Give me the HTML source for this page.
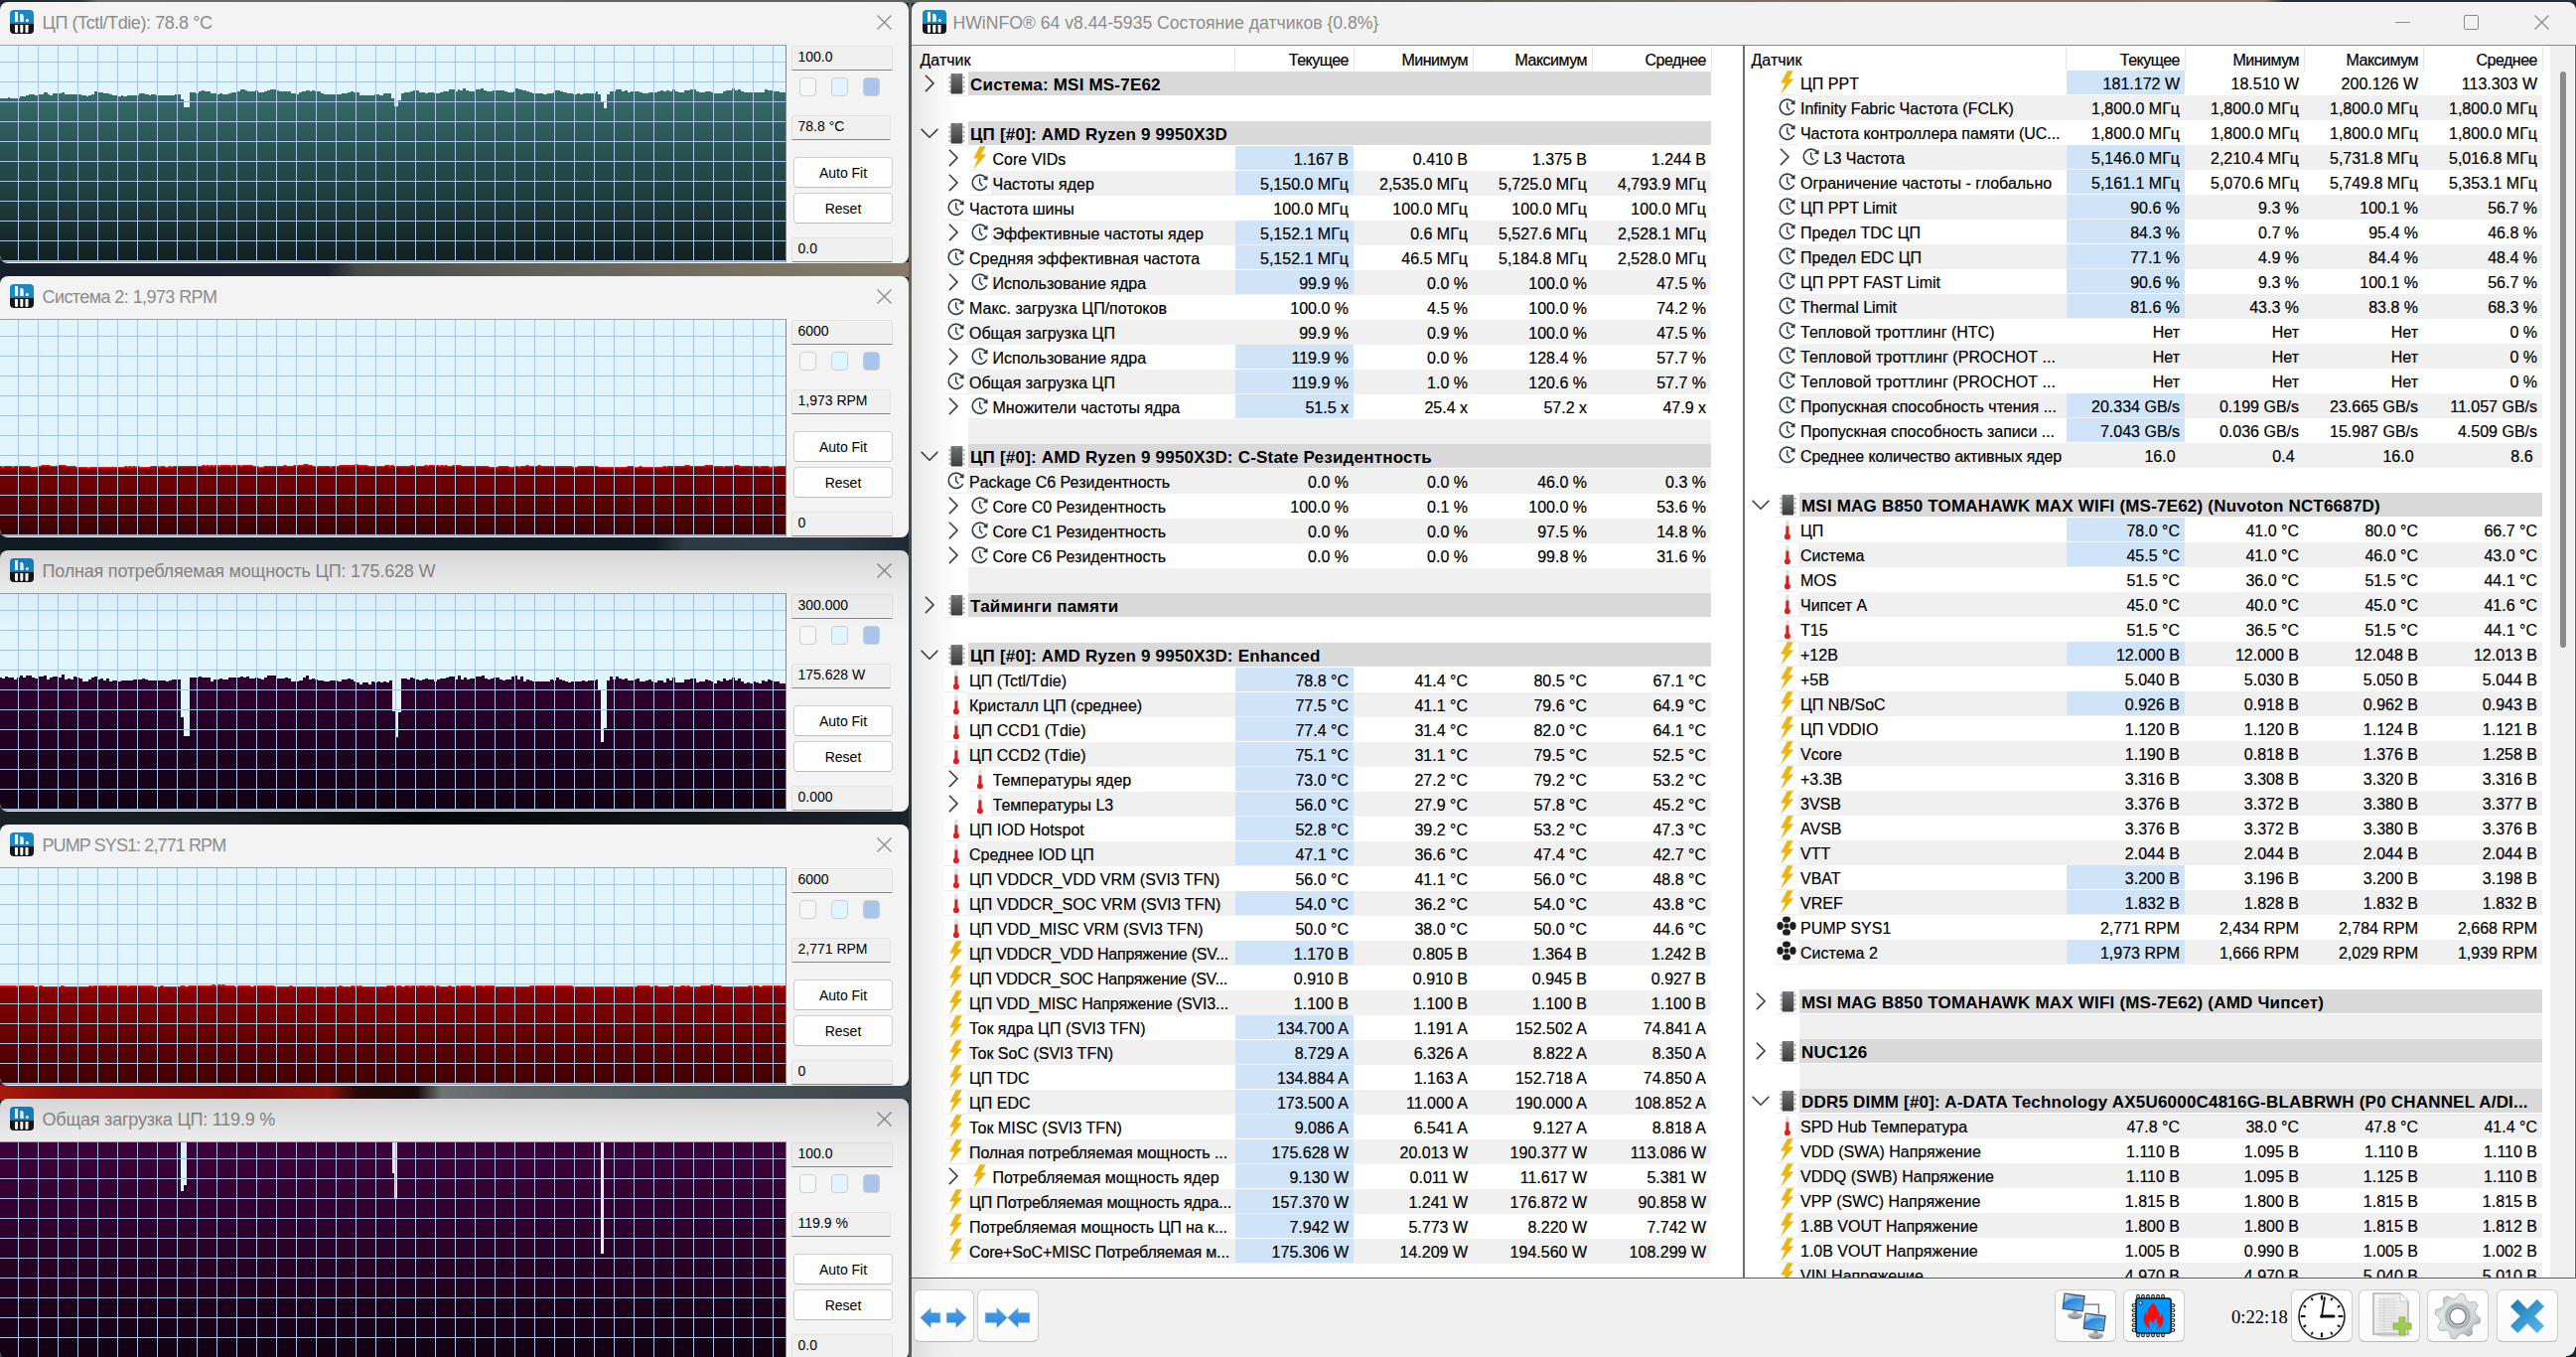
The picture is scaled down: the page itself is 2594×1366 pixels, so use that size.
<!DOCTYPE html><html><head><meta charset="utf-8"><style>
html,body{margin:0;padding:0;width:2594px;height:1366px;overflow:hidden;background:#1b242b;font-family:"Liberation Sans",sans-serif;color:#000}
.a{position:absolute}
.t{white-space:pre;font-size:16px;-webkit-text-stroke:0.2px #000}
</style></head><body>
<div class="a" style="left:0px;top:0px;width:2594px;height:3px;background:linear-gradient(90deg,#1c262d 0,#2a3338 80px,#6a6e6a 100px,#5d625f 900px,#4f5552 1300px,#7a7262 1800px,#8b7e69 2280px,#25303a 2300px,#25303a 2594px)"></div><div class="a" style="left:0px;top:264px;width:915px;height:15px;background:linear-gradient(90deg,#17202a 0,#1a2430 330px,#454a48 360px,#5c5e58 520px,#7d7564 800px,#857b68 915px)"></div><div class="a" style="left:0px;top:540px;width:915px;height:15px;background:linear-gradient(90deg,#121a22 0,#131b22 660px,#2d3b44 690px,#283844 850px,#1e2a32 915px)"></div><div class="a" style="left:0px;top:816px;width:915px;height:15px;background:linear-gradient(90deg,#1a2228 0,#141a20 250px,#050608 420px,#0a0c10 560px,#1c242a 915px)"></div><div class="a" style="left:0px;top:1092px;width:915px;height:15px;background:linear-gradient(90deg,#a81a0a 0,#8a0c08 60px,#6e0808 250px,#8a1008 330px,#2a0808 360px,#1a0a0a 420px,#707476 445px,#5e6264 520px,#4a5256 700px,#3c464c 915px)"></div><div class="a" style="left:915px;top:0px;width:3px;height:1366px;background:linear-gradient(180deg,#555a5c,#6a645a 300px,#3a444a 600px,#2a3036 900px,#5a5e60 1366px)"></div><div class="a" style="left:0;top:2px;width:915px;height:263px;background:#f3f3f3;border-radius:8px;overflow:hidden"><svg style="position:absolute;left:10px;top:8px" width="24" height="24" viewBox="0 0 24 24" ><defs><clipPath id="hwc"><rect x="0" y="0" width="24" height="24" rx="4"/></clipPath></defs><g clip-path="url(#hwc)"><rect width="24" height="13.5" fill="#1a87c6"/><rect y="13.5" width="24" height="10.5" fill="#161616"/></g><rect x="5" y="2" width="3" height="10" fill="#fff"/><path d="M10.3 4 L12.3 4 Q13.7 4.5 13.7 6.5 L13.7 12 L10.3 12 Z" fill="#fff"/><circle cx="17.3" cy="10.5" r="1.5" fill="#fff"/><path d="M5 15 h3 v6.5 a1.5 1.5 0 0 1 -3 0 Z M10.3 15 h3 v6.5 a1.5 1.5 0 0 1 -3 0 Z M15.5 15 h3 v6.5 a1.5 1.5 0 0 1 -3 0 Z" fill="#fff"/></svg><div class="a" style="left:42.5px;top:8.5px;height:25px;line-height:25px;font-size:18px;letter-spacing:-0.41px;color:#8c8c8c;white-space:pre">ЦП (Tctl/Tdie): 78.8 °C</div><svg style="position:absolute;left:883px;top:13px" width="15" height="15" viewBox="0 0 15 15" ><path d="M0.5 0.5 L14.5 14.5 M14.5 0.5 L0.5 14.5" stroke="#8a8a8a" stroke-width="1.3" fill="none"/></svg><div class="a" style="left:0;top:43px;width:792px;height:1px;background:#9e9e9e"></div><div class="a" style="left:0;top:261px;width:792px;height:1px;background:#a0a0a0"></div><div class="a" style="left:791px;top:43px;width:1px;height:219px;background:#8a8a8a"></div><svg style="position:absolute;left:0px;top:44px" width="791" height="217" viewBox="0 0 791 217" ><defs><linearGradient id="gf0" x1="0" y1="0" x2="0" y2="1"><stop offset="0" stop-color="#386f6d"/><stop offset="1" stop-color="#112020"/></linearGradient></defs><rect width="791" height="217" fill="#e0f6fc"/><polygon points="0,217 0,53 8,53 8,52 10,52 10,53 18,53 18,53 20,53 20,51 26,51 26,50 29,50 29,49 35,49 35,50 38,50 38,49 44,49 44,47 48,47 48,49 50,49 50,50 53,50 53,48 62,48 62,47 65,47 65,49 82,49 82,50 87,50 87,51 89,51 89,50 92,50 92,49 95,49 95,46 98,46 98,47 104,47 104,48 110,48 110,49 113,49 113,50 119,50 119,51 122,51 122,50 124,50 124,51 128,51 128,50 140,50 140,48 146,48 146,49 150,49 150,50 152,50 152,49 157,49 157,50 176,50 176,49 182,49 182,54 185,54 185,62 191,62 191,47 197,47 197,48 200,48 200,46 203,46 203,45 206,45 206,46 212,46 212,48 218,48 218,49 221,49 221,48 224,48 224,49 230,49 230,48 233,48 233,47 239,47 239,46 242,46 242,44 247,44 247,45 249,45 249,46 257,46 257,45 260,45 260,47 266,47 266,46 269,46 269,45 272,45 272,44 278,44 278,45 281,45 281,46 293,46 293,48 298,48 298,49 301,49 301,47 304,47 304,46 308,46 308,45 312,45 312,46 314,46 314,45 317,45 317,46 323,46 323,48 326,48 326,49 344,49 344,48 350,48 350,47 353,47 353,46 356,46 356,47 362,47 362,50 377,50 377,49 382,49 382,50 386,50 386,48 394,48 394,53 397,53 397,61 400,61 400,61 401,61 401,55 404,55 404,48 407,48 407,47 413,47 413,46 416,46 416,45 422,45 422,47 428,47 428,48 431,48 431,47 437,47 437,48 443,48 443,47 446,47 446,46 452,46 452,44 458,44 458,46 461,46 461,44 463,44 463,45 466,45 466,43 469,43 469,45 472,45 472,46 478,46 478,44 484,44 484,43 487,43 487,45 490,45 490,46 496,46 496,45 508,45 508,46 511,46 511,47 517,47 517,46 519,46 519,43 522,43 522,44 526,44 526,45 530,45 530,46 533,46 533,47 536,47 536,48 547,48 547,49 551,49 551,48 557,48 557,47 559,47 559,45 564,45 564,46 567,46 567,47 571,47 571,48 577,48 577,49 581,49 581,48 584,48 584,49 587,49 587,48 600,48 600,46 602,46 602,49 605,49 605,56 608,56 608,63 611,63 611,49 614,49 614,46 620,46 620,44 626,44 626,46 629,46 629,45 632,45 632,47 635,47 635,46 644,46 644,47 647,47 647,48 653,48 653,47 662,47 662,46 665,46 665,45 668,45 668,46 671,46 671,45 674,45 674,46 677,46 677,44 680,44 680,46 683,46 683,47 689,47 689,45 695,45 695,44 701,44 701,46 704,46 704,47 710,47 710,46 716,46 716,47 719,47 719,48 728,48 728,46 731,46 731,45 737,45 737,43 740,43 740,45 743,45 743,44 746,44 746,46 749,46 749,47 770,47 770,44 773,44 773,45 779,45 779,46 785,46 785,47 791,47 791,217" fill="url(#gf0)" shape-rendering="crispEdges"/><path d="M0 16.5H791M0 36.5H791M0 56.5H791M0 76.5H791M0 96.5H791M0 116.5H791M0 136.5H791M0 156.5H791M0 176.5H791M0 196.5H791M0 216.5H791M18.5 0V217M38.5 0V217M58.5 0V217M78.5 0V217M98.5 0V217M118.5 0V217M138.5 0V217M158.5 0V217M178.5 0V217M198.5 0V217M218.5 0V217M238.5 0V217M258.5 0V217M278.5 0V217M298.5 0V217M318.5 0V217M338.5 0V217M358.5 0V217M378.5 0V217M398.5 0V217M418.5 0V217M438.5 0V217M458.5 0V217M478.5 0V217M498.5 0V217M518.5 0V217M538.5 0V217M558.5 0V217M578.5 0V217M598.5 0V217M618.5 0V217M638.5 0V217M658.5 0V217M678.5 0V217M698.5 0V217M718.5 0V217M738.5 0V217M758.5 0V217M778.5 0V217" stroke="#a8c4ea" stroke-width="1" fill="none"/></svg><div class="a" style="left:797px;top:44px;width:100px;height:23px;background:#f0f0f0;border:1px solid #e2e2e2;border-bottom:1px solid #868686;border-radius:3px 3px 0 0"></div><div class="a" style="left:803.5px;top:43px;height:25px;line-height:25px;font-size:14px;white-space:pre">100.0</div><div class="a" style="left:805px;top:76px;width:15px;height:17px;background:#f5f6f6;border:1px solid #cfcfcf;border-radius:4px"></div><div class="a" style="left:837px;top:76px;width:15px;height:17px;background:#e0f6fc;border:1px solid #cfcfcf;border-radius:4px"></div><div class="a" style="left:869px;top:76px;width:15px;height:17px;background:#a8c4ea;border:1px solid #cfcfcf;border-radius:4px"></div><div class="a" style="left:797px;top:114px;width:98px;height:23px;background:#f0f0f0;border:1px solid #e2e2e2;border-bottom:1px solid #868686;border-radius:3px 3px 0 0"></div><div class="a" style="left:803.5px;top:113px;height:25px;line-height:25px;font-size:14px;white-space:pre">78.8 °C</div><div class="a" style="left:799px;top:156px;width:98px;height:29px;background:#fdfdfd;border:1px solid #d0d0d0;border-bottom-color:#bdbdbd;border-radius:4px;text-align:center;line-height:31px;font-size:14px">Auto Fit</div><div class="a" style="left:799px;top:192px;width:98px;height:29px;background:#fdfdfd;border:1px solid #d0d0d0;border-bottom-color:#bdbdbd;border-radius:4px;text-align:center;line-height:31px;font-size:14px">Reset</div><div class="a" style="left:797px;top:237px;width:100px;height:23px;background:#f0f0f0;border:1px solid #e2e2e2;border-bottom:1px solid #868686;border-radius:3px 3px 0 0"></div><div class="a" style="left:803.5px;top:236px;height:25px;line-height:25px;font-size:14px;white-space:pre">0.0</div></div><div class="a" style="left:0;top:278px;width:915px;height:263px;background:#f3f3f3;border-radius:8px;overflow:hidden"><svg style="position:absolute;left:10px;top:8px" width="24" height="24" viewBox="0 0 24 24" ><defs><clipPath id="hwc"><rect x="0" y="0" width="24" height="24" rx="4"/></clipPath></defs><g clip-path="url(#hwc)"><rect width="24" height="13.5" fill="#1a87c6"/><rect y="13.5" width="24" height="10.5" fill="#161616"/></g><rect x="5" y="2" width="3" height="10" fill="#fff"/><path d="M10.3 4 L12.3 4 Q13.7 4.5 13.7 6.5 L13.7 12 L10.3 12 Z" fill="#fff"/><circle cx="17.3" cy="10.5" r="1.5" fill="#fff"/><path d="M5 15 h3 v6.5 a1.5 1.5 0 0 1 -3 0 Z M10.3 15 h3 v6.5 a1.5 1.5 0 0 1 -3 0 Z M15.5 15 h3 v6.5 a1.5 1.5 0 0 1 -3 0 Z" fill="#fff"/></svg><div class="a" style="left:42.5px;top:8.5px;height:25px;line-height:25px;font-size:18px;letter-spacing:-0.58px;color:#8c8c8c;white-space:pre">Система 2: 1,973 RPM</div><svg style="position:absolute;left:883px;top:13px" width="15" height="15" viewBox="0 0 15 15" ><path d="M0.5 0.5 L14.5 14.5 M14.5 0.5 L0.5 14.5" stroke="#8a8a8a" stroke-width="1.3" fill="none"/></svg><div class="a" style="left:0;top:43px;width:792px;height:1px;background:#9e9e9e"></div><div class="a" style="left:0;top:261px;width:792px;height:1px;background:#a0a0a0"></div><div class="a" style="left:791px;top:43px;width:1px;height:219px;background:#8a8a8a"></div><svg style="position:absolute;left:0px;top:44px" width="791" height="217" viewBox="0 0 791 217" ><defs><linearGradient id="gf1" x1="0" y1="0" x2="0" y2="1"><stop offset="0" stop-color="#7e0000"/><stop offset="1" stop-color="#3a0000"/></linearGradient></defs><rect width="791" height="217" fill="#e0f6fc"/><polygon points="0,217 0,147 2,147 2,148 4,148 4,147 6,147 6,147 8,147 8,147 10,147 10,147 12,147 12,148 14,148 14,147 16,147 16,147 18,147 18,147 20,147 20,147 22,147 22,147 24,147 24,147 26,147 26,147 28,147 28,147 30,147 30,148 32,148 32,148 34,148 34,148 36,148 36,148 38,148 38,147 40,147 40,147 42,147 42,146 44,146 44,146 46,146 46,146 48,146 48,146 50,146 50,147 52,147 52,147 54,147 54,147 56,147 56,147 58,147 58,146 60,146 60,146 62,146 62,146 64,146 64,146 66,146 66,147 68,147 68,147 70,147 70,147 72,147 72,147 74,147 74,147 76,147 76,148 78,148 78,148 80,148 80,148 82,148 82,148 84,148 84,148 86,148 86,148 88,148 88,149 90,149 90,148 92,148 92,148 94,148 94,148 96,148 96,148 98,148 98,148 100,148 100,148 102,148 102,148 104,148 104,148 106,148 106,148 108,148 108,148 110,148 110,148 112,148 112,148 114,148 114,148 116,148 116,148 118,148 118,148 120,148 120,148 122,148 122,148 124,148 124,148 126,148 126,147 128,147 128,148 130,148 130,147 132,147 132,148 134,148 134,147 136,147 136,148 138,148 138,147 140,147 140,148 142,148 142,148 144,148 144,148 146,148 146,148 148,148 148,148 150,148 150,148 152,148 152,147 154,147 154,147 156,147 156,147 158,147 158,147 160,147 160,148 162,148 162,147 164,147 164,147 166,147 166,148 168,148 168,148 170,148 170,147 172,147 172,148 174,148 174,147 176,147 176,147 178,147 178,147 180,147 180,147 182,147 182,147 184,147 184,147 186,147 186,147 188,147 188,147 190,147 190,147 192,147 192,147 194,147 194,147 196,147 196,147 198,147 198,147 200,147 200,147 202,147 202,147 204,147 204,146 206,146 206,147 208,147 208,146 210,146 210,147 212,147 212,146 214,146 214,147 216,147 216,146 218,146 218,146 220,146 220,147 222,147 222,146 224,146 224,146 226,146 226,146 228,146 228,146 230,146 230,146 232,146 232,147 234,147 234,146 236,146 236,146 238,146 238,146 240,146 240,146 242,146 242,147 244,147 244,146 246,146 246,146 248,146 248,146 250,146 250,146 252,146 252,146 254,146 254,147 256,147 256,147 258,147 258,147 260,147 260,148 262,148 262,148 264,148 264,148 266,148 266,147 268,147 268,147 270,147 270,147 272,147 272,147 274,147 274,147 276,147 276,147 278,147 278,147 280,147 280,147 282,147 282,147 284,147 284,147 286,147 286,146 288,146 288,147 290,147 290,147 292,147 292,147 294,147 294,147 296,147 296,146 298,146 298,147 300,147 300,146 302,146 302,146 304,146 304,146 306,146 306,145 308,145 308,145 310,145 310,146 312,146 312,146 314,146 314,147 316,147 316,147 318,147 318,148 320,148 320,147 322,147 322,147 324,147 324,147 326,147 326,147 328,147 328,147 330,147 330,147 332,147 332,148 334,148 334,147 336,147 336,147 338,147 338,147 340,147 340,147 342,147 342,146 344,146 344,146 346,146 346,146 348,146 348,146 350,146 350,146 352,146 352,146 354,146 354,146 356,146 356,146 358,146 358,145 360,145 360,146 362,146 362,146 364,146 364,146 366,146 366,146 368,146 368,146 370,146 370,147 372,147 372,147 374,147 374,147 376,147 376,147 378,147 378,147 380,147 380,147 382,147 382,147 384,147 384,147 386,147 386,147 388,147 388,146 390,146 390,146 392,146 392,147 394,147 394,146 396,146 396,147 398,147 398,147 400,147 400,147 402,147 402,147 404,147 404,147 406,147 406,147 408,147 408,147 410,147 410,147 412,147 412,147 414,147 414,146 416,146 416,147 418,147 418,147 420,147 420,147 422,147 422,147 424,147 424,147 426,147 426,147 428,147 428,146 430,146 430,147 432,147 432,146 434,146 434,146 436,146 436,146 438,146 438,147 440,147 440,146 442,146 442,147 444,147 444,146 446,146 446,147 448,147 448,146 450,146 450,147 452,147 452,147 454,147 454,147 456,147 456,146 458,146 458,146 460,146 460,146 462,146 462,146 464,146 464,147 466,147 466,147 468,147 468,147 470,147 470,147 472,147 472,147 474,147 474,147 476,147 476,147 478,147 478,147 480,147 480,147 482,147 482,147 484,147 484,147 486,147 486,147 488,147 488,147 490,147 490,147 492,147 492,148 494,148 494,148 496,148 496,148 498,148 498,148 500,148 500,148 502,148 502,147 504,147 504,147 506,147 506,147 508,147 508,147 510,147 510,147 512,147 512,148 514,148 514,148 516,148 516,148 518,148 518,147 520,147 520,147 522,147 522,148 524,148 524,147 526,147 526,147 528,147 528,147 530,147 530,146 532,146 532,147 534,147 534,147 536,147 536,147 538,147 538,147 540,147 540,147 542,147 542,146 544,146 544,147 546,147 546,147 548,147 548,147 550,147 550,147 552,147 552,147 554,147 554,147 556,147 556,147 558,147 558,147 560,147 560,147 562,147 562,147 564,147 564,147 566,147 566,147 568,147 568,147 570,147 570,147 572,147 572,147 574,147 574,147 576,147 576,148 578,148 578,148 580,148 580,148 582,148 582,147 584,147 584,147 586,147 586,147 588,147 588,147 590,147 590,147 592,147 592,147 594,147 594,147 596,147 596,147 598,147 598,147 600,147 600,147 602,147 602,148 604,148 604,148 606,148 606,148 608,148 608,148 610,148 610,148 612,148 612,148 614,148 614,148 616,148 616,148 618,148 618,148 620,148 620,148 622,148 622,148 624,148 624,148 626,148 626,148 628,148 628,148 630,148 630,148 632,148 632,147 634,147 634,147 636,147 636,147 638,147 638,148 640,148 640,148 642,148 642,148 644,148 644,147 646,147 646,148 648,148 648,148 650,148 650,148 652,148 652,148 654,148 654,148 656,148 656,148 658,148 658,148 660,148 660,148 662,148 662,148 664,148 664,148 666,148 666,148 668,148 668,147 670,147 670,148 672,148 672,147 674,147 674,147 676,147 676,147 678,147 678,147 680,147 680,147 682,147 682,147 684,147 684,147 686,147 686,147 688,147 688,147 690,147 690,146 692,146 692,146 694,146 694,147 696,147 696,147 698,147 698,147 700,147 700,147 702,147 702,147 704,147 704,147 706,147 706,147 708,147 708,147 710,147 710,146 712,146 712,146 714,146 714,146 716,146 716,146 718,146 718,147 720,147 720,147 722,147 722,147 724,147 724,147 726,147 726,147 728,147 728,148 730,148 730,147 732,147 732,147 734,147 734,147 736,147 736,147 738,147 738,147 740,147 740,146 742,146 742,146 744,146 744,147 746,147 746,147 748,147 748,147 750,147 750,147 752,147 752,147 754,147 754,147 756,147 756,147 758,147 758,147 760,147 760,147 762,147 762,147 764,147 764,148 766,148 766,147 768,147 768,147 770,147 770,147 772,147 772,147 774,147 774,148 776,148 776,148 778,148 778,147 780,147 780,148 782,148 782,147 784,147 784,147 786,147 786,147 788,147 788,147 790,147 790,147 792,147 791,217" fill="url(#gf1)" shape-rendering="crispEdges"/><polyline points="0,147.5 2,147.5 2,148.5 4,148.5 4,147.5 6,147.5 6,147.5 8,147.5 8,147.5 10,147.5 10,147.5 12,147.5 12,148.5 14,148.5 14,147.5 16,147.5 16,147.5 18,147.5 18,147.5 20,147.5 20,147.5 22,147.5 22,147.5 24,147.5 24,147.5 26,147.5 26,147.5 28,147.5 28,147.5 30,147.5 30,148.5 32,148.5 32,148.5 34,148.5 34,148.5 36,148.5 36,148.5 38,148.5 38,147.5 40,147.5 40,147.5 42,147.5 42,146.5 44,146.5 44,146.5 46,146.5 46,146.5 48,146.5 48,146.5 50,146.5 50,147.5 52,147.5 52,147.5 54,147.5 54,147.5 56,147.5 56,147.5 58,147.5 58,146.5 60,146.5 60,146.5 62,146.5 62,146.5 64,146.5 64,146.5 66,146.5 66,147.5 68,147.5 68,147.5 70,147.5 70,147.5 72,147.5 72,147.5 74,147.5 74,147.5 76,147.5 76,148.5 78,148.5 78,148.5 80,148.5 80,148.5 82,148.5 82,148.5 84,148.5 84,148.5 86,148.5 86,148.5 88,148.5 88,149.5 90,149.5 90,148.5 92,148.5 92,148.5 94,148.5 94,148.5 96,148.5 96,148.5 98,148.5 98,148.5 100,148.5 100,148.5 102,148.5 102,148.5 104,148.5 104,148.5 106,148.5 106,148.5 108,148.5 108,148.5 110,148.5 110,148.5 112,148.5 112,148.5 114,148.5 114,148.5 116,148.5 116,148.5 118,148.5 118,148.5 120,148.5 120,148.5 122,148.5 122,148.5 124,148.5 124,148.5 126,148.5 126,147.5 128,147.5 128,148.5 130,148.5 130,147.5 132,147.5 132,148.5 134,148.5 134,147.5 136,147.5 136,148.5 138,148.5 138,147.5 140,147.5 140,148.5 142,148.5 142,148.5 144,148.5 144,148.5 146,148.5 146,148.5 148,148.5 148,148.5 150,148.5 150,148.5 152,148.5 152,147.5 154,147.5 154,147.5 156,147.5 156,147.5 158,147.5 158,147.5 160,147.5 160,148.5 162,148.5 162,147.5 164,147.5 164,147.5 166,147.5 166,148.5 168,148.5 168,148.5 170,148.5 170,147.5 172,147.5 172,148.5 174,148.5 174,147.5 176,147.5 176,147.5 178,147.5 178,147.5 180,147.5 180,147.5 182,147.5 182,147.5 184,147.5 184,147.5 186,147.5 186,147.5 188,147.5 188,147.5 190,147.5 190,147.5 192,147.5 192,147.5 194,147.5 194,147.5 196,147.5 196,147.5 198,147.5 198,147.5 200,147.5 200,147.5 202,147.5 202,147.5 204,147.5 204,146.5 206,146.5 206,147.5 208,147.5 208,146.5 210,146.5 210,147.5 212,147.5 212,146.5 214,146.5 214,147.5 216,147.5 216,146.5 218,146.5 218,146.5 220,146.5 220,147.5 222,147.5 222,146.5 224,146.5 224,146.5 226,146.5 226,146.5 228,146.5 228,146.5 230,146.5 230,146.5 232,146.5 232,147.5 234,147.5 234,146.5 236,146.5 236,146.5 238,146.5 238,146.5 240,146.5 240,146.5 242,146.5 242,147.5 244,147.5 244,146.5 246,146.5 246,146.5 248,146.5 248,146.5 250,146.5 250,146.5 252,146.5 252,146.5 254,146.5 254,147.5 256,147.5 256,147.5 258,147.5 258,147.5 260,147.5 260,148.5 262,148.5 262,148.5 264,148.5 264,148.5 266,148.5 266,147.5 268,147.5 268,147.5 270,147.5 270,147.5 272,147.5 272,147.5 274,147.5 274,147.5 276,147.5 276,147.5 278,147.5 278,147.5 280,147.5 280,147.5 282,147.5 282,147.5 284,147.5 284,147.5 286,147.5 286,146.5 288,146.5 288,147.5 290,147.5 290,147.5 292,147.5 292,147.5 294,147.5 294,147.5 296,147.5 296,146.5 298,146.5 298,147.5 300,147.5 300,146.5 302,146.5 302,146.5 304,146.5 304,146.5 306,146.5 306,145.5 308,145.5 308,145.5 310,145.5 310,146.5 312,146.5 312,146.5 314,146.5 314,147.5 316,147.5 316,147.5 318,147.5 318,148.5 320,148.5 320,147.5 322,147.5 322,147.5 324,147.5 324,147.5 326,147.5 326,147.5 328,147.5 328,147.5 330,147.5 330,147.5 332,147.5 332,148.5 334,148.5 334,147.5 336,147.5 336,147.5 338,147.5 338,147.5 340,147.5 340,147.5 342,147.5 342,146.5 344,146.5 344,146.5 346,146.5 346,146.5 348,146.5 348,146.5 350,146.5 350,146.5 352,146.5 352,146.5 354,146.5 354,146.5 356,146.5 356,146.5 358,146.5 358,145.5 360,145.5 360,146.5 362,146.5 362,146.5 364,146.5 364,146.5 366,146.5 366,146.5 368,146.5 368,146.5 370,146.5 370,147.5 372,147.5 372,147.5 374,147.5 374,147.5 376,147.5 376,147.5 378,147.5 378,147.5 380,147.5 380,147.5 382,147.5 382,147.5 384,147.5 384,147.5 386,147.5 386,147.5 388,147.5 388,146.5 390,146.5 390,146.5 392,146.5 392,147.5 394,147.5 394,146.5 396,146.5 396,147.5 398,147.5 398,147.5 400,147.5 400,147.5 402,147.5 402,147.5 404,147.5 404,147.5 406,147.5 406,147.5 408,147.5 408,147.5 410,147.5 410,147.5 412,147.5 412,147.5 414,147.5 414,146.5 416,146.5 416,147.5 418,147.5 418,147.5 420,147.5 420,147.5 422,147.5 422,147.5 424,147.5 424,147.5 426,147.5 426,147.5 428,147.5 428,146.5 430,146.5 430,147.5 432,147.5 432,146.5 434,146.5 434,146.5 436,146.5 436,146.5 438,146.5 438,147.5 440,147.5 440,146.5 442,146.5 442,147.5 444,147.5 444,146.5 446,146.5 446,147.5 448,147.5 448,146.5 450,146.5 450,147.5 452,147.5 452,147.5 454,147.5 454,147.5 456,147.5 456,146.5 458,146.5 458,146.5 460,146.5 460,146.5 462,146.5 462,146.5 464,146.5 464,147.5 466,147.5 466,147.5 468,147.5 468,147.5 470,147.5 470,147.5 472,147.5 472,147.5 474,147.5 474,147.5 476,147.5 476,147.5 478,147.5 478,147.5 480,147.5 480,147.5 482,147.5 482,147.5 484,147.5 484,147.5 486,147.5 486,147.5 488,147.5 488,147.5 490,147.5 490,147.5 492,147.5 492,148.5 494,148.5 494,148.5 496,148.5 496,148.5 498,148.5 498,148.5 500,148.5 500,148.5 502,148.5 502,147.5 504,147.5 504,147.5 506,147.5 506,147.5 508,147.5 508,147.5 510,147.5 510,147.5 512,147.5 512,148.5 514,148.5 514,148.5 516,148.5 516,148.5 518,148.5 518,147.5 520,147.5 520,147.5 522,147.5 522,148.5 524,148.5 524,147.5 526,147.5 526,147.5 528,147.5 528,147.5 530,147.5 530,146.5 532,146.5 532,147.5 534,147.5 534,147.5 536,147.5 536,147.5 538,147.5 538,147.5 540,147.5 540,147.5 542,147.5 542,146.5 544,146.5 544,147.5 546,147.5 546,147.5 548,147.5 548,147.5 550,147.5 550,147.5 552,147.5 552,147.5 554,147.5 554,147.5 556,147.5 556,147.5 558,147.5 558,147.5 560,147.5 560,147.5 562,147.5 562,147.5 564,147.5 564,147.5 566,147.5 566,147.5 568,147.5 568,147.5 570,147.5 570,147.5 572,147.5 572,147.5 574,147.5 574,147.5 576,147.5 576,148.5 578,148.5 578,148.5 580,148.5 580,148.5 582,148.5 582,147.5 584,147.5 584,147.5 586,147.5 586,147.5 588,147.5 588,147.5 590,147.5 590,147.5 592,147.5 592,147.5 594,147.5 594,147.5 596,147.5 596,147.5 598,147.5 598,147.5 600,147.5 600,147.5 602,147.5 602,148.5 604,148.5 604,148.5 606,148.5 606,148.5 608,148.5 608,148.5 610,148.5 610,148.5 612,148.5 612,148.5 614,148.5 614,148.5 616,148.5 616,148.5 618,148.5 618,148.5 620,148.5 620,148.5 622,148.5 622,148.5 624,148.5 624,148.5 626,148.5 626,148.5 628,148.5 628,148.5 630,148.5 630,148.5 632,148.5 632,147.5 634,147.5 634,147.5 636,147.5 636,147.5 638,147.5 638,148.5 640,148.5 640,148.5 642,148.5 642,148.5 644,148.5 644,147.5 646,147.5 646,148.5 648,148.5 648,148.5 650,148.5 650,148.5 652,148.5 652,148.5 654,148.5 654,148.5 656,148.5 656,148.5 658,148.5 658,148.5 660,148.5 660,148.5 662,148.5 662,148.5 664,148.5 664,148.5 666,148.5 666,148.5 668,148.5 668,147.5 670,147.5 670,148.5 672,148.5 672,147.5 674,147.5 674,147.5 676,147.5 676,147.5 678,147.5 678,147.5 680,147.5 680,147.5 682,147.5 682,147.5 684,147.5 684,147.5 686,147.5 686,147.5 688,147.5 688,147.5 690,147.5 690,146.5 692,146.5 692,146.5 694,146.5 694,147.5 696,147.5 696,147.5 698,147.5 698,147.5 700,147.5 700,147.5 702,147.5 702,147.5 704,147.5 704,147.5 706,147.5 706,147.5 708,147.5 708,147.5 710,147.5 710,146.5 712,146.5 712,146.5 714,146.5 714,146.5 716,146.5 716,146.5 718,146.5 718,147.5 720,147.5 720,147.5 722,147.5 722,147.5 724,147.5 724,147.5 726,147.5 726,147.5 728,147.5 728,148.5 730,148.5 730,147.5 732,147.5 732,147.5 734,147.5 734,147.5 736,147.5 736,147.5 738,147.5 738,147.5 740,147.5 740,146.5 742,146.5 742,146.5 744,146.5 744,147.5 746,147.5 746,147.5 748,147.5 748,147.5 750,147.5 750,147.5 752,147.5 752,147.5 754,147.5 754,147.5 756,147.5 756,147.5 758,147.5 758,147.5 760,147.5 760,147.5 762,147.5 762,147.5 764,147.5 764,148.5 766,148.5 766,147.5 768,147.5 768,147.5 770,147.5 770,147.5 772,147.5 772,147.5 774,147.5 774,148.5 776,148.5 776,148.5 778,148.5 778,147.5 780,147.5 780,148.5 782,148.5 782,147.5 784,147.5 784,147.5 786,147.5 786,147.5 788,147.5 788,147.5 790,147.5 790,147.5 792,147.5" fill="none" stroke="#ff0a0a" stroke-width="1.2"/><polyline points="0,147.5 2,147.5 2,148.5 4,148.5 4,147.5 6,147.5 6,147.5 8,147.5 8,147.5 10,147.5 10,147.5 12,147.5 12,148.5 14,148.5 14,147.5 16,147.5 16,147.5 18,147.5 18,147.5 20,147.5 20,147.5 22,147.5 22,147.5 24,147.5 24,147.5 26,147.5 26,147.5 28,147.5 28,147.5 30,147.5 30,148.5 32,148.5 32,148.5 34,148.5 34,148.5 36,148.5 36,148.5 38,148.5 38,147.5 40,147.5 40,147.5 42,147.5 42,146.5 44,146.5 44,146.5 46,146.5 46,146.5 48,146.5 48,146.5 50,146.5 50,147.5 52,147.5 52,147.5 54,147.5 54,147.5 56,147.5 56,147.5 58,147.5 58,146.5 60,146.5 60,146.5 62,146.5 62,146.5 64,146.5 64,146.5 66,146.5 66,147.5 68,147.5 68,147.5 70,147.5 70,147.5 72,147.5 72,147.5 74,147.5 74,147.5 76,147.5 76,148.5 78,148.5 78,148.5 80,148.5 80,148.5 82,148.5 82,148.5 84,148.5 84,148.5 86,148.5 86,148.5 88,148.5 88,149.5 90,149.5 90,148.5 92,148.5 92,148.5 94,148.5 94,148.5 96,148.5 96,148.5 98,148.5 98,148.5 100,148.5 100,148.5 102,148.5 102,148.5 104,148.5 104,148.5 106,148.5 106,148.5 108,148.5 108,148.5 110,148.5 110,148.5 112,148.5 112,148.5 114,148.5 114,148.5 116,148.5 116,148.5 118,148.5 118,148.5 120,148.5 120,148.5 122,148.5 122,148.5 124,148.5 124,148.5 126,148.5 126,147.5 128,147.5 128,148.5 130,148.5 130,147.5 132,147.5 132,148.5 134,148.5 134,147.5 136,147.5 136,148.5 138,148.5 138,147.5 140,147.5 140,148.5 142,148.5 142,148.5 144,148.5 144,148.5 146,148.5 146,148.5 148,148.5 148,148.5 150,148.5 150,148.5 152,148.5 152,147.5 154,147.5 154,147.5 156,147.5 156,147.5 158,147.5 158,147.5 160,147.5 160,148.5 162,148.5 162,147.5 164,147.5 164,147.5 166,147.5 166,148.5 168,148.5 168,148.5 170,148.5 170,147.5 172,147.5 172,148.5 174,148.5 174,147.5 176,147.5 176,147.5 178,147.5 178,147.5 180,147.5 180,147.5 182,147.5 182,147.5 184,147.5 184,147.5 186,147.5 186,147.5 188,147.5 188,147.5 190,147.5 190,147.5 192,147.5 192,147.5 194,147.5 194,147.5 196,147.5 196,147.5 198,147.5 198,147.5 200,147.5 200,147.5 202,147.5 202,147.5 204,147.5 204,146.5 206,146.5 206,147.5 208,147.5 208,146.5 210,146.5 210,147.5 212,147.5 212,146.5 214,146.5 214,147.5 216,147.5 216,146.5 218,146.5 218,146.5 220,146.5 220,147.5 222,147.5 222,146.5 224,146.5 224,146.5 226,146.5 226,146.5 228,146.5 228,146.5 230,146.5 230,146.5 232,146.5 232,147.5 234,147.5 234,146.5 236,146.5 236,146.5 238,146.5 238,146.5 240,146.5 240,146.5 242,146.5 242,147.5 244,147.5 244,146.5 246,146.5 246,146.5 248,146.5 248,146.5 250,146.5 250,146.5 252,146.5 252,146.5 254,146.5 254,147.5 256,147.5 256,147.5 258,147.5 258,147.5 260,147.5 260,148.5 262,148.5 262,148.5 264,148.5 264,148.5 266,148.5 266,147.5 268,147.5 268,147.5 270,147.5 270,147.5 272,147.5 272,147.5 274,147.5 274,147.5 276,147.5 276,147.5 278,147.5 278,147.5 280,147.5 280,147.5 282,147.5 282,147.5 284,147.5 284,147.5 286,147.5 286,146.5 288,146.5 288,147.5 290,147.5 290,147.5 292,147.5 292,147.5 294,147.5 294,147.5 296,147.5 296,146.5 298,146.5 298,147.5 300,147.5 300,146.5 302,146.5 302,146.5 304,146.5 304,146.5 306,146.5 306,145.5 308,145.5 308,145.5 310,145.5 310,146.5 312,146.5 312,146.5 314,146.5 314,147.5 316,147.5 316,147.5 318,147.5 318,148.5 320,148.5 320,147.5 322,147.5 322,147.5 324,147.5 324,147.5 326,147.5 326,147.5 328,147.5 328,147.5 330,147.5 330,147.5 332,147.5 332,148.5 334,148.5 334,147.5 336,147.5 336,147.5 338,147.5 338,147.5 340,147.5 340,147.5 342,147.5 342,146.5 344,146.5 344,146.5 346,146.5 346,146.5 348,146.5 348,146.5 350,146.5 350,146.5 352,146.5 352,146.5 354,146.5 354,146.5 356,146.5 356,146.5 358,146.5 358,145.5 360,145.5 360,146.5 362,146.5 362,146.5 364,146.5 364,146.5 366,146.5 366,146.5 368,146.5 368,146.5 370,146.5 370,147.5 372,147.5 372,147.5 374,147.5 374,147.5 376,147.5 376,147.5 378,147.5 378,147.5 380,147.5 380,147.5 382,147.5 382,147.5 384,147.5 384,147.5 386,147.5 386,147.5 388,147.5 388,146.5 390,146.5 390,146.5 392,146.5 392,147.5 394,147.5 394,146.5 396,146.5 396,147.5 398,147.5 398,147.5 400,147.5 400,147.5 402,147.5 402,147.5 404,147.5 404,147.5 406,147.5 406,147.5 408,147.5 408,147.5 410,147.5 410,147.5 412,147.5 412,147.5 414,147.5 414,146.5 416,146.5 416,147.5 418,147.5 418,147.5 420,147.5 420,147.5 422,147.5 422,147.5 424,147.5 424,147.5 426,147.5 426,147.5 428,147.5 428,146.5 430,146.5 430,147.5 432,147.5 432,146.5 434,146.5 434,146.5 436,146.5 436,146.5 438,146.5 438,147.5 440,147.5 440,146.5 442,146.5 442,147.5 444,147.5 444,146.5 446,146.5 446,147.5 448,147.5 448,146.5 450,146.5 450,147.5 452,147.5 452,147.5 454,147.5 454,147.5 456,147.5 456,146.5 458,146.5 458,146.5 460,146.5 460,146.5 462,146.5 462,146.5 464,146.5 464,147.5 466,147.5 466,147.5 468,147.5 468,147.5 470,147.5 470,147.5 472,147.5 472,147.5 474,147.5 474,147.5 476,147.5 476,147.5 478,147.5 478,147.5 480,147.5 480,147.5 482,147.5 482,147.5 484,147.5 484,147.5 486,147.5 486,147.5 488,147.5 488,147.5 490,147.5 490,147.5 492,147.5 492,148.5 494,148.5 494,148.5 496,148.5 496,148.5 498,148.5 498,148.5 500,148.5 500,148.5 502,148.5 502,147.5 504,147.5 504,147.5 506,147.5 506,147.5 508,147.5 508,147.5 510,147.5 510,147.5 512,147.5 512,148.5 514,148.5 514,148.5 516,148.5 516,148.5 518,148.5 518,147.5 520,147.5 520,147.5 522,147.5 522,148.5 524,148.5 524,147.5 526,147.5 526,147.5 528,147.5 528,147.5 530,147.5 530,146.5 532,146.5 532,147.5 534,147.5 534,147.5 536,147.5 536,147.5 538,147.5 538,147.5 540,147.5 540,147.5 542,147.5 542,146.5 544,146.5 544,147.5 546,147.5 546,147.5 548,147.5 548,147.5 550,147.5 550,147.5 552,147.5 552,147.5 554,147.5 554,147.5 556,147.5 556,147.5 558,147.5 558,147.5 560,147.5 560,147.5 562,147.5 562,147.5 564,147.5 564,147.5 566,147.5 566,147.5 568,147.5 568,147.5 570,147.5 570,147.5 572,147.5 572,147.5 574,147.5 574,147.5 576,147.5 576,148.5 578,148.5 578,148.5 580,148.5 580,148.5 582,148.5 582,147.5 584,147.5 584,147.5 586,147.5 586,147.5 588,147.5 588,147.5 590,147.5 590,147.5 592,147.5 592,147.5 594,147.5 594,147.5 596,147.5 596,147.5 598,147.5 598,147.5 600,147.5 600,147.5 602,147.5 602,148.5 604,148.5 604,148.5 606,148.5 606,148.5 608,148.5 608,148.5 610,148.5 610,148.5 612,148.5 612,148.5 614,148.5 614,148.5 616,148.5 616,148.5 618,148.5 618,148.5 620,148.5 620,148.5 622,148.5 622,148.5 624,148.5 624,148.5 626,148.5 626,148.5 628,148.5 628,148.5 630,148.5 630,148.5 632,148.5 632,147.5 634,147.5 634,147.5 636,147.5 636,147.5 638,147.5 638,148.5 640,148.5 640,148.5 642,148.5 642,148.5 644,148.5 644,147.5 646,147.5 646,148.5 648,148.5 648,148.5 650,148.5 650,148.5 652,148.5 652,148.5 654,148.5 654,148.5 656,148.5 656,148.5 658,148.5 658,148.5 660,148.5 660,148.5 662,148.5 662,148.5 664,148.5 664,148.5 666,148.5 666,148.5 668,148.5 668,147.5 670,147.5 670,148.5 672,148.5 672,147.5 674,147.5 674,147.5 676,147.5 676,147.5 678,147.5 678,147.5 680,147.5 680,147.5 682,147.5 682,147.5 684,147.5 684,147.5 686,147.5 686,147.5 688,147.5 688,147.5 690,147.5 690,146.5 692,146.5 692,146.5 694,146.5 694,147.5 696,147.5 696,147.5 698,147.5 698,147.5 700,147.5 700,147.5 702,147.5 702,147.5 704,147.5 704,147.5 706,147.5 706,147.5 708,147.5 708,147.5 710,147.5 710,146.5 712,146.5 712,146.5 714,146.5 714,146.5 716,146.5 716,146.5 718,146.5 718,147.5 720,147.5 720,147.5 722,147.5 722,147.5 724,147.5 724,147.5 726,147.5 726,147.5 728,147.5 728,148.5 730,148.5 730,147.5 732,147.5 732,147.5 734,147.5 734,147.5 736,147.5 736,147.5 738,147.5 738,147.5 740,147.5 740,146.5 742,146.5 742,146.5 744,146.5 744,147.5 746,147.5 746,147.5 748,147.5 748,147.5 750,147.5 750,147.5 752,147.5 752,147.5 754,147.5 754,147.5 756,147.5 756,147.5 758,147.5 758,147.5 760,147.5 760,147.5 762,147.5 762,147.5 764,147.5 764,148.5 766,148.5 766,147.5 768,147.5 768,147.5 770,147.5 770,147.5 772,147.5 772,147.5 774,147.5 774,148.5 776,148.5 776,148.5 778,148.5 778,147.5 780,147.5 780,148.5 782,148.5 782,147.5 784,147.5 784,147.5 786,147.5 786,147.5 788,147.5 788,147.5 790,147.5 790,147.5 792,147.5" fill="none" stroke="#d00000" stroke-width="1" transform="translate(0,1)" opacity="0.6"/><path d="M0 16.5H791M0 36.5H791M0 56.5H791M0 76.5H791M0 96.5H791M0 116.5H791M0 136.5H791M0 156.5H791M0 176.5H791M0 196.5H791M0 216.5H791M18.5 0V217M38.5 0V217M58.5 0V217M78.5 0V217M98.5 0V217M118.5 0V217M138.5 0V217M158.5 0V217M178.5 0V217M198.5 0V217M218.5 0V217M238.5 0V217M258.5 0V217M278.5 0V217M298.5 0V217M318.5 0V217M338.5 0V217M358.5 0V217M378.5 0V217M398.5 0V217M418.5 0V217M438.5 0V217M458.5 0V217M478.5 0V217M498.5 0V217M518.5 0V217M538.5 0V217M558.5 0V217M578.5 0V217M598.5 0V217M618.5 0V217M638.5 0V217M658.5 0V217M678.5 0V217M698.5 0V217M718.5 0V217M738.5 0V217M758.5 0V217M778.5 0V217" stroke="#a8c4ea" stroke-width="1" fill="none"/></svg><div class="a" style="left:797px;top:44px;width:100px;height:23px;background:#f0f0f0;border:1px solid #e2e2e2;border-bottom:1px solid #868686;border-radius:3px 3px 0 0"></div><div class="a" style="left:803.5px;top:43px;height:25px;line-height:25px;font-size:14px;white-space:pre">6000</div><div class="a" style="left:805px;top:76px;width:15px;height:17px;background:#f5f6f6;border:1px solid #cfcfcf;border-radius:4px"></div><div class="a" style="left:837px;top:76px;width:15px;height:17px;background:#e0f6fc;border:1px solid #cfcfcf;border-radius:4px"></div><div class="a" style="left:869px;top:76px;width:15px;height:17px;background:#a8c4ea;border:1px solid #cfcfcf;border-radius:4px"></div><div class="a" style="left:797px;top:114px;width:98px;height:23px;background:#f0f0f0;border:1px solid #e2e2e2;border-bottom:1px solid #868686;border-radius:3px 3px 0 0"></div><div class="a" style="left:803.5px;top:113px;height:25px;line-height:25px;font-size:14px;white-space:pre">1,973 RPM</div><div class="a" style="left:799px;top:156px;width:98px;height:29px;background:#fdfdfd;border:1px solid #d0d0d0;border-bottom-color:#bdbdbd;border-radius:4px;text-align:center;line-height:31px;font-size:14px">Auto Fit</div><div class="a" style="left:799px;top:192px;width:98px;height:29px;background:#fdfdfd;border:1px solid #d0d0d0;border-bottom-color:#bdbdbd;border-radius:4px;text-align:center;line-height:31px;font-size:14px">Reset</div><div class="a" style="left:797px;top:237px;width:100px;height:23px;background:#f0f0f0;border:1px solid #e2e2e2;border-bottom:1px solid #868686;border-radius:3px 3px 0 0"></div><div class="a" style="left:803.5px;top:236px;height:25px;line-height:25px;font-size:14px;white-space:pre">0</div></div><div class="a" style="left:0;top:554px;width:915px;height:263px;background:#f3f3f3;border-radius:8px;overflow:hidden"><svg style="position:absolute;left:10px;top:8px" width="24" height="24" viewBox="0 0 24 24" ><defs><clipPath id="hwc"><rect x="0" y="0" width="24" height="24" rx="4"/></clipPath></defs><g clip-path="url(#hwc)"><rect width="24" height="13.5" fill="#1a87c6"/><rect y="13.5" width="24" height="10.5" fill="#161616"/></g><rect x="5" y="2" width="3" height="10" fill="#fff"/><path d="M10.3 4 L12.3 4 Q13.7 4.5 13.7 6.5 L13.7 12 L10.3 12 Z" fill="#fff"/><circle cx="17.3" cy="10.5" r="1.5" fill="#fff"/><path d="M5 15 h3 v6.5 a1.5 1.5 0 0 1 -3 0 Z M10.3 15 h3 v6.5 a1.5 1.5 0 0 1 -3 0 Z M15.5 15 h3 v6.5 a1.5 1.5 0 0 1 -3 0 Z" fill="#fff"/></svg><div class="a" style="left:42.5px;top:8.5px;height:25px;line-height:25px;font-size:18px;letter-spacing:-0.2px;color:#8c8c8c;white-space:pre">Полная потребляемая мощность ЦП: 175.628 W</div><svg style="position:absolute;left:883px;top:13px" width="15" height="15" viewBox="0 0 15 15" ><path d="M0.5 0.5 L14.5 14.5 M14.5 0.5 L0.5 14.5" stroke="#8a8a8a" stroke-width="1.3" fill="none"/></svg><div class="a" style="left:0;top:43px;width:792px;height:1px;background:#9e9e9e"></div><div class="a" style="left:0;top:261px;width:792px;height:1px;background:#a0a0a0"></div><div class="a" style="left:791px;top:43px;width:1px;height:219px;background:#8a8a8a"></div><svg style="position:absolute;left:0px;top:44px" width="791" height="217" viewBox="0 0 791 217" ><defs><linearGradient id="gf2" x1="0" y1="0" x2="0" y2="1"><stop offset="0" stop-color="#320030"/><stop offset="1" stop-color="#120010"/></linearGradient></defs><rect width="791" height="217" fill="#e0f6fc"/><polygon points="0,217 0,84 2,84 2,85 5,85 5,83 8,83 8,84 14,84 14,86 17,86 17,84 20,84 20,82 23,82 23,84 26,84 26,82 32,82 32,84 35,84 35,85 38,85 38,83 44,83 44,82 47,82 47,86 50,86 50,84 53,84 53,83 59,83 59,84 62,84 62,81 65,81 65,86 68,86 68,85 71,85 71,86 74,86 74,83 77,83 77,84 80,84 80,85 83,85 83,88 89,88 89,86 92,86 92,84 95,84 95,83 98,83 98,86 101,86 101,85 104,85 104,87 107,87 107,85 110,85 110,88 113,88 113,87 119,87 119,88 122,88 122,87 134,87 134,86 143,86 143,85 146,85 146,86 149,86 149,87 167,87 167,88 170,88 170,87 173,87 173,86 182,86 182,124 185,124 185,143 191,143 191,84 200,84 200,83 203,83 203,84 212,84 212,88 215,88 215,86 221,86 221,85 224,85 224,86 230,86 230,84 242,84 242,83 245,83 245,84 248,84 248,83 251,83 251,85 257,85 257,84 260,84 260,85 263,85 263,86 266,86 266,84 269,84 269,82 278,82 278,85 287,85 287,84 290,84 290,85 293,85 293,88 301,88 301,87 305,87 305,84 308,84 308,82 311,82 311,86 314,86 314,85 317,85 317,86 320,86 320,87 326,87 326,88 332,88 332,87 340,87 340,88 344,88 344,86 350,86 350,85 353,85 353,86 356,86 356,88 359,88 359,89 362,89 362,91 365,91 365,89 371,89 371,91 374,91 374,88 377,88 377,89 380,89 380,88 383,88 383,89 386,89 386,88 389,88 389,89 392,89 392,87 395,87 395,118 398,118 398,144 400,144 400,144 401,144 401,119 404,119 404,85 410,85 410,86 413,86 413,84 416,84 416,85 419,85 419,86 422,86 422,87 425,87 425,86 428,86 428,85 431,85 431,86 437,86 437,88 440,88 440,86 443,86 443,85 449,85 449,84 452,84 452,83 458,83 458,86 461,86 461,82 464,82 464,86 467,86 467,84 470,84 470,86 473,86 473,85 479,85 479,83 485,83 485,82 488,82 488,85 491,85 491,86 494,86 494,85 497,85 497,84 503,84 503,86 506,86 506,87 509,87 509,86 515,86 515,83 518,83 518,82 521,82 521,86 524,86 524,83 527,83 527,88 530,88 530,86 533,86 533,87 536,87 536,88 554,88 554,86 557,86 557,87 560,87 560,84 563,84 563,86 566,86 566,87 569,87 569,88 572,88 572,89 575,89 575,88 586,88 586,87 589,87 589,88 592,88 592,87 600,87 600,86 602,86 602,96 605,96 605,149 608,149 608,135 611,135 611,87 614,87 614,83 617,83 617,86 620,86 620,83 623,83 623,85 626,85 626,86 629,86 629,85 632,85 632,87 638,87 638,86 641,86 641,85 644,85 644,88 650,88 650,87 653,87 653,86 656,86 656,88 659,88 659,89 662,89 662,87 668,87 668,89 671,89 671,85 674,85 674,87 677,87 677,84 680,84 680,89 689,89 689,86 695,86 695,85 701,85 701,89 704,89 704,88 710,88 710,86 713,86 713,87 716,87 716,88 719,88 719,90 722,90 722,87 725,87 725,88 728,88 728,85 731,85 731,87 734,87 734,86 737,86 737,84 740,84 740,87 743,87 743,85 746,85 746,88 749,88 749,90 752,90 752,89 755,89 755,90 758,90 758,88 761,88 761,89 764,89 764,90 767,90 767,87 770,87 770,88 773,88 773,86 776,86 776,87 779,87 779,88 785,88 785,90 791,90 791,217" fill="url(#gf2)" shape-rendering="crispEdges"/><path d="M0 16.5H791M0 36.5H791M0 56.5H791M0 76.5H791M0 96.5H791M0 116.5H791M0 136.5H791M0 156.5H791M0 176.5H791M0 196.5H791M0 216.5H791M18.5 0V217M38.5 0V217M58.5 0V217M78.5 0V217M98.5 0V217M118.5 0V217M138.5 0V217M158.5 0V217M178.5 0V217M198.5 0V217M218.5 0V217M238.5 0V217M258.5 0V217M278.5 0V217M298.5 0V217M318.5 0V217M338.5 0V217M358.5 0V217M378.5 0V217M398.5 0V217M418.5 0V217M438.5 0V217M458.5 0V217M478.5 0V217M498.5 0V217M518.5 0V217M538.5 0V217M558.5 0V217M578.5 0V217M598.5 0V217M618.5 0V217M638.5 0V217M658.5 0V217M678.5 0V217M698.5 0V217M718.5 0V217M738.5 0V217M758.5 0V217M778.5 0V217" stroke="#a8c4ea" stroke-width="1" fill="none"/></svg><div class="a" style="left:797px;top:44px;width:100px;height:23px;background:#f0f0f0;border:1px solid #e2e2e2;border-bottom:1px solid #868686;border-radius:3px 3px 0 0"></div><div class="a" style="left:803.5px;top:43px;height:25px;line-height:25px;font-size:14px;white-space:pre">300.000</div><div class="a" style="left:805px;top:76px;width:15px;height:17px;background:#f5f6f6;border:1px solid #cfcfcf;border-radius:4px"></div><div class="a" style="left:837px;top:76px;width:15px;height:17px;background:#e0f6fc;border:1px solid #cfcfcf;border-radius:4px"></div><div class="a" style="left:869px;top:76px;width:15px;height:17px;background:#a8c4ea;border:1px solid #cfcfcf;border-radius:4px"></div><div class="a" style="left:797px;top:114px;width:98px;height:23px;background:#f0f0f0;border:1px solid #e2e2e2;border-bottom:1px solid #868686;border-radius:3px 3px 0 0"></div><div class="a" style="left:803.5px;top:113px;height:25px;line-height:25px;font-size:14px;white-space:pre">175.628 W</div><div class="a" style="left:799px;top:156px;width:98px;height:29px;background:#fdfdfd;border:1px solid #d0d0d0;border-bottom-color:#bdbdbd;border-radius:4px;text-align:center;line-height:31px;font-size:14px">Auto Fit</div><div class="a" style="left:799px;top:192px;width:98px;height:29px;background:#fdfdfd;border:1px solid #d0d0d0;border-bottom-color:#bdbdbd;border-radius:4px;text-align:center;line-height:31px;font-size:14px">Reset</div><div class="a" style="left:797px;top:237px;width:100px;height:23px;background:#f0f0f0;border:1px solid #e2e2e2;border-bottom:1px solid #868686;border-radius:3px 3px 0 0"></div><div class="a" style="left:803.5px;top:236px;height:25px;line-height:25px;font-size:14px;white-space:pre">0.000</div><div class="a" style="left:0;top:0;width:915px;height:80px;background:linear-gradient(180deg,rgba(0,0,0,0.12),rgba(0,0,0,0.04) 45%,rgba(0,0,0,0))"></div></div><div class="a" style="left:0;top:830px;width:915px;height:263px;background:#f3f3f3;border-radius:8px;overflow:hidden"><svg style="position:absolute;left:10px;top:8px" width="24" height="24" viewBox="0 0 24 24" ><defs><clipPath id="hwc"><rect x="0" y="0" width="24" height="24" rx="4"/></clipPath></defs><g clip-path="url(#hwc)"><rect width="24" height="13.5" fill="#1a87c6"/><rect y="13.5" width="24" height="10.5" fill="#161616"/></g><rect x="5" y="2" width="3" height="10" fill="#fff"/><path d="M10.3 4 L12.3 4 Q13.7 4.5 13.7 6.5 L13.7 12 L10.3 12 Z" fill="#fff"/><circle cx="17.3" cy="10.5" r="1.5" fill="#fff"/><path d="M5 15 h3 v6.5 a1.5 1.5 0 0 1 -3 0 Z M10.3 15 h3 v6.5 a1.5 1.5 0 0 1 -3 0 Z M15.5 15 h3 v6.5 a1.5 1.5 0 0 1 -3 0 Z" fill="#fff"/></svg><div class="a" style="left:42.5px;top:8.5px;height:25px;line-height:25px;font-size:18px;letter-spacing:-0.9px;color:#8c8c8c;white-space:pre">PUMP SYS1: 2,771 RPM</div><svg style="position:absolute;left:883px;top:13px" width="15" height="15" viewBox="0 0 15 15" ><path d="M0.5 0.5 L14.5 14.5 M14.5 0.5 L0.5 14.5" stroke="#8a8a8a" stroke-width="1.3" fill="none"/></svg><div class="a" style="left:0;top:43px;width:792px;height:1px;background:#9e9e9e"></div><div class="a" style="left:0;top:261px;width:792px;height:1px;background:#a0a0a0"></div><div class="a" style="left:791px;top:43px;width:1px;height:219px;background:#8a8a8a"></div><svg style="position:absolute;left:0px;top:44px" width="791" height="217" viewBox="0 0 791 217" ><defs><linearGradient id="gf3" x1="0" y1="0" x2="0" y2="1"><stop offset="0" stop-color="#8c0000"/><stop offset="1" stop-color="#400000"/></linearGradient></defs><rect width="791" height="217" fill="#e0f6fc"/><polygon points="0,217 0,118 2,118 2,118 4,118 4,118 6,118 6,118 8,118 8,118 10,118 10,118 12,118 12,118 14,118 14,118 16,118 16,119 18,119 18,118 20,118 20,118 22,118 22,118 24,118 24,118 26,118 26,118 28,118 28,118 30,118 30,118 32,118 32,118 34,118 34,119 36,119 36,119 38,119 38,119 40,119 40,118 42,118 42,119 44,119 44,119 46,119 46,119 48,119 48,119 50,119 50,119 52,119 52,119 54,119 54,119 56,119 56,119 58,119 58,119 60,119 60,119 62,119 62,118 64,118 64,119 66,119 66,119 68,119 68,119 70,119 70,119 72,119 72,119 74,119 74,119 76,119 76,119 78,119 78,119 80,119 80,119 82,119 82,119 84,119 84,119 86,119 86,119 88,119 88,119 90,119 90,118 92,118 92,119 94,119 94,118 96,118 96,118 98,118 98,118 100,118 100,118 102,118 102,118 104,118 104,118 106,118 106,118 108,118 108,119 110,119 110,118 112,118 112,118 114,118 114,118 116,118 116,118 118,118 118,118 120,118 120,118 122,118 122,118 124,118 124,118 126,118 126,118 128,118 128,119 130,119 130,118 132,118 132,118 134,118 134,118 136,118 136,118 138,118 138,118 140,118 140,118 142,118 142,118 144,118 144,118 146,118 146,118 148,118 148,118 150,118 150,118 152,118 152,118 154,118 154,119 156,119 156,119 158,119 158,119 160,119 160,119 162,119 162,118 164,118 164,119 166,119 166,119 168,119 168,119 170,119 170,119 172,119 172,119 174,119 174,119 176,119 176,119 178,119 178,119 180,119 180,119 182,119 182,118 184,118 184,118 186,118 186,119 188,119 188,119 190,119 190,118 192,118 192,118 194,118 194,118 196,118 196,118 198,118 198,118 200,118 200,118 202,118 202,118 204,118 204,118 206,118 206,118 208,118 208,118 210,118 210,118 212,118 212,118 214,118 214,117 216,117 216,118 218,118 218,118 220,118 220,117 222,117 222,118 224,118 224,117 226,117 226,118 228,118 228,118 230,118 230,118 232,118 232,118 234,118 234,118 236,118 236,119 238,119 238,119 240,119 240,118 242,118 242,118 244,118 244,118 246,118 246,118 248,118 248,118 250,118 250,118 252,118 252,119 254,119 254,119 256,119 256,118 258,118 258,118 260,118 260,118 262,118 262,118 264,118 264,118 266,118 266,118 268,118 268,118 270,118 270,118 272,118 272,118 274,118 274,118 276,118 276,119 278,119 278,119 280,119 280,119 282,119 282,119 284,119 284,119 286,119 286,119 288,119 288,119 290,119 290,119 292,119 292,118 294,118 294,119 296,119 296,119 298,119 298,119 300,119 300,119 302,119 302,119 304,119 304,119 306,119 306,119 308,119 308,119 310,119 310,119 312,119 312,119 314,119 314,119 316,119 316,119 318,119 318,119 320,119 320,119 322,119 322,119 324,119 324,119 326,119 326,120 328,120 328,119 330,119 330,119 332,119 332,119 334,119 334,119 336,119 336,119 338,119 338,119 340,119 340,119 342,119 342,118 344,118 344,119 346,119 346,119 348,119 348,119 350,119 350,119 352,119 352,119 354,119 354,118 356,118 356,119 358,119 358,118 360,118 360,119 362,119 362,118 364,118 364,119 366,119 366,119 368,119 368,119 370,119 370,119 372,119 372,119 374,119 374,119 376,119 376,119 378,119 378,119 380,119 380,119 382,119 382,119 384,119 384,119 386,119 386,119 388,119 388,119 390,119 390,118 392,118 392,118 394,118 394,118 396,118 396,119 398,119 398,119 400,119 400,118 402,118 402,118 404,118 404,119 406,119 406,119 408,119 408,118 410,118 410,118 412,118 412,119 414,119 414,118 416,118 416,118 418,118 418,118 420,118 420,119 422,119 422,118 424,118 424,118 426,118 426,118 428,118 428,119 430,119 430,118 432,118 432,118 434,118 434,118 436,118 436,119 438,119 438,119 440,119 440,118 442,118 442,119 444,119 444,119 446,119 446,119 448,119 448,119 450,119 450,119 452,119 452,118 454,118 454,119 456,119 456,119 458,119 458,119 460,119 460,118 462,118 462,119 464,119 464,118 466,118 466,118 468,118 468,118 470,118 470,118 472,118 472,118 474,118 474,119 476,119 476,119 478,119 478,118 480,118 480,118 482,118 482,118 484,118 484,118 486,118 486,119 488,119 488,118 490,118 490,118 492,118 492,118 494,118 494,118 496,118 496,118 498,118 498,119 500,119 500,119 502,119 502,119 504,119 504,119 506,119 506,119 508,119 508,119 510,119 510,119 512,119 512,119 514,119 514,119 516,119 516,119 518,119 518,119 520,119 520,119 522,119 522,119 524,119 524,119 526,119 526,119 528,119 528,119 530,119 530,119 532,119 532,119 534,119 534,118 536,118 536,118 538,118 538,118 540,118 540,118 542,118 542,118 544,118 544,118 546,118 546,118 548,118 548,118 550,118 550,118 552,118 552,118 554,118 554,118 556,118 556,118 558,118 558,119 560,119 560,118 562,118 562,118 564,118 564,118 566,118 566,118 568,118 568,118 570,118 570,118 572,118 572,118 574,118 574,118 576,118 576,119 578,119 578,119 580,119 580,119 582,119 582,119 584,119 584,119 586,119 586,119 588,119 588,119 590,119 590,119 592,119 592,119 594,119 594,119 596,119 596,119 598,119 598,119 600,119 600,119 602,119 602,119 604,119 604,119 606,119 606,119 608,119 608,119 610,119 610,119 612,119 612,119 614,119 614,119 616,119 616,119 618,119 618,119 620,119 620,119 622,119 622,119 624,119 624,119 626,119 626,119 628,119 628,119 630,119 630,119 632,119 632,119 634,119 634,119 636,119 636,119 638,119 638,119 640,119 640,119 642,119 642,118 644,118 644,118 646,118 646,118 648,118 648,118 650,118 650,118 652,118 652,118 654,118 654,119 656,119 656,119 658,119 658,118 660,118 660,118 662,118 662,119 664,119 664,119 666,119 666,119 668,119 668,119 670,119 670,119 672,119 672,119 674,119 674,118 676,118 676,118 678,118 678,119 680,119 680,119 682,119 682,119 684,119 684,119 686,119 686,118 688,118 688,118 690,118 690,119 692,119 692,118 694,118 694,119 696,119 696,119 698,119 698,119 700,119 700,119 702,119 702,119 704,119 704,119 706,119 706,118 708,118 708,118 710,118 710,118 712,118 712,118 714,118 714,118 716,118 716,117 718,117 718,118 720,118 720,118 722,118 722,118 724,118 724,118 726,118 726,119 728,119 728,119 730,119 730,119 732,119 732,119 734,119 734,119 736,119 736,119 738,119 738,119 740,119 740,119 742,119 742,119 744,119 744,119 746,119 746,119 748,119 748,119 750,119 750,119 752,119 752,119 754,119 754,118 756,118 756,119 758,119 758,118 760,118 760,118 762,118 762,118 764,118 764,119 766,119 766,119 768,119 768,118 770,118 770,118 772,118 772,118 774,118 774,118 776,118 776,118 778,118 778,118 780,118 780,118 782,118 782,118 784,118 784,118 786,118 786,119 788,119 788,118 790,118 790,118 792,118 791,217" fill="url(#gf3)" shape-rendering="crispEdges"/><polyline points="0,118.5 2,118.5 2,118.5 4,118.5 4,118.5 6,118.5 6,118.5 8,118.5 8,118.5 10,118.5 10,118.5 12,118.5 12,118.5 14,118.5 14,118.5 16,118.5 16,119.5 18,119.5 18,118.5 20,118.5 20,118.5 22,118.5 22,118.5 24,118.5 24,118.5 26,118.5 26,118.5 28,118.5 28,118.5 30,118.5 30,118.5 32,118.5 32,118.5 34,118.5 34,119.5 36,119.5 36,119.5 38,119.5 38,119.5 40,119.5 40,118.5 42,118.5 42,119.5 44,119.5 44,119.5 46,119.5 46,119.5 48,119.5 48,119.5 50,119.5 50,119.5 52,119.5 52,119.5 54,119.5 54,119.5 56,119.5 56,119.5 58,119.5 58,119.5 60,119.5 60,119.5 62,119.5 62,118.5 64,118.5 64,119.5 66,119.5 66,119.5 68,119.5 68,119.5 70,119.5 70,119.5 72,119.5 72,119.5 74,119.5 74,119.5 76,119.5 76,119.5 78,119.5 78,119.5 80,119.5 80,119.5 82,119.5 82,119.5 84,119.5 84,119.5 86,119.5 86,119.5 88,119.5 88,119.5 90,119.5 90,118.5 92,118.5 92,119.5 94,119.5 94,118.5 96,118.5 96,118.5 98,118.5 98,118.5 100,118.5 100,118.5 102,118.5 102,118.5 104,118.5 104,118.5 106,118.5 106,118.5 108,118.5 108,119.5 110,119.5 110,118.5 112,118.5 112,118.5 114,118.5 114,118.5 116,118.5 116,118.5 118,118.5 118,118.5 120,118.5 120,118.5 122,118.5 122,118.5 124,118.5 124,118.5 126,118.5 126,118.5 128,118.5 128,119.5 130,119.5 130,118.5 132,118.5 132,118.5 134,118.5 134,118.5 136,118.5 136,118.5 138,118.5 138,118.5 140,118.5 140,118.5 142,118.5 142,118.5 144,118.5 144,118.5 146,118.5 146,118.5 148,118.5 148,118.5 150,118.5 150,118.5 152,118.5 152,118.5 154,118.5 154,119.5 156,119.5 156,119.5 158,119.5 158,119.5 160,119.5 160,119.5 162,119.5 162,118.5 164,118.5 164,119.5 166,119.5 166,119.5 168,119.5 168,119.5 170,119.5 170,119.5 172,119.5 172,119.5 174,119.5 174,119.5 176,119.5 176,119.5 178,119.5 178,119.5 180,119.5 180,119.5 182,119.5 182,118.5 184,118.5 184,118.5 186,118.5 186,119.5 188,119.5 188,119.5 190,119.5 190,118.5 192,118.5 192,118.5 194,118.5 194,118.5 196,118.5 196,118.5 198,118.5 198,118.5 200,118.5 200,118.5 202,118.5 202,118.5 204,118.5 204,118.5 206,118.5 206,118.5 208,118.5 208,118.5 210,118.5 210,118.5 212,118.5 212,118.5 214,118.5 214,117.5 216,117.5 216,118.5 218,118.5 218,118.5 220,118.5 220,117.5 222,117.5 222,118.5 224,118.5 224,117.5 226,117.5 226,118.5 228,118.5 228,118.5 230,118.5 230,118.5 232,118.5 232,118.5 234,118.5 234,118.5 236,118.5 236,119.5 238,119.5 238,119.5 240,119.5 240,118.5 242,118.5 242,118.5 244,118.5 244,118.5 246,118.5 246,118.5 248,118.5 248,118.5 250,118.5 250,118.5 252,118.5 252,119.5 254,119.5 254,119.5 256,119.5 256,118.5 258,118.5 258,118.5 260,118.5 260,118.5 262,118.5 262,118.5 264,118.5 264,118.5 266,118.5 266,118.5 268,118.5 268,118.5 270,118.5 270,118.5 272,118.5 272,118.5 274,118.5 274,118.5 276,118.5 276,119.5 278,119.5 278,119.5 280,119.5 280,119.5 282,119.5 282,119.5 284,119.5 284,119.5 286,119.5 286,119.5 288,119.5 288,119.5 290,119.5 290,119.5 292,119.5 292,118.5 294,118.5 294,119.5 296,119.5 296,119.5 298,119.5 298,119.5 300,119.5 300,119.5 302,119.5 302,119.5 304,119.5 304,119.5 306,119.5 306,119.5 308,119.5 308,119.5 310,119.5 310,119.5 312,119.5 312,119.5 314,119.5 314,119.5 316,119.5 316,119.5 318,119.5 318,119.5 320,119.5 320,119.5 322,119.5 322,119.5 324,119.5 324,119.5 326,119.5 326,120.5 328,120.5 328,119.5 330,119.5 330,119.5 332,119.5 332,119.5 334,119.5 334,119.5 336,119.5 336,119.5 338,119.5 338,119.5 340,119.5 340,119.5 342,119.5 342,118.5 344,118.5 344,119.5 346,119.5 346,119.5 348,119.5 348,119.5 350,119.5 350,119.5 352,119.5 352,119.5 354,119.5 354,118.5 356,118.5 356,119.5 358,119.5 358,118.5 360,118.5 360,119.5 362,119.5 362,118.5 364,118.5 364,119.5 366,119.5 366,119.5 368,119.5 368,119.5 370,119.5 370,119.5 372,119.5 372,119.5 374,119.5 374,119.5 376,119.5 376,119.5 378,119.5 378,119.5 380,119.5 380,119.5 382,119.5 382,119.5 384,119.5 384,119.5 386,119.5 386,119.5 388,119.5 388,119.5 390,119.5 390,118.5 392,118.5 392,118.5 394,118.5 394,118.5 396,118.5 396,119.5 398,119.5 398,119.5 400,119.5 400,118.5 402,118.5 402,118.5 404,118.5 404,119.5 406,119.5 406,119.5 408,119.5 408,118.5 410,118.5 410,118.5 412,118.5 412,119.5 414,119.5 414,118.5 416,118.5 416,118.5 418,118.5 418,118.5 420,118.5 420,119.5 422,119.5 422,118.5 424,118.5 424,118.5 426,118.5 426,118.5 428,118.5 428,119.5 430,119.5 430,118.5 432,118.5 432,118.5 434,118.5 434,118.5 436,118.5 436,119.5 438,119.5 438,119.5 440,119.5 440,118.5 442,118.5 442,119.5 444,119.5 444,119.5 446,119.5 446,119.5 448,119.5 448,119.5 450,119.5 450,119.5 452,119.5 452,118.5 454,118.5 454,119.5 456,119.5 456,119.5 458,119.5 458,119.5 460,119.5 460,118.5 462,118.5 462,119.5 464,119.5 464,118.5 466,118.5 466,118.5 468,118.5 468,118.5 470,118.5 470,118.5 472,118.5 472,118.5 474,118.5 474,119.5 476,119.5 476,119.5 478,119.5 478,118.5 480,118.5 480,118.5 482,118.5 482,118.5 484,118.5 484,118.5 486,118.5 486,119.5 488,119.5 488,118.5 490,118.5 490,118.5 492,118.5 492,118.5 494,118.5 494,118.5 496,118.5 496,118.5 498,118.5 498,119.5 500,119.5 500,119.5 502,119.5 502,119.5 504,119.5 504,119.5 506,119.5 506,119.5 508,119.5 508,119.5 510,119.5 510,119.5 512,119.5 512,119.5 514,119.5 514,119.5 516,119.5 516,119.5 518,119.5 518,119.5 520,119.5 520,119.5 522,119.5 522,119.5 524,119.5 524,119.5 526,119.5 526,119.5 528,119.5 528,119.5 530,119.5 530,119.5 532,119.5 532,119.5 534,119.5 534,118.5 536,118.5 536,118.5 538,118.5 538,118.5 540,118.5 540,118.5 542,118.5 542,118.5 544,118.5 544,118.5 546,118.5 546,118.5 548,118.5 548,118.5 550,118.5 550,118.5 552,118.5 552,118.5 554,118.5 554,118.5 556,118.5 556,118.5 558,118.5 558,119.5 560,119.5 560,118.5 562,118.5 562,118.5 564,118.5 564,118.5 566,118.5 566,118.5 568,118.5 568,118.5 570,118.5 570,118.5 572,118.5 572,118.5 574,118.5 574,118.5 576,118.5 576,119.5 578,119.5 578,119.5 580,119.5 580,119.5 582,119.5 582,119.5 584,119.5 584,119.5 586,119.5 586,119.5 588,119.5 588,119.5 590,119.5 590,119.5 592,119.5 592,119.5 594,119.5 594,119.5 596,119.5 596,119.5 598,119.5 598,119.5 600,119.5 600,119.5 602,119.5 602,119.5 604,119.5 604,119.5 606,119.5 606,119.5 608,119.5 608,119.5 610,119.5 610,119.5 612,119.5 612,119.5 614,119.5 614,119.5 616,119.5 616,119.5 618,119.5 618,119.5 620,119.5 620,119.5 622,119.5 622,119.5 624,119.5 624,119.5 626,119.5 626,119.5 628,119.5 628,119.5 630,119.5 630,119.5 632,119.5 632,119.5 634,119.5 634,119.5 636,119.5 636,119.5 638,119.5 638,119.5 640,119.5 640,119.5 642,119.5 642,118.5 644,118.5 644,118.5 646,118.5 646,118.5 648,118.5 648,118.5 650,118.5 650,118.5 652,118.5 652,118.5 654,118.5 654,119.5 656,119.5 656,119.5 658,119.5 658,118.5 660,118.5 660,118.5 662,118.5 662,119.5 664,119.5 664,119.5 666,119.5 666,119.5 668,119.5 668,119.5 670,119.5 670,119.5 672,119.5 672,119.5 674,119.5 674,118.5 676,118.5 676,118.5 678,118.5 678,119.5 680,119.5 680,119.5 682,119.5 682,119.5 684,119.5 684,119.5 686,119.5 686,118.5 688,118.5 688,118.5 690,118.5 690,119.5 692,119.5 692,118.5 694,118.5 694,119.5 696,119.5 696,119.5 698,119.5 698,119.5 700,119.5 700,119.5 702,119.5 702,119.5 704,119.5 704,119.5 706,119.5 706,118.5 708,118.5 708,118.5 710,118.5 710,118.5 712,118.5 712,118.5 714,118.5 714,118.5 716,118.5 716,117.5 718,117.5 718,118.5 720,118.5 720,118.5 722,118.5 722,118.5 724,118.5 724,118.5 726,118.5 726,119.5 728,119.5 728,119.5 730,119.5 730,119.5 732,119.5 732,119.5 734,119.5 734,119.5 736,119.5 736,119.5 738,119.5 738,119.5 740,119.5 740,119.5 742,119.5 742,119.5 744,119.5 744,119.5 746,119.5 746,119.5 748,119.5 748,119.5 750,119.5 750,119.5 752,119.5 752,119.5 754,119.5 754,118.5 756,118.5 756,119.5 758,119.5 758,118.5 760,118.5 760,118.5 762,118.5 762,118.5 764,118.5 764,119.5 766,119.5 766,119.5 768,119.5 768,118.5 770,118.5 770,118.5 772,118.5 772,118.5 774,118.5 774,118.5 776,118.5 776,118.5 778,118.5 778,118.5 780,118.5 780,118.5 782,118.5 782,118.5 784,118.5 784,118.5 786,118.5 786,119.5 788,119.5 788,118.5 790,118.5 790,118.5 792,118.5" fill="none" stroke="#ff0a0a" stroke-width="1.2"/><polyline points="0,118.5 2,118.5 2,118.5 4,118.5 4,118.5 6,118.5 6,118.5 8,118.5 8,118.5 10,118.5 10,118.5 12,118.5 12,118.5 14,118.5 14,118.5 16,118.5 16,119.5 18,119.5 18,118.5 20,118.5 20,118.5 22,118.5 22,118.5 24,118.5 24,118.5 26,118.5 26,118.5 28,118.5 28,118.5 30,118.5 30,118.5 32,118.5 32,118.5 34,118.5 34,119.5 36,119.5 36,119.5 38,119.5 38,119.5 40,119.5 40,118.5 42,118.5 42,119.5 44,119.5 44,119.5 46,119.5 46,119.5 48,119.5 48,119.5 50,119.5 50,119.5 52,119.5 52,119.5 54,119.5 54,119.5 56,119.5 56,119.5 58,119.5 58,119.5 60,119.5 60,119.5 62,119.5 62,118.5 64,118.5 64,119.5 66,119.5 66,119.5 68,119.5 68,119.5 70,119.5 70,119.5 72,119.5 72,119.5 74,119.5 74,119.5 76,119.5 76,119.5 78,119.5 78,119.5 80,119.5 80,119.5 82,119.5 82,119.5 84,119.5 84,119.5 86,119.5 86,119.5 88,119.5 88,119.5 90,119.5 90,118.5 92,118.5 92,119.5 94,119.5 94,118.5 96,118.5 96,118.5 98,118.5 98,118.5 100,118.5 100,118.5 102,118.5 102,118.5 104,118.5 104,118.5 106,118.5 106,118.5 108,118.5 108,119.5 110,119.5 110,118.5 112,118.5 112,118.5 114,118.5 114,118.5 116,118.5 116,118.5 118,118.5 118,118.5 120,118.5 120,118.5 122,118.5 122,118.5 124,118.5 124,118.5 126,118.5 126,118.5 128,118.5 128,119.5 130,119.5 130,118.5 132,118.5 132,118.5 134,118.5 134,118.5 136,118.5 136,118.5 138,118.5 138,118.5 140,118.5 140,118.5 142,118.5 142,118.5 144,118.5 144,118.5 146,118.5 146,118.5 148,118.5 148,118.5 150,118.5 150,118.5 152,118.5 152,118.5 154,118.5 154,119.5 156,119.5 156,119.5 158,119.5 158,119.5 160,119.5 160,119.5 162,119.5 162,118.5 164,118.5 164,119.5 166,119.5 166,119.5 168,119.5 168,119.5 170,119.5 170,119.5 172,119.5 172,119.5 174,119.5 174,119.5 176,119.5 176,119.5 178,119.5 178,119.5 180,119.5 180,119.5 182,119.5 182,118.5 184,118.5 184,118.5 186,118.5 186,119.5 188,119.5 188,119.5 190,119.5 190,118.5 192,118.5 192,118.5 194,118.5 194,118.5 196,118.5 196,118.5 198,118.5 198,118.5 200,118.5 200,118.5 202,118.5 202,118.5 204,118.5 204,118.5 206,118.5 206,118.5 208,118.5 208,118.5 210,118.5 210,118.5 212,118.5 212,118.5 214,118.5 214,117.5 216,117.5 216,118.5 218,118.5 218,118.5 220,118.5 220,117.5 222,117.5 222,118.5 224,118.5 224,117.5 226,117.5 226,118.5 228,118.5 228,118.5 230,118.5 230,118.5 232,118.5 232,118.5 234,118.5 234,118.5 236,118.5 236,119.5 238,119.5 238,119.5 240,119.5 240,118.5 242,118.5 242,118.5 244,118.5 244,118.5 246,118.5 246,118.5 248,118.5 248,118.5 250,118.5 250,118.5 252,118.5 252,119.5 254,119.5 254,119.5 256,119.5 256,118.5 258,118.5 258,118.5 260,118.5 260,118.5 262,118.5 262,118.5 264,118.5 264,118.5 266,118.5 266,118.5 268,118.5 268,118.5 270,118.5 270,118.5 272,118.5 272,118.5 274,118.5 274,118.5 276,118.5 276,119.5 278,119.5 278,119.5 280,119.5 280,119.5 282,119.5 282,119.5 284,119.5 284,119.5 286,119.5 286,119.5 288,119.5 288,119.5 290,119.5 290,119.5 292,119.5 292,118.5 294,118.5 294,119.5 296,119.5 296,119.5 298,119.5 298,119.5 300,119.5 300,119.5 302,119.5 302,119.5 304,119.5 304,119.5 306,119.5 306,119.5 308,119.5 308,119.5 310,119.5 310,119.5 312,119.5 312,119.5 314,119.5 314,119.5 316,119.5 316,119.5 318,119.5 318,119.5 320,119.5 320,119.5 322,119.5 322,119.5 324,119.5 324,119.5 326,119.5 326,120.5 328,120.5 328,119.5 330,119.5 330,119.5 332,119.5 332,119.5 334,119.5 334,119.5 336,119.5 336,119.5 338,119.5 338,119.5 340,119.5 340,119.5 342,119.5 342,118.5 344,118.5 344,119.5 346,119.5 346,119.5 348,119.5 348,119.5 350,119.5 350,119.5 352,119.5 352,119.5 354,119.5 354,118.5 356,118.5 356,119.5 358,119.5 358,118.5 360,118.5 360,119.5 362,119.5 362,118.5 364,118.5 364,119.5 366,119.5 366,119.5 368,119.5 368,119.5 370,119.5 370,119.5 372,119.5 372,119.5 374,119.5 374,119.5 376,119.5 376,119.5 378,119.5 378,119.5 380,119.5 380,119.5 382,119.5 382,119.5 384,119.5 384,119.5 386,119.5 386,119.5 388,119.5 388,119.5 390,119.5 390,118.5 392,118.5 392,118.5 394,118.5 394,118.5 396,118.5 396,119.5 398,119.5 398,119.5 400,119.5 400,118.5 402,118.5 402,118.5 404,118.5 404,119.5 406,119.5 406,119.5 408,119.5 408,118.5 410,118.5 410,118.5 412,118.5 412,119.5 414,119.5 414,118.5 416,118.5 416,118.5 418,118.5 418,118.5 420,118.5 420,119.5 422,119.5 422,118.5 424,118.5 424,118.5 426,118.5 426,118.5 428,118.5 428,119.5 430,119.5 430,118.5 432,118.5 432,118.5 434,118.5 434,118.5 436,118.5 436,119.5 438,119.5 438,119.5 440,119.5 440,118.5 442,118.5 442,119.5 444,119.5 444,119.5 446,119.5 446,119.5 448,119.5 448,119.5 450,119.5 450,119.5 452,119.5 452,118.5 454,118.5 454,119.5 456,119.5 456,119.5 458,119.5 458,119.5 460,119.5 460,118.5 462,118.5 462,119.5 464,119.5 464,118.5 466,118.5 466,118.5 468,118.5 468,118.5 470,118.5 470,118.5 472,118.5 472,118.5 474,118.5 474,119.5 476,119.5 476,119.5 478,119.5 478,118.5 480,118.5 480,118.5 482,118.5 482,118.5 484,118.5 484,118.5 486,118.5 486,119.5 488,119.5 488,118.5 490,118.5 490,118.5 492,118.5 492,118.5 494,118.5 494,118.5 496,118.5 496,118.5 498,118.5 498,119.5 500,119.5 500,119.5 502,119.5 502,119.5 504,119.5 504,119.5 506,119.5 506,119.5 508,119.5 508,119.5 510,119.5 510,119.5 512,119.5 512,119.5 514,119.5 514,119.5 516,119.5 516,119.5 518,119.5 518,119.5 520,119.5 520,119.5 522,119.5 522,119.5 524,119.5 524,119.5 526,119.5 526,119.5 528,119.5 528,119.5 530,119.5 530,119.5 532,119.5 532,119.5 534,119.5 534,118.5 536,118.5 536,118.5 538,118.5 538,118.5 540,118.5 540,118.5 542,118.5 542,118.5 544,118.5 544,118.5 546,118.5 546,118.5 548,118.5 548,118.5 550,118.5 550,118.5 552,118.5 552,118.5 554,118.5 554,118.5 556,118.5 556,118.5 558,118.5 558,119.5 560,119.5 560,118.5 562,118.5 562,118.5 564,118.5 564,118.5 566,118.5 566,118.5 568,118.5 568,118.5 570,118.5 570,118.5 572,118.5 572,118.5 574,118.5 574,118.5 576,118.5 576,119.5 578,119.5 578,119.5 580,119.5 580,119.5 582,119.5 582,119.5 584,119.5 584,119.5 586,119.5 586,119.5 588,119.5 588,119.5 590,119.5 590,119.5 592,119.5 592,119.5 594,119.5 594,119.5 596,119.5 596,119.5 598,119.5 598,119.5 600,119.5 600,119.5 602,119.5 602,119.5 604,119.5 604,119.5 606,119.5 606,119.5 608,119.5 608,119.5 610,119.5 610,119.5 612,119.5 612,119.5 614,119.5 614,119.5 616,119.5 616,119.5 618,119.5 618,119.5 620,119.5 620,119.5 622,119.5 622,119.5 624,119.5 624,119.5 626,119.5 626,119.5 628,119.5 628,119.5 630,119.5 630,119.5 632,119.5 632,119.5 634,119.5 634,119.5 636,119.5 636,119.5 638,119.5 638,119.5 640,119.5 640,119.5 642,119.5 642,118.5 644,118.5 644,118.5 646,118.5 646,118.5 648,118.5 648,118.5 650,118.5 650,118.5 652,118.5 652,118.5 654,118.5 654,119.5 656,119.5 656,119.5 658,119.5 658,118.5 660,118.5 660,118.5 662,118.5 662,119.5 664,119.5 664,119.5 666,119.5 666,119.5 668,119.5 668,119.5 670,119.5 670,119.5 672,119.5 672,119.5 674,119.5 674,118.5 676,118.5 676,118.5 678,118.5 678,119.5 680,119.5 680,119.5 682,119.5 682,119.5 684,119.5 684,119.5 686,119.5 686,118.5 688,118.5 688,118.5 690,118.5 690,119.5 692,119.5 692,118.5 694,118.5 694,119.5 696,119.5 696,119.5 698,119.5 698,119.5 700,119.5 700,119.5 702,119.5 702,119.5 704,119.5 704,119.5 706,119.5 706,118.5 708,118.5 708,118.5 710,118.5 710,118.5 712,118.5 712,118.5 714,118.5 714,118.5 716,118.5 716,117.5 718,117.5 718,118.5 720,118.5 720,118.5 722,118.5 722,118.5 724,118.5 724,118.5 726,118.5 726,119.5 728,119.5 728,119.5 730,119.5 730,119.5 732,119.5 732,119.5 734,119.5 734,119.5 736,119.5 736,119.5 738,119.5 738,119.5 740,119.5 740,119.5 742,119.5 742,119.5 744,119.5 744,119.5 746,119.5 746,119.5 748,119.5 748,119.5 750,119.5 750,119.5 752,119.5 752,119.5 754,119.5 754,118.5 756,118.5 756,119.5 758,119.5 758,118.5 760,118.5 760,118.5 762,118.5 762,118.5 764,118.5 764,119.5 766,119.5 766,119.5 768,119.5 768,118.5 770,118.5 770,118.5 772,118.5 772,118.5 774,118.5 774,118.5 776,118.5 776,118.5 778,118.5 778,118.5 780,118.5 780,118.5 782,118.5 782,118.5 784,118.5 784,118.5 786,118.5 786,119.5 788,119.5 788,118.5 790,118.5 790,118.5 792,118.5" fill="none" stroke="#d00000" stroke-width="1" transform="translate(0,1)" opacity="0.6"/><path d="M0 16.5H791M0 36.5H791M0 56.5H791M0 76.5H791M0 96.5H791M0 116.5H791M0 136.5H791M0 156.5H791M0 176.5H791M0 196.5H791M0 216.5H791M18.5 0V217M38.5 0V217M58.5 0V217M78.5 0V217M98.5 0V217M118.5 0V217M138.5 0V217M158.5 0V217M178.5 0V217M198.5 0V217M218.5 0V217M238.5 0V217M258.5 0V217M278.5 0V217M298.5 0V217M318.5 0V217M338.5 0V217M358.5 0V217M378.5 0V217M398.5 0V217M418.5 0V217M438.5 0V217M458.5 0V217M478.5 0V217M498.5 0V217M518.5 0V217M538.5 0V217M558.5 0V217M578.5 0V217M598.5 0V217M618.5 0V217M638.5 0V217M658.5 0V217M678.5 0V217M698.5 0V217M718.5 0V217M738.5 0V217M758.5 0V217M778.5 0V217" stroke="#a8c4ea" stroke-width="1" fill="none"/></svg><div class="a" style="left:797px;top:44px;width:100px;height:23px;background:#f0f0f0;border:1px solid #e2e2e2;border-bottom:1px solid #868686;border-radius:3px 3px 0 0"></div><div class="a" style="left:803.5px;top:43px;height:25px;line-height:25px;font-size:14px;white-space:pre">6000</div><div class="a" style="left:805px;top:76px;width:15px;height:17px;background:#f5f6f6;border:1px solid #cfcfcf;border-radius:4px"></div><div class="a" style="left:837px;top:76px;width:15px;height:17px;background:#e0f6fc;border:1px solid #cfcfcf;border-radius:4px"></div><div class="a" style="left:869px;top:76px;width:15px;height:17px;background:#a8c4ea;border:1px solid #cfcfcf;border-radius:4px"></div><div class="a" style="left:797px;top:114px;width:98px;height:23px;background:#f0f0f0;border:1px solid #e2e2e2;border-bottom:1px solid #868686;border-radius:3px 3px 0 0"></div><div class="a" style="left:803.5px;top:113px;height:25px;line-height:25px;font-size:14px;white-space:pre">2,771 RPM</div><div class="a" style="left:799px;top:156px;width:98px;height:29px;background:#fdfdfd;border:1px solid #d0d0d0;border-bottom-color:#bdbdbd;border-radius:4px;text-align:center;line-height:31px;font-size:14px">Auto Fit</div><div class="a" style="left:799px;top:192px;width:98px;height:29px;background:#fdfdfd;border:1px solid #d0d0d0;border-bottom-color:#bdbdbd;border-radius:4px;text-align:center;line-height:31px;font-size:14px">Reset</div><div class="a" style="left:797px;top:237px;width:100px;height:23px;background:#f0f0f0;border:1px solid #e2e2e2;border-bottom:1px solid #868686;border-radius:3px 3px 0 0"></div><div class="a" style="left:803.5px;top:236px;height:25px;line-height:25px;font-size:14px;white-space:pre">0</div></div><div class="a" style="left:0;top:1106px;width:915px;height:263px;background:#f3f3f3;border-radius:8px;overflow:hidden"><svg style="position:absolute;left:10px;top:8px" width="24" height="24" viewBox="0 0 24 24" ><defs><clipPath id="hwc"><rect x="0" y="0" width="24" height="24" rx="4"/></clipPath></defs><g clip-path="url(#hwc)"><rect width="24" height="13.5" fill="#1a87c6"/><rect y="13.5" width="24" height="10.5" fill="#161616"/></g><rect x="5" y="2" width="3" height="10" fill="#fff"/><path d="M10.3 4 L12.3 4 Q13.7 4.5 13.7 6.5 L13.7 12 L10.3 12 Z" fill="#fff"/><circle cx="17.3" cy="10.5" r="1.5" fill="#fff"/><path d="M5 15 h3 v6.5 a1.5 1.5 0 0 1 -3 0 Z M10.3 15 h3 v6.5 a1.5 1.5 0 0 1 -3 0 Z M15.5 15 h3 v6.5 a1.5 1.5 0 0 1 -3 0 Z" fill="#fff"/></svg><div class="a" style="left:42.5px;top:8.5px;height:25px;line-height:25px;font-size:18px;letter-spacing:-0.21px;color:#8c8c8c;white-space:pre">Общая загрузка ЦП: 119.9 %</div><svg style="position:absolute;left:883px;top:13px" width="15" height="15" viewBox="0 0 15 15" ><path d="M0.5 0.5 L14.5 14.5 M14.5 0.5 L0.5 14.5" stroke="#8a8a8a" stroke-width="1.3" fill="none"/></svg><div class="a" style="left:0;top:43px;width:792px;height:1px;background:#9e9e9e"></div><div class="a" style="left:0;top:261px;width:792px;height:1px;background:#a0a0a0"></div><div class="a" style="left:791px;top:43px;width:1px;height:219px;background:#8a8a8a"></div><svg style="position:absolute;left:0px;top:44px" width="791" height="217" viewBox="0 0 791 217" ><defs><linearGradient id="gf4" x1="0" y1="0" x2="0" y2="1"><stop offset="0" stop-color="#3f003c"/><stop offset="1" stop-color="#140010"/></linearGradient></defs><rect width="791" height="217" fill="#e0f6fc"/><polygon points="0,217 0,0 791,0 791,217" fill="url(#gf4)" shape-rendering="crispEdges"/><rect x="182" y="0" width="6" height="43" fill="#e0f6fc"/><rect x="182" y="0" width="3" height="49" fill="#e0f6fc"/><rect x="395" y="0" width="2" height="31" fill="#e0f6fc"/><rect x="397" y="0" width="3" height="57" fill="#e0f6fc"/><rect x="605" y="0" width="3" height="112" fill="#e0f6fc"/><path d="M0 16.5H791M0 36.5H791M0 56.5H791M0 76.5H791M0 96.5H791M0 116.5H791M0 136.5H791M0 156.5H791M0 176.5H791M0 196.5H791M0 216.5H791M18.5 0V217M38.5 0V217M58.5 0V217M78.5 0V217M98.5 0V217M118.5 0V217M138.5 0V217M158.5 0V217M178.5 0V217M198.5 0V217M218.5 0V217M238.5 0V217M258.5 0V217M278.5 0V217M298.5 0V217M318.5 0V217M338.5 0V217M358.5 0V217M378.5 0V217M398.5 0V217M418.5 0V217M438.5 0V217M458.5 0V217M478.5 0V217M498.5 0V217M518.5 0V217M538.5 0V217M558.5 0V217M578.5 0V217M598.5 0V217M618.5 0V217M638.5 0V217M658.5 0V217M678.5 0V217M698.5 0V217M718.5 0V217M738.5 0V217M758.5 0V217M778.5 0V217" stroke="#a8c4ea" stroke-width="1" fill="none"/></svg><div class="a" style="left:797px;top:44px;width:100px;height:23px;background:#f0f0f0;border:1px solid #e2e2e2;border-bottom:1px solid #868686;border-radius:3px 3px 0 0"></div><div class="a" style="left:803.5px;top:43px;height:25px;line-height:25px;font-size:14px;white-space:pre">100.0</div><div class="a" style="left:805px;top:76px;width:15px;height:17px;background:#f5f6f6;border:1px solid #cfcfcf;border-radius:4px"></div><div class="a" style="left:837px;top:76px;width:15px;height:17px;background:#e0f6fc;border:1px solid #cfcfcf;border-radius:4px"></div><div class="a" style="left:869px;top:76px;width:15px;height:17px;background:#a8c4ea;border:1px solid #cfcfcf;border-radius:4px"></div><div class="a" style="left:797px;top:114px;width:98px;height:23px;background:#f0f0f0;border:1px solid #e2e2e2;border-bottom:1px solid #868686;border-radius:3px 3px 0 0"></div><div class="a" style="left:803.5px;top:113px;height:25px;line-height:25px;font-size:14px;white-space:pre">119.9 %</div><div class="a" style="left:799px;top:156px;width:98px;height:29px;background:#fdfdfd;border:1px solid #d0d0d0;border-bottom-color:#bdbdbd;border-radius:4px;text-align:center;line-height:31px;font-size:14px">Auto Fit</div><div class="a" style="left:799px;top:192px;width:98px;height:29px;background:#fdfdfd;border:1px solid #d0d0d0;border-bottom-color:#bdbdbd;border-radius:4px;text-align:center;line-height:31px;font-size:14px">Reset</div><div class="a" style="left:797px;top:237px;width:100px;height:23px;background:#f0f0f0;border:1px solid #e2e2e2;border-bottom:1px solid #868686;border-radius:3px 3px 0 0"></div><div class="a" style="left:803.5px;top:236px;height:25px;line-height:25px;font-size:14px;white-space:pre">0.0</div><div class="a" style="left:0;top:0;width:915px;height:80px;background:linear-gradient(180deg,rgba(0,0,0,0.12),rgba(0,0,0,0.04) 45%,rgba(0,0,0,0))"></div></div><div class="a" style="left:918px;top:2px;width:1676px;height:43px;background:#f2f2f2;border-radius:8px 8px 0 0"></div><div class="a" style="left:918px;top:45px;width:1676px;height:1px;background:#858a93"></div><svg style="position:absolute;left:929px;top:10px" width="24" height="24" viewBox="0 0 24 24" ><defs><clipPath id="hwc"><rect x="0" y="0" width="24" height="24" rx="4"/></clipPath></defs><g clip-path="url(#hwc)"><rect width="24" height="13.5" fill="#1a87c6"/><rect y="13.5" width="24" height="10.5" fill="#161616"/></g><rect x="5" y="2" width="3" height="10" fill="#fff"/><path d="M10.3 4 L12.3 4 Q13.7 4.5 13.7 6.5 L13.7 12 L10.3 12 Z" fill="#fff"/><circle cx="17.3" cy="10.5" r="1.5" fill="#fff"/><path d="M5 15 h3 v6.5 a1.5 1.5 0 0 1 -3 0 Z M10.3 15 h3 v6.5 a1.5 1.5 0 0 1 -3 0 Z M15.5 15 h3 v6.5 a1.5 1.5 0 0 1 -3 0 Z" fill="#fff"/></svg><div class="a" style="left:959.5px;top:11px;height:25px;line-height:25px;font-size:17.6px;color:#8c8c8c;white-space:pre">HWiNFO® 64 v8.44-5935 Состояние датчиков {0.8%}</div><div class="a" style="left:2412px;top:22px;width:15px;height:1px;background:#8c8c8c"></div><div class="a" style="left:2481px;top:15px;width:13px;height:13px;border:1.3px solid #8c8c8c;border-radius:2px"></div><svg style="position:absolute;left:2552px;top:15px" width="15" height="15" viewBox="0 0 15 15" ><path d="M0.5 0.5 L14.5 14.5 M14.5 0.5 L0.5 14.5" stroke="#8c8c8c" stroke-width="1.3" fill="none"/></svg><div class="a" style="left:918px;top:46px;width:1676px;height:1240px;background:#ffffff"></div><div class="a" style="left:918px;top:46px;width:50px;height:1240px;background:linear-gradient(90deg,#e6e6e6,#f6f6f6 50%,#ffffff)"></div><div class="a" style="left:1755px;top:46px;width:2px;height:1240px;background:#6a6e72"></div><div class="a" style="left:2568px;top:46px;width:24px;height:1240px;background:#efefef"></div><div class="a" style="left:2593px;top:46px;width:1px;height:1241px;background:#606060"></div><div class="a" style="left:2578px;top:72px;width:6px;height:580px;background:#8a8a8a;border-radius:3px"></div><div class="a t" style="left:926.5px;top:46px;height:25px;line-height:25px;padding-top:2px;">Датчик</div><div class="a" style="left:1243px;top:47px;width:1px;height:24px;background:#e5e5e5"></div><div class="a" style="left:1363px;top:47px;width:1px;height:24px;background:#e5e5e5"></div><div class="a" style="left:1483px;top:47px;width:1px;height:24px;background:#e5e5e5"></div><div class="a" style="left:1603px;top:47px;width:1px;height:24px;background:#e5e5e5"></div><div class="a" style="left:1723px;top:47px;width:1px;height:24px;background:#e5e5e5"></div><div class="a t" style="right:1236px;top:46px;height:25px;line-height:25px;text-align:right;padding-top:2px;letter-spacing:-0.5px;">Текущее</div><div class="a t" style="right:1116px;top:46px;height:25px;line-height:25px;text-align:right;padding-top:2px;letter-spacing:-0.5px;">Минимум</div><div class="a t" style="right:996px;top:46px;height:25px;line-height:25px;text-align:right;padding-top:2px;letter-spacing:-0.5px;">Максимум</div><div class="a t" style="right:876px;top:46px;height:25px;line-height:25px;text-align:right;padding-top:2px;letter-spacing:-0.5px;">Среднее</div><div class="a" style="left:951px;top:72px;width:24px;height:25px;background:#fdfdfd;border-bottom:1px solid #ececec;box-sizing:border-box"></div><div class="a" style="left:975px;top:72px;width:748px;height:24px;background:#d9d9d9"></div><svg style="position:absolute;left:931px;top:75px" width="10" height="18" viewBox="0 0 10 18" ><path d="M0.9 0.7 L9.1 8.9 L0.9 17.1" stroke="#3a3a3a" stroke-width="1.5" fill="none"/></svg><svg style="position:absolute;left:954.5px;top:74px" width="17" height="21" viewBox="0 0 17 21" ><defs><linearGradient id="chg" x1="0" y1="0" x2="0" y2="1"><stop offset="0" stop-color="#727477"/><stop offset="1" stop-color="#3c3c3c"/></linearGradient></defs><ellipse cx="1.3" cy="4.1000000000000005" rx="0.9" ry="1.0" fill="#9a9a9a"/><ellipse cx="15.7" cy="4.1000000000000005" rx="0.9" ry="1.0" fill="#9a9a9a"/><ellipse cx="1.3" cy="8.7" rx="0.9" ry="1.0" fill="#9a9a9a"/><ellipse cx="15.7" cy="8.7" rx="0.9" ry="1.0" fill="#9a9a9a"/><ellipse cx="1.3" cy="13.200000000000001" rx="0.9" ry="1.0" fill="#9a9a9a"/><ellipse cx="15.7" cy="13.200000000000001" rx="0.9" ry="1.0" fill="#9a9a9a"/><ellipse cx="1.3" cy="17.7" rx="0.9" ry="1.0" fill="#9a9a9a"/><ellipse cx="15.7" cy="17.7" rx="0.9" ry="1.0" fill="#9a9a9a"/><rect x="2.5" y="0" width="11.8" height="20.5" rx="1" fill="url(#chg)"/><path d="M6 0 L8.4 2.2 L10.8 0" fill="none" stroke="#9a9c9f" stroke-width="0.9"/></svg><div class="a t" style="left:977px;top:71px;height:25px;line-height:25px;font-weight:bold;font-size:17px;padding-top:2px;letter-spacing:0.2px;-webkit-text-stroke:0;">Система: MSI MS-7E62</div><div class="a" style="left:951px;top:122px;width:24px;height:25px;background:#fdfdfd;border-bottom:1px solid #ececec;box-sizing:border-box"></div><div class="a" style="left:975px;top:122px;width:748px;height:24px;background:#d9d9d9"></div><svg style="position:absolute;left:927px;top:129px" width="18" height="10" viewBox="0 0 18 10" ><path d="M0.7 0.9 L9 9.2 L17.3 0.9" stroke="#3a3a3a" stroke-width="1.5" fill="none"/></svg><svg style="position:absolute;left:954.5px;top:124px" width="17" height="21" viewBox="0 0 17 21" ><defs><linearGradient id="chg" x1="0" y1="0" x2="0" y2="1"><stop offset="0" stop-color="#727477"/><stop offset="1" stop-color="#3c3c3c"/></linearGradient></defs><ellipse cx="1.3" cy="4.1000000000000005" rx="0.9" ry="1.0" fill="#9a9a9a"/><ellipse cx="15.7" cy="4.1000000000000005" rx="0.9" ry="1.0" fill="#9a9a9a"/><ellipse cx="1.3" cy="8.7" rx="0.9" ry="1.0" fill="#9a9a9a"/><ellipse cx="15.7" cy="8.7" rx="0.9" ry="1.0" fill="#9a9a9a"/><ellipse cx="1.3" cy="13.200000000000001" rx="0.9" ry="1.0" fill="#9a9a9a"/><ellipse cx="15.7" cy="13.200000000000001" rx="0.9" ry="1.0" fill="#9a9a9a"/><ellipse cx="1.3" cy="17.7" rx="0.9" ry="1.0" fill="#9a9a9a"/><ellipse cx="15.7" cy="17.7" rx="0.9" ry="1.0" fill="#9a9a9a"/><rect x="2.5" y="0" width="11.8" height="20.5" rx="1" fill="url(#chg)"/><path d="M6 0 L8.4 2.2 L10.8 0" fill="none" stroke="#9a9c9f" stroke-width="0.9"/></svg><div class="a t" style="left:977px;top:121px;height:25px;line-height:25px;font-weight:bold;font-size:17px;padding-top:2px;letter-spacing:0.2px;-webkit-text-stroke:0;">ЦП [#0]: AMD Ryzen 9 9950X3D</div><div class="a" style="left:975px;top:147px;width:22.5px;height:25px;background:#fdfdfd;border-bottom:1px solid #ececec;box-sizing:border-box"></div><div class="a" style="left:1244px;top:147px;width:119px;height:24px;background:#cfe4f9"></div><svg style="position:absolute;left:955px;top:150px" width="10" height="18" viewBox="0 0 10 18" ><path d="M0.9 0.7 L9.1 8.9 L0.9 17.1" stroke="#3a3a3a" stroke-width="1.5" fill="none"/></svg><svg style="position:absolute;left:980px;top:147px" width="14" height="24" viewBox="0 0 14 24" ><path d="M6.7 0.2 L12.8 0.2 L8.1 8.3 L13.2 8.5 L0.2 23.7 L4.7 12.4 L0.2 12.4 Z" fill="#ebb513"/></svg><div class="a t" style="left:999.5px;top:146px;height:25px;line-height:25px;padding-top:2px;letter-spacing:0.000px;width:242.5px;overflow:hidden;">Core VIDs</div><div class="a t" style="right:1236px;top:146px;height:25px;line-height:25px;text-align:right;padding-top:2px;">1.167 В</div><div class="a t" style="right:1116px;top:146px;height:25px;line-height:25px;text-align:right;padding-top:2px;">0.410 В</div><div class="a t" style="right:996px;top:146px;height:25px;line-height:25px;text-align:right;padding-top:2px;">1.375 В</div><div class="a t" style="right:876px;top:146px;height:25px;line-height:25px;text-align:right;padding-top:2px;">1.244 В</div><div class="a" style="left:975px;top:172px;width:22.5px;height:25px;background:#fdfdfd;border-bottom:1px solid #ececec;box-sizing:border-box"></div><div class="a" style="left:997.5px;top:172px;width:725.5px;height:25px;background:#f0f0f0"></div><div class="a" style="left:1244px;top:172px;width:119px;height:24px;background:#cfe4f9"></div><svg style="position:absolute;left:955px;top:175px" width="10" height="18" viewBox="0 0 10 18" ><path d="M0.9 0.7 L9.1 8.9 L0.9 17.1" stroke="#3a3a3a" stroke-width="1.5" fill="none"/></svg><svg style="position:absolute;left:978px;top:175px" width="18" height="18" viewBox="0 0 18 18" ><path d="M15.4 12.6 A7.6 7.6 0 1 1 14.4 3.6" stroke="#2c3b48" stroke-width="1.6" fill="none" stroke-linecap="round"/><path d="M16.5 1.5 L16.6 6.5 L11.8 5.8 Z" fill="#2c3b48"/><path d="M8.7 4.2 L8.7 9.2 L11.2 12" stroke="#2c3b48" stroke-width="1.4" fill="none"/></svg><div class="a t" style="left:999.5px;top:171px;height:25px;line-height:25px;padding-top:2px;letter-spacing:0.000px;width:242.5px;overflow:hidden;">Частоты ядер</div><div class="a t" style="right:1236px;top:171px;height:25px;line-height:25px;text-align:right;padding-top:2px;">5,150.0 МГц</div><div class="a t" style="right:1116px;top:171px;height:25px;line-height:25px;text-align:right;padding-top:2px;">2,535.0 МГц</div><div class="a t" style="right:996px;top:171px;height:25px;line-height:25px;text-align:right;padding-top:2px;">5,725.0 МГц</div><div class="a t" style="right:876px;top:171px;height:25px;line-height:25px;text-align:right;padding-top:2px;">4,793.9 МГц</div><div class="a" style="left:951px;top:197px;width:23px;height:25px;background:#fdfdfd;border-bottom:1px solid #ececec;box-sizing:border-box"></div><svg style="position:absolute;left:954px;top:200px" width="18" height="18" viewBox="0 0 18 18" ><path d="M15.4 12.6 A7.6 7.6 0 1 1 14.4 3.6" stroke="#2c3b48" stroke-width="1.6" fill="none" stroke-linecap="round"/><path d="M16.5 1.5 L16.6 6.5 L11.8 5.8 Z" fill="#2c3b48"/><path d="M8.7 4.2 L8.7 9.2 L11.2 12" stroke="#2c3b48" stroke-width="1.4" fill="none"/></svg><div class="a t" style="left:976px;top:196px;height:25px;line-height:25px;padding-top:2px;letter-spacing:0.000px;width:266px;overflow:hidden;">Частота шины</div><div class="a t" style="right:1236px;top:196px;height:25px;line-height:25px;text-align:right;padding-top:2px;">100.0 МГц</div><div class="a t" style="right:1116px;top:196px;height:25px;line-height:25px;text-align:right;padding-top:2px;">100.0 МГц</div><div class="a t" style="right:996px;top:196px;height:25px;line-height:25px;text-align:right;padding-top:2px;">100.0 МГц</div><div class="a t" style="right:876px;top:196px;height:25px;line-height:25px;text-align:right;padding-top:2px;">100.0 МГц</div><div class="a" style="left:975px;top:222px;width:22.5px;height:25px;background:#fdfdfd;border-bottom:1px solid #ececec;box-sizing:border-box"></div><div class="a" style="left:997.5px;top:222px;width:725.5px;height:25px;background:#f0f0f0"></div><div class="a" style="left:1244px;top:222px;width:119px;height:24px;background:#cfe4f9"></div><svg style="position:absolute;left:955px;top:225px" width="10" height="18" viewBox="0 0 10 18" ><path d="M0.9 0.7 L9.1 8.9 L0.9 17.1" stroke="#3a3a3a" stroke-width="1.5" fill="none"/></svg><svg style="position:absolute;left:978px;top:225px" width="18" height="18" viewBox="0 0 18 18" ><path d="M15.4 12.6 A7.6 7.6 0 1 1 14.4 3.6" stroke="#2c3b48" stroke-width="1.6" fill="none" stroke-linecap="round"/><path d="M16.5 1.5 L16.6 6.5 L11.8 5.8 Z" fill="#2c3b48"/><path d="M8.7 4.2 L8.7 9.2 L11.2 12" stroke="#2c3b48" stroke-width="1.4" fill="none"/></svg><div class="a t" style="left:999.5px;top:221px;height:25px;line-height:25px;padding-top:2px;letter-spacing:0.000px;width:242.5px;overflow:hidden;">Эффективные частоты ядер</div><div class="a t" style="right:1236px;top:221px;height:25px;line-height:25px;text-align:right;padding-top:2px;">5,152.1 МГц</div><div class="a t" style="right:1116px;top:221px;height:25px;line-height:25px;text-align:right;padding-top:2px;">0.6 МГц</div><div class="a t" style="right:996px;top:221px;height:25px;line-height:25px;text-align:right;padding-top:2px;">5,527.6 МГц</div><div class="a t" style="right:876px;top:221px;height:25px;line-height:25px;text-align:right;padding-top:2px;">2,528.1 МГц</div><div class="a" style="left:951px;top:247px;width:23px;height:25px;background:#fdfdfd;border-bottom:1px solid #ececec;box-sizing:border-box"></div><div class="a" style="left:1244px;top:247px;width:119px;height:24px;background:#cfe4f9"></div><svg style="position:absolute;left:954px;top:250px" width="18" height="18" viewBox="0 0 18 18" ><path d="M15.4 12.6 A7.6 7.6 0 1 1 14.4 3.6" stroke="#2c3b48" stroke-width="1.6" fill="none" stroke-linecap="round"/><path d="M16.5 1.5 L16.6 6.5 L11.8 5.8 Z" fill="#2c3b48"/><path d="M8.7 4.2 L8.7 9.2 L11.2 12" stroke="#2c3b48" stroke-width="1.4" fill="none"/></svg><div class="a t" style="left:976px;top:246px;height:25px;line-height:25px;padding-top:2px;letter-spacing:0.000px;width:266px;overflow:hidden;">Средняя эффективная частота</div><div class="a t" style="right:1236px;top:246px;height:25px;line-height:25px;text-align:right;padding-top:2px;">5,152.1 МГц</div><div class="a t" style="right:1116px;top:246px;height:25px;line-height:25px;text-align:right;padding-top:2px;">46.5 МГц</div><div class="a t" style="right:996px;top:246px;height:25px;line-height:25px;text-align:right;padding-top:2px;">5,184.8 МГц</div><div class="a t" style="right:876px;top:246px;height:25px;line-height:25px;text-align:right;padding-top:2px;">2,528.0 МГц</div><div class="a" style="left:975px;top:272px;width:22.5px;height:25px;background:#fdfdfd;border-bottom:1px solid #ececec;box-sizing:border-box"></div><div class="a" style="left:997.5px;top:272px;width:725.5px;height:25px;background:#f0f0f0"></div><div class="a" style="left:1244px;top:272px;width:119px;height:24px;background:#cfe4f9"></div><svg style="position:absolute;left:955px;top:275px" width="10" height="18" viewBox="0 0 10 18" ><path d="M0.9 0.7 L9.1 8.9 L0.9 17.1" stroke="#3a3a3a" stroke-width="1.5" fill="none"/></svg><svg style="position:absolute;left:978px;top:275px" width="18" height="18" viewBox="0 0 18 18" ><path d="M15.4 12.6 A7.6 7.6 0 1 1 14.4 3.6" stroke="#2c3b48" stroke-width="1.6" fill="none" stroke-linecap="round"/><path d="M16.5 1.5 L16.6 6.5 L11.8 5.8 Z" fill="#2c3b48"/><path d="M8.7 4.2 L8.7 9.2 L11.2 12" stroke="#2c3b48" stroke-width="1.4" fill="none"/></svg><div class="a t" style="left:999.5px;top:271px;height:25px;line-height:25px;padding-top:2px;letter-spacing:0.000px;width:242.5px;overflow:hidden;">Использование ядра</div><div class="a t" style="right:1236px;top:271px;height:25px;line-height:25px;text-align:right;padding-top:2px;">99.9 %</div><div class="a t" style="right:1116px;top:271px;height:25px;line-height:25px;text-align:right;padding-top:2px;">0.0 %</div><div class="a t" style="right:996px;top:271px;height:25px;line-height:25px;text-align:right;padding-top:2px;">100.0 %</div><div class="a t" style="right:876px;top:271px;height:25px;line-height:25px;text-align:right;padding-top:2px;">47.5 %</div><div class="a" style="left:951px;top:297px;width:23px;height:25px;background:#fdfdfd;border-bottom:1px solid #ececec;box-sizing:border-box"></div><svg style="position:absolute;left:954px;top:300px" width="18" height="18" viewBox="0 0 18 18" ><path d="M15.4 12.6 A7.6 7.6 0 1 1 14.4 3.6" stroke="#2c3b48" stroke-width="1.6" fill="none" stroke-linecap="round"/><path d="M16.5 1.5 L16.6 6.5 L11.8 5.8 Z" fill="#2c3b48"/><path d="M8.7 4.2 L8.7 9.2 L11.2 12" stroke="#2c3b48" stroke-width="1.4" fill="none"/></svg><div class="a t" style="left:976px;top:296px;height:25px;line-height:25px;padding-top:2px;letter-spacing:0.000px;width:266px;overflow:hidden;">Макс. загрузка ЦП/потоков</div><div class="a t" style="right:1236px;top:296px;height:25px;line-height:25px;text-align:right;padding-top:2px;">100.0 %</div><div class="a t" style="right:1116px;top:296px;height:25px;line-height:25px;text-align:right;padding-top:2px;">4.5 %</div><div class="a t" style="right:996px;top:296px;height:25px;line-height:25px;text-align:right;padding-top:2px;">100.0 %</div><div class="a t" style="right:876px;top:296px;height:25px;line-height:25px;text-align:right;padding-top:2px;">74.2 %</div><div class="a" style="left:951px;top:322px;width:23px;height:25px;background:#fdfdfd;border-bottom:1px solid #ececec;box-sizing:border-box"></div><div class="a" style="left:974px;top:322px;width:749px;height:25px;background:#f0f0f0"></div><svg style="position:absolute;left:954px;top:325px" width="18" height="18" viewBox="0 0 18 18" ><path d="M15.4 12.6 A7.6 7.6 0 1 1 14.4 3.6" stroke="#2c3b48" stroke-width="1.6" fill="none" stroke-linecap="round"/><path d="M16.5 1.5 L16.6 6.5 L11.8 5.8 Z" fill="#2c3b48"/><path d="M8.7 4.2 L8.7 9.2 L11.2 12" stroke="#2c3b48" stroke-width="1.4" fill="none"/></svg><div class="a t" style="left:976px;top:321px;height:25px;line-height:25px;padding-top:2px;letter-spacing:0.000px;width:266px;overflow:hidden;">Общая загрузка ЦП</div><div class="a t" style="right:1236px;top:321px;height:25px;line-height:25px;text-align:right;padding-top:2px;">99.9 %</div><div class="a t" style="right:1116px;top:321px;height:25px;line-height:25px;text-align:right;padding-top:2px;">0.9 %</div><div class="a t" style="right:996px;top:321px;height:25px;line-height:25px;text-align:right;padding-top:2px;">100.0 %</div><div class="a t" style="right:876px;top:321px;height:25px;line-height:25px;text-align:right;padding-top:2px;">47.5 %</div><div class="a" style="left:975px;top:347px;width:22.5px;height:25px;background:#fdfdfd;border-bottom:1px solid #ececec;box-sizing:border-box"></div><div class="a" style="left:1244px;top:347px;width:119px;height:24px;background:#cfe4f9"></div><svg style="position:absolute;left:955px;top:350px" width="10" height="18" viewBox="0 0 10 18" ><path d="M0.9 0.7 L9.1 8.9 L0.9 17.1" stroke="#3a3a3a" stroke-width="1.5" fill="none"/></svg><svg style="position:absolute;left:978px;top:350px" width="18" height="18" viewBox="0 0 18 18" ><path d="M15.4 12.6 A7.6 7.6 0 1 1 14.4 3.6" stroke="#2c3b48" stroke-width="1.6" fill="none" stroke-linecap="round"/><path d="M16.5 1.5 L16.6 6.5 L11.8 5.8 Z" fill="#2c3b48"/><path d="M8.7 4.2 L8.7 9.2 L11.2 12" stroke="#2c3b48" stroke-width="1.4" fill="none"/></svg><div class="a t" style="left:999.5px;top:346px;height:25px;line-height:25px;padding-top:2px;letter-spacing:0.000px;width:242.5px;overflow:hidden;">Использование ядра</div><div class="a t" style="right:1236px;top:346px;height:25px;line-height:25px;text-align:right;padding-top:2px;">119.9 %</div><div class="a t" style="right:1116px;top:346px;height:25px;line-height:25px;text-align:right;padding-top:2px;">0.0 %</div><div class="a t" style="right:996px;top:346px;height:25px;line-height:25px;text-align:right;padding-top:2px;">128.4 %</div><div class="a t" style="right:876px;top:346px;height:25px;line-height:25px;text-align:right;padding-top:2px;">57.7 %</div><div class="a" style="left:951px;top:372px;width:23px;height:25px;background:#fdfdfd;border-bottom:1px solid #ececec;box-sizing:border-box"></div><div class="a" style="left:974px;top:372px;width:749px;height:25px;background:#f0f0f0"></div><div class="a" style="left:1244px;top:372px;width:119px;height:24px;background:#cfe4f9"></div><svg style="position:absolute;left:954px;top:375px" width="18" height="18" viewBox="0 0 18 18" ><path d="M15.4 12.6 A7.6 7.6 0 1 1 14.4 3.6" stroke="#2c3b48" stroke-width="1.6" fill="none" stroke-linecap="round"/><path d="M16.5 1.5 L16.6 6.5 L11.8 5.8 Z" fill="#2c3b48"/><path d="M8.7 4.2 L8.7 9.2 L11.2 12" stroke="#2c3b48" stroke-width="1.4" fill="none"/></svg><div class="a t" style="left:976px;top:371px;height:25px;line-height:25px;padding-top:2px;letter-spacing:0.000px;width:266px;overflow:hidden;">Общая загрузка ЦП</div><div class="a t" style="right:1236px;top:371px;height:25px;line-height:25px;text-align:right;padding-top:2px;">119.9 %</div><div class="a t" style="right:1116px;top:371px;height:25px;line-height:25px;text-align:right;padding-top:2px;">1.0 %</div><div class="a t" style="right:996px;top:371px;height:25px;line-height:25px;text-align:right;padding-top:2px;">120.6 %</div><div class="a t" style="right:876px;top:371px;height:25px;line-height:25px;text-align:right;padding-top:2px;">57.7 %</div><div class="a" style="left:975px;top:397px;width:22.5px;height:25px;background:#fdfdfd;border-bottom:1px solid #ececec;box-sizing:border-box"></div><div class="a" style="left:1244px;top:397px;width:119px;height:24px;background:#cfe4f9"></div><svg style="position:absolute;left:955px;top:400px" width="10" height="18" viewBox="0 0 10 18" ><path d="M0.9 0.7 L9.1 8.9 L0.9 17.1" stroke="#3a3a3a" stroke-width="1.5" fill="none"/></svg><svg style="position:absolute;left:978px;top:400px" width="18" height="18" viewBox="0 0 18 18" ><path d="M15.4 12.6 A7.6 7.6 0 1 1 14.4 3.6" stroke="#2c3b48" stroke-width="1.6" fill="none" stroke-linecap="round"/><path d="M16.5 1.5 L16.6 6.5 L11.8 5.8 Z" fill="#2c3b48"/><path d="M8.7 4.2 L8.7 9.2 L11.2 12" stroke="#2c3b48" stroke-width="1.4" fill="none"/></svg><div class="a t" style="left:999.5px;top:396px;height:25px;line-height:25px;padding-top:2px;letter-spacing:0.000px;width:242.5px;overflow:hidden;">Множители частоты ядра</div><div class="a t" style="right:1236px;top:396px;height:25px;line-height:25px;text-align:right;padding-top:2px;">51.5 x</div><div class="a t" style="right:1116px;top:396px;height:25px;line-height:25px;text-align:right;padding-top:2px;">25.4 x</div><div class="a t" style="right:996px;top:396px;height:25px;line-height:25px;text-align:right;padding-top:2px;">57.2 x</div><div class="a t" style="right:876px;top:396px;height:25px;line-height:25px;text-align:right;padding-top:2px;">47.9 x</div><div class="a" style="left:975px;top:422px;width:748px;height:25px;background:#f0f0f0"></div><div class="a" style="left:951px;top:447px;width:24px;height:25px;background:#fdfdfd;border-bottom:1px solid #ececec;box-sizing:border-box"></div><div class="a" style="left:975px;top:447px;width:748px;height:24px;background:#d9d9d9"></div><svg style="position:absolute;left:927px;top:454px" width="18" height="10" viewBox="0 0 18 10" ><path d="M0.7 0.9 L9 9.2 L17.3 0.9" stroke="#3a3a3a" stroke-width="1.5" fill="none"/></svg><svg style="position:absolute;left:954.5px;top:449px" width="17" height="21" viewBox="0 0 17 21" ><defs><linearGradient id="chg" x1="0" y1="0" x2="0" y2="1"><stop offset="0" stop-color="#727477"/><stop offset="1" stop-color="#3c3c3c"/></linearGradient></defs><ellipse cx="1.3" cy="4.1000000000000005" rx="0.9" ry="1.0" fill="#9a9a9a"/><ellipse cx="15.7" cy="4.1000000000000005" rx="0.9" ry="1.0" fill="#9a9a9a"/><ellipse cx="1.3" cy="8.7" rx="0.9" ry="1.0" fill="#9a9a9a"/><ellipse cx="15.7" cy="8.7" rx="0.9" ry="1.0" fill="#9a9a9a"/><ellipse cx="1.3" cy="13.200000000000001" rx="0.9" ry="1.0" fill="#9a9a9a"/><ellipse cx="15.7" cy="13.200000000000001" rx="0.9" ry="1.0" fill="#9a9a9a"/><ellipse cx="1.3" cy="17.7" rx="0.9" ry="1.0" fill="#9a9a9a"/><ellipse cx="15.7" cy="17.7" rx="0.9" ry="1.0" fill="#9a9a9a"/><rect x="2.5" y="0" width="11.8" height="20.5" rx="1" fill="url(#chg)"/><path d="M6 0 L8.4 2.2 L10.8 0" fill="none" stroke="#9a9c9f" stroke-width="0.9"/></svg><div class="a t" style="left:977px;top:446px;height:25px;line-height:25px;font-weight:bold;font-size:17px;padding-top:2px;letter-spacing:0.2px;-webkit-text-stroke:0;">ЦП [#0]: AMD Ryzen 9 9950X3D: C-State Резидентность</div><div class="a" style="left:951px;top:472px;width:23px;height:25px;background:#fdfdfd;border-bottom:1px solid #ececec;box-sizing:border-box"></div><div class="a" style="left:974px;top:472px;width:749px;height:25px;background:#f0f0f0"></div><svg style="position:absolute;left:954px;top:475px" width="18" height="18" viewBox="0 0 18 18" ><path d="M15.4 12.6 A7.6 7.6 0 1 1 14.4 3.6" stroke="#2c3b48" stroke-width="1.6" fill="none" stroke-linecap="round"/><path d="M16.5 1.5 L16.6 6.5 L11.8 5.8 Z" fill="#2c3b48"/><path d="M8.7 4.2 L8.7 9.2 L11.2 12" stroke="#2c3b48" stroke-width="1.4" fill="none"/></svg><div class="a t" style="left:976px;top:471px;height:25px;line-height:25px;padding-top:2px;letter-spacing:0.000px;width:266px;overflow:hidden;">Package C6 Резидентность</div><div class="a t" style="right:1236px;top:471px;height:25px;line-height:25px;text-align:right;padding-top:2px;">0.0 %</div><div class="a t" style="right:1116px;top:471px;height:25px;line-height:25px;text-align:right;padding-top:2px;">0.0 %</div><div class="a t" style="right:996px;top:471px;height:25px;line-height:25px;text-align:right;padding-top:2px;">46.0 %</div><div class="a t" style="right:876px;top:471px;height:25px;line-height:25px;text-align:right;padding-top:2px;">0.3 %</div><div class="a" style="left:975px;top:497px;width:22.5px;height:25px;background:#fdfdfd;border-bottom:1px solid #ececec;box-sizing:border-box"></div><svg style="position:absolute;left:955px;top:500px" width="10" height="18" viewBox="0 0 10 18" ><path d="M0.9 0.7 L9.1 8.9 L0.9 17.1" stroke="#3a3a3a" stroke-width="1.5" fill="none"/></svg><svg style="position:absolute;left:978px;top:500px" width="18" height="18" viewBox="0 0 18 18" ><path d="M15.4 12.6 A7.6 7.6 0 1 1 14.4 3.6" stroke="#2c3b48" stroke-width="1.6" fill="none" stroke-linecap="round"/><path d="M16.5 1.5 L16.6 6.5 L11.8 5.8 Z" fill="#2c3b48"/><path d="M8.7 4.2 L8.7 9.2 L11.2 12" stroke="#2c3b48" stroke-width="1.4" fill="none"/></svg><div class="a t" style="left:999.5px;top:496px;height:25px;line-height:25px;padding-top:2px;letter-spacing:0.000px;width:242.5px;overflow:hidden;">Core C0 Резидентность</div><div class="a t" style="right:1236px;top:496px;height:25px;line-height:25px;text-align:right;padding-top:2px;">100.0 %</div><div class="a t" style="right:1116px;top:496px;height:25px;line-height:25px;text-align:right;padding-top:2px;">0.1 %</div><div class="a t" style="right:996px;top:496px;height:25px;line-height:25px;text-align:right;padding-top:2px;">100.0 %</div><div class="a t" style="right:876px;top:496px;height:25px;line-height:25px;text-align:right;padding-top:2px;">53.6 %</div><div class="a" style="left:975px;top:522px;width:22.5px;height:25px;background:#fdfdfd;border-bottom:1px solid #ececec;box-sizing:border-box"></div><div class="a" style="left:997.5px;top:522px;width:725.5px;height:25px;background:#f0f0f0"></div><svg style="position:absolute;left:955px;top:525px" width="10" height="18" viewBox="0 0 10 18" ><path d="M0.9 0.7 L9.1 8.9 L0.9 17.1" stroke="#3a3a3a" stroke-width="1.5" fill="none"/></svg><svg style="position:absolute;left:978px;top:525px" width="18" height="18" viewBox="0 0 18 18" ><path d="M15.4 12.6 A7.6 7.6 0 1 1 14.4 3.6" stroke="#2c3b48" stroke-width="1.6" fill="none" stroke-linecap="round"/><path d="M16.5 1.5 L16.6 6.5 L11.8 5.8 Z" fill="#2c3b48"/><path d="M8.7 4.2 L8.7 9.2 L11.2 12" stroke="#2c3b48" stroke-width="1.4" fill="none"/></svg><div class="a t" style="left:999.5px;top:521px;height:25px;line-height:25px;padding-top:2px;letter-spacing:0.000px;width:242.5px;overflow:hidden;">Core C1 Резидентность</div><div class="a t" style="right:1236px;top:521px;height:25px;line-height:25px;text-align:right;padding-top:2px;">0.0 %</div><div class="a t" style="right:1116px;top:521px;height:25px;line-height:25px;text-align:right;padding-top:2px;">0.0 %</div><div class="a t" style="right:996px;top:521px;height:25px;line-height:25px;text-align:right;padding-top:2px;">97.5 %</div><div class="a t" style="right:876px;top:521px;height:25px;line-height:25px;text-align:right;padding-top:2px;">14.8 %</div><div class="a" style="left:975px;top:547px;width:22.5px;height:25px;background:#fdfdfd;border-bottom:1px solid #ececec;box-sizing:border-box"></div><svg style="position:absolute;left:955px;top:550px" width="10" height="18" viewBox="0 0 10 18" ><path d="M0.9 0.7 L9.1 8.9 L0.9 17.1" stroke="#3a3a3a" stroke-width="1.5" fill="none"/></svg><svg style="position:absolute;left:978px;top:550px" width="18" height="18" viewBox="0 0 18 18" ><path d="M15.4 12.6 A7.6 7.6 0 1 1 14.4 3.6" stroke="#2c3b48" stroke-width="1.6" fill="none" stroke-linecap="round"/><path d="M16.5 1.5 L16.6 6.5 L11.8 5.8 Z" fill="#2c3b48"/><path d="M8.7 4.2 L8.7 9.2 L11.2 12" stroke="#2c3b48" stroke-width="1.4" fill="none"/></svg><div class="a t" style="left:999.5px;top:546px;height:25px;line-height:25px;padding-top:2px;letter-spacing:0.000px;width:242.5px;overflow:hidden;">Core C6 Резидентность</div><div class="a t" style="right:1236px;top:546px;height:25px;line-height:25px;text-align:right;padding-top:2px;">0.0 %</div><div class="a t" style="right:1116px;top:546px;height:25px;line-height:25px;text-align:right;padding-top:2px;">0.0 %</div><div class="a t" style="right:996px;top:546px;height:25px;line-height:25px;text-align:right;padding-top:2px;">99.8 %</div><div class="a t" style="right:876px;top:546px;height:25px;line-height:25px;text-align:right;padding-top:2px;">31.6 %</div><div class="a" style="left:975px;top:572px;width:748px;height:25px;background:#f0f0f0"></div><div class="a" style="left:951px;top:597px;width:24px;height:25px;background:#fdfdfd;border-bottom:1px solid #ececec;box-sizing:border-box"></div><div class="a" style="left:975px;top:597px;width:748px;height:24px;background:#d9d9d9"></div><svg style="position:absolute;left:931px;top:600px" width="10" height="18" viewBox="0 0 10 18" ><path d="M0.9 0.7 L9.1 8.9 L0.9 17.1" stroke="#3a3a3a" stroke-width="1.5" fill="none"/></svg><svg style="position:absolute;left:954.5px;top:599px" width="17" height="21" viewBox="0 0 17 21" ><defs><linearGradient id="chg" x1="0" y1="0" x2="0" y2="1"><stop offset="0" stop-color="#727477"/><stop offset="1" stop-color="#3c3c3c"/></linearGradient></defs><ellipse cx="1.3" cy="4.1000000000000005" rx="0.9" ry="1.0" fill="#9a9a9a"/><ellipse cx="15.7" cy="4.1000000000000005" rx="0.9" ry="1.0" fill="#9a9a9a"/><ellipse cx="1.3" cy="8.7" rx="0.9" ry="1.0" fill="#9a9a9a"/><ellipse cx="15.7" cy="8.7" rx="0.9" ry="1.0" fill="#9a9a9a"/><ellipse cx="1.3" cy="13.200000000000001" rx="0.9" ry="1.0" fill="#9a9a9a"/><ellipse cx="15.7" cy="13.200000000000001" rx="0.9" ry="1.0" fill="#9a9a9a"/><ellipse cx="1.3" cy="17.7" rx="0.9" ry="1.0" fill="#9a9a9a"/><ellipse cx="15.7" cy="17.7" rx="0.9" ry="1.0" fill="#9a9a9a"/><rect x="2.5" y="0" width="11.8" height="20.5" rx="1" fill="url(#chg)"/><path d="M6 0 L8.4 2.2 L10.8 0" fill="none" stroke="#9a9c9f" stroke-width="0.9"/></svg><div class="a t" style="left:977px;top:596px;height:25px;line-height:25px;font-weight:bold;font-size:17px;padding-top:2px;letter-spacing:0.2px;-webkit-text-stroke:0;">Тайминги памяти</div><div class="a" style="left:951px;top:647px;width:24px;height:25px;background:#fdfdfd;border-bottom:1px solid #ececec;box-sizing:border-box"></div><div class="a" style="left:975px;top:647px;width:748px;height:24px;background:#d9d9d9"></div><svg style="position:absolute;left:927px;top:654px" width="18" height="10" viewBox="0 0 18 10" ><path d="M0.7 0.9 L9 9.2 L17.3 0.9" stroke="#3a3a3a" stroke-width="1.5" fill="none"/></svg><svg style="position:absolute;left:954.5px;top:649px" width="17" height="21" viewBox="0 0 17 21" ><defs><linearGradient id="chg" x1="0" y1="0" x2="0" y2="1"><stop offset="0" stop-color="#727477"/><stop offset="1" stop-color="#3c3c3c"/></linearGradient></defs><ellipse cx="1.3" cy="4.1000000000000005" rx="0.9" ry="1.0" fill="#9a9a9a"/><ellipse cx="15.7" cy="4.1000000000000005" rx="0.9" ry="1.0" fill="#9a9a9a"/><ellipse cx="1.3" cy="8.7" rx="0.9" ry="1.0" fill="#9a9a9a"/><ellipse cx="15.7" cy="8.7" rx="0.9" ry="1.0" fill="#9a9a9a"/><ellipse cx="1.3" cy="13.200000000000001" rx="0.9" ry="1.0" fill="#9a9a9a"/><ellipse cx="15.7" cy="13.200000000000001" rx="0.9" ry="1.0" fill="#9a9a9a"/><ellipse cx="1.3" cy="17.7" rx="0.9" ry="1.0" fill="#9a9a9a"/><ellipse cx="15.7" cy="17.7" rx="0.9" ry="1.0" fill="#9a9a9a"/><rect x="2.5" y="0" width="11.8" height="20.5" rx="1" fill="url(#chg)"/><path d="M6 0 L8.4 2.2 L10.8 0" fill="none" stroke="#9a9c9f" stroke-width="0.9"/></svg><div class="a t" style="left:977px;top:646px;height:25px;line-height:25px;font-weight:bold;font-size:17px;padding-top:2px;letter-spacing:0.2px;-webkit-text-stroke:0;">ЦП [#0]: AMD Ryzen 9 9950X3D: Enhanced</div><div class="a" style="left:951px;top:672px;width:23px;height:25px;background:#fdfdfd;border-bottom:1px solid #ececec;box-sizing:border-box"></div><div class="a" style="left:1244px;top:672px;width:119px;height:24px;background:#cfe4f9"></div><svg style="position:absolute;left:959px;top:674px" width="8" height="21" viewBox="0 0 8 21" ><rect x="2.2" y="0.5" width="3.4" height="17" rx="1.7" fill="#e0e0e0"/><rect x="2.4" y="6.5" width="3" height="11" fill="#d42222"/><circle cx="3.9" cy="17.3" r="3.0" fill="#dd1f1f"/></svg><div class="a t" style="left:976px;top:671px;height:25px;line-height:25px;padding-top:2px;letter-spacing:0.000px;width:266px;overflow:hidden;">ЦП (Tctl/Tdie)</div><div class="a t" style="right:1236px;top:671px;height:25px;line-height:25px;text-align:right;padding-top:2px;">78.8 °C</div><div class="a t" style="right:1116px;top:671px;height:25px;line-height:25px;text-align:right;padding-top:2px;">41.4 °C</div><div class="a t" style="right:996px;top:671px;height:25px;line-height:25px;text-align:right;padding-top:2px;">80.5 °C</div><div class="a t" style="right:876px;top:671px;height:25px;line-height:25px;text-align:right;padding-top:2px;">67.1 °C</div><div class="a" style="left:951px;top:697px;width:23px;height:25px;background:#fdfdfd;border-bottom:1px solid #ececec;box-sizing:border-box"></div><div class="a" style="left:974px;top:697px;width:749px;height:25px;background:#f0f0f0"></div><div class="a" style="left:1244px;top:697px;width:119px;height:24px;background:#cfe4f9"></div><svg style="position:absolute;left:959px;top:699px" width="8" height="21" viewBox="0 0 8 21" ><rect x="2.2" y="0.5" width="3.4" height="17" rx="1.7" fill="#e0e0e0"/><rect x="2.4" y="6.5" width="3" height="11" fill="#d42222"/><circle cx="3.9" cy="17.3" r="3.0" fill="#dd1f1f"/></svg><div class="a t" style="left:976px;top:696px;height:25px;line-height:25px;padding-top:2px;letter-spacing:0.000px;width:266px;overflow:hidden;">Кристалл ЦП (среднее)</div><div class="a t" style="right:1236px;top:696px;height:25px;line-height:25px;text-align:right;padding-top:2px;">77.5 °C</div><div class="a t" style="right:1116px;top:696px;height:25px;line-height:25px;text-align:right;padding-top:2px;">41.1 °C</div><div class="a t" style="right:996px;top:696px;height:25px;line-height:25px;text-align:right;padding-top:2px;">79.6 °C</div><div class="a t" style="right:876px;top:696px;height:25px;line-height:25px;text-align:right;padding-top:2px;">64.9 °C</div><div class="a" style="left:951px;top:722px;width:23px;height:25px;background:#fdfdfd;border-bottom:1px solid #ececec;box-sizing:border-box"></div><div class="a" style="left:1244px;top:722px;width:119px;height:24px;background:#cfe4f9"></div><svg style="position:absolute;left:959px;top:724px" width="8" height="21" viewBox="0 0 8 21" ><rect x="2.2" y="0.5" width="3.4" height="17" rx="1.7" fill="#e0e0e0"/><rect x="2.4" y="6.5" width="3" height="11" fill="#d42222"/><circle cx="3.9" cy="17.3" r="3.0" fill="#dd1f1f"/></svg><div class="a t" style="left:976px;top:721px;height:25px;line-height:25px;padding-top:2px;letter-spacing:0.000px;width:266px;overflow:hidden;">ЦП CCD1 (Tdie)</div><div class="a t" style="right:1236px;top:721px;height:25px;line-height:25px;text-align:right;padding-top:2px;">77.4 °C</div><div class="a t" style="right:1116px;top:721px;height:25px;line-height:25px;text-align:right;padding-top:2px;">31.4 °C</div><div class="a t" style="right:996px;top:721px;height:25px;line-height:25px;text-align:right;padding-top:2px;">82.0 °C</div><div class="a t" style="right:876px;top:721px;height:25px;line-height:25px;text-align:right;padding-top:2px;">64.1 °C</div><div class="a" style="left:951px;top:747px;width:23px;height:25px;background:#fdfdfd;border-bottom:1px solid #ececec;box-sizing:border-box"></div><div class="a" style="left:974px;top:747px;width:749px;height:25px;background:#f0f0f0"></div><div class="a" style="left:1244px;top:747px;width:119px;height:24px;background:#cfe4f9"></div><svg style="position:absolute;left:959px;top:749px" width="8" height="21" viewBox="0 0 8 21" ><rect x="2.2" y="0.5" width="3.4" height="17" rx="1.7" fill="#e0e0e0"/><rect x="2.4" y="6.5" width="3" height="11" fill="#d42222"/><circle cx="3.9" cy="17.3" r="3.0" fill="#dd1f1f"/></svg><div class="a t" style="left:976px;top:746px;height:25px;line-height:25px;padding-top:2px;letter-spacing:0.000px;width:266px;overflow:hidden;">ЦП CCD2 (Tdie)</div><div class="a t" style="right:1236px;top:746px;height:25px;line-height:25px;text-align:right;padding-top:2px;">75.1 °C</div><div class="a t" style="right:1116px;top:746px;height:25px;line-height:25px;text-align:right;padding-top:2px;">31.1 °C</div><div class="a t" style="right:996px;top:746px;height:25px;line-height:25px;text-align:right;padding-top:2px;">79.5 °C</div><div class="a t" style="right:876px;top:746px;height:25px;line-height:25px;text-align:right;padding-top:2px;">52.5 °C</div><div class="a" style="left:975px;top:772px;width:22.5px;height:25px;background:#fdfdfd;border-bottom:1px solid #ececec;box-sizing:border-box"></div><div class="a" style="left:1244px;top:772px;width:119px;height:24px;background:#cfe4f9"></div><svg style="position:absolute;left:955px;top:775px" width="10" height="18" viewBox="0 0 10 18" ><path d="M0.9 0.7 L9.1 8.9 L0.9 17.1" stroke="#3a3a3a" stroke-width="1.5" fill="none"/></svg><svg style="position:absolute;left:983px;top:774px" width="8" height="21" viewBox="0 0 8 21" ><rect x="2.2" y="0.5" width="3.4" height="17" rx="1.7" fill="#e0e0e0"/><rect x="2.4" y="6.5" width="3" height="11" fill="#d42222"/><circle cx="3.9" cy="17.3" r="3.0" fill="#dd1f1f"/></svg><div class="a t" style="left:999.5px;top:771px;height:25px;line-height:25px;padding-top:2px;letter-spacing:0.000px;width:242.5px;overflow:hidden;">Температуры ядер</div><div class="a t" style="right:1236px;top:771px;height:25px;line-height:25px;text-align:right;padding-top:2px;">73.0 °C</div><div class="a t" style="right:1116px;top:771px;height:25px;line-height:25px;text-align:right;padding-top:2px;">27.2 °C</div><div class="a t" style="right:996px;top:771px;height:25px;line-height:25px;text-align:right;padding-top:2px;">79.2 °C</div><div class="a t" style="right:876px;top:771px;height:25px;line-height:25px;text-align:right;padding-top:2px;">53.2 °C</div><div class="a" style="left:975px;top:797px;width:22.5px;height:25px;background:#fdfdfd;border-bottom:1px solid #ececec;box-sizing:border-box"></div><div class="a" style="left:997.5px;top:797px;width:725.5px;height:25px;background:#f0f0f0"></div><div class="a" style="left:1244px;top:797px;width:119px;height:24px;background:#cfe4f9"></div><svg style="position:absolute;left:955px;top:800px" width="10" height="18" viewBox="0 0 10 18" ><path d="M0.9 0.7 L9.1 8.9 L0.9 17.1" stroke="#3a3a3a" stroke-width="1.5" fill="none"/></svg><svg style="position:absolute;left:983px;top:799px" width="8" height="21" viewBox="0 0 8 21" ><rect x="2.2" y="0.5" width="3.4" height="17" rx="1.7" fill="#e0e0e0"/><rect x="2.4" y="6.5" width="3" height="11" fill="#d42222"/><circle cx="3.9" cy="17.3" r="3.0" fill="#dd1f1f"/></svg><div class="a t" style="left:999.5px;top:796px;height:25px;line-height:25px;padding-top:2px;letter-spacing:0.000px;width:242.5px;overflow:hidden;">Температуры L3</div><div class="a t" style="right:1236px;top:796px;height:25px;line-height:25px;text-align:right;padding-top:2px;">56.0 °C</div><div class="a t" style="right:1116px;top:796px;height:25px;line-height:25px;text-align:right;padding-top:2px;">27.9 °C</div><div class="a t" style="right:996px;top:796px;height:25px;line-height:25px;text-align:right;padding-top:2px;">57.8 °C</div><div class="a t" style="right:876px;top:796px;height:25px;line-height:25px;text-align:right;padding-top:2px;">45.2 °C</div><div class="a" style="left:951px;top:822px;width:23px;height:25px;background:#fdfdfd;border-bottom:1px solid #ececec;box-sizing:border-box"></div><div class="a" style="left:1244px;top:822px;width:119px;height:24px;background:#cfe4f9"></div><svg style="position:absolute;left:959px;top:824px" width="8" height="21" viewBox="0 0 8 21" ><rect x="2.2" y="0.5" width="3.4" height="17" rx="1.7" fill="#e0e0e0"/><rect x="2.4" y="6.5" width="3" height="11" fill="#d42222"/><circle cx="3.9" cy="17.3" r="3.0" fill="#dd1f1f"/></svg><div class="a t" style="left:976px;top:821px;height:25px;line-height:25px;padding-top:2px;letter-spacing:0.000px;width:266px;overflow:hidden;">ЦП IOD Hotspot</div><div class="a t" style="right:1236px;top:821px;height:25px;line-height:25px;text-align:right;padding-top:2px;">52.8 °C</div><div class="a t" style="right:1116px;top:821px;height:25px;line-height:25px;text-align:right;padding-top:2px;">39.2 °C</div><div class="a t" style="right:996px;top:821px;height:25px;line-height:25px;text-align:right;padding-top:2px;">53.2 °C</div><div class="a t" style="right:876px;top:821px;height:25px;line-height:25px;text-align:right;padding-top:2px;">47.3 °C</div><div class="a" style="left:951px;top:847px;width:23px;height:25px;background:#fdfdfd;border-bottom:1px solid #ececec;box-sizing:border-box"></div><div class="a" style="left:974px;top:847px;width:749px;height:25px;background:#f0f0f0"></div><div class="a" style="left:1244px;top:847px;width:119px;height:24px;background:#cfe4f9"></div><svg style="position:absolute;left:959px;top:849px" width="8" height="21" viewBox="0 0 8 21" ><rect x="2.2" y="0.5" width="3.4" height="17" rx="1.7" fill="#e0e0e0"/><rect x="2.4" y="6.5" width="3" height="11" fill="#d42222"/><circle cx="3.9" cy="17.3" r="3.0" fill="#dd1f1f"/></svg><div class="a t" style="left:976px;top:846px;height:25px;line-height:25px;padding-top:2px;letter-spacing:0.000px;width:266px;overflow:hidden;">Среднее IOD ЦП</div><div class="a t" style="right:1236px;top:846px;height:25px;line-height:25px;text-align:right;padding-top:2px;">47.1 °C</div><div class="a t" style="right:1116px;top:846px;height:25px;line-height:25px;text-align:right;padding-top:2px;">36.6 °C</div><div class="a t" style="right:996px;top:846px;height:25px;line-height:25px;text-align:right;padding-top:2px;">47.4 °C</div><div class="a t" style="right:876px;top:846px;height:25px;line-height:25px;text-align:right;padding-top:2px;">42.7 °C</div><div class="a" style="left:951px;top:872px;width:23px;height:25px;background:#fdfdfd;border-bottom:1px solid #ececec;box-sizing:border-box"></div><svg style="position:absolute;left:959px;top:874px" width="8" height="21" viewBox="0 0 8 21" ><rect x="2.2" y="0.5" width="3.4" height="17" rx="1.7" fill="#e0e0e0"/><rect x="2.4" y="6.5" width="3" height="11" fill="#d42222"/><circle cx="3.9" cy="17.3" r="3.0" fill="#dd1f1f"/></svg><div class="a t" style="left:976px;top:871px;height:25px;line-height:25px;padding-top:2px;letter-spacing:0.000px;width:266px;overflow:hidden;">ЦП VDDCR_VDD VRM (SVI3 TFN)</div><div class="a t" style="right:1236px;top:871px;height:25px;line-height:25px;text-align:right;padding-top:2px;">56.0 °C</div><div class="a t" style="right:1116px;top:871px;height:25px;line-height:25px;text-align:right;padding-top:2px;">41.1 °C</div><div class="a t" style="right:996px;top:871px;height:25px;line-height:25px;text-align:right;padding-top:2px;">56.0 °C</div><div class="a t" style="right:876px;top:871px;height:25px;line-height:25px;text-align:right;padding-top:2px;">48.8 °C</div><div class="a" style="left:951px;top:897px;width:23px;height:25px;background:#fdfdfd;border-bottom:1px solid #ececec;box-sizing:border-box"></div><div class="a" style="left:974px;top:897px;width:749px;height:25px;background:#f0f0f0"></div><div class="a" style="left:1244px;top:897px;width:119px;height:24px;background:#cfe4f9"></div><svg style="position:absolute;left:959px;top:899px" width="8" height="21" viewBox="0 0 8 21" ><rect x="2.2" y="0.5" width="3.4" height="17" rx="1.7" fill="#e0e0e0"/><rect x="2.4" y="6.5" width="3" height="11" fill="#d42222"/><circle cx="3.9" cy="17.3" r="3.0" fill="#dd1f1f"/></svg><div class="a t" style="left:976px;top:896px;height:25px;line-height:25px;padding-top:2px;letter-spacing:0.000px;width:266px;overflow:hidden;">ЦП VDDCR_SOC VRM (SVI3 TFN)</div><div class="a t" style="right:1236px;top:896px;height:25px;line-height:25px;text-align:right;padding-top:2px;">54.0 °C</div><div class="a t" style="right:1116px;top:896px;height:25px;line-height:25px;text-align:right;padding-top:2px;">36.2 °C</div><div class="a t" style="right:996px;top:896px;height:25px;line-height:25px;text-align:right;padding-top:2px;">54.0 °C</div><div class="a t" style="right:876px;top:896px;height:25px;line-height:25px;text-align:right;padding-top:2px;">43.8 °C</div><div class="a" style="left:951px;top:922px;width:23px;height:25px;background:#fdfdfd;border-bottom:1px solid #ececec;box-sizing:border-box"></div><svg style="position:absolute;left:959px;top:924px" width="8" height="21" viewBox="0 0 8 21" ><rect x="2.2" y="0.5" width="3.4" height="17" rx="1.7" fill="#e0e0e0"/><rect x="2.4" y="6.5" width="3" height="11" fill="#d42222"/><circle cx="3.9" cy="17.3" r="3.0" fill="#dd1f1f"/></svg><div class="a t" style="left:976px;top:921px;height:25px;line-height:25px;padding-top:2px;letter-spacing:0.000px;width:266px;overflow:hidden;">ЦП VDD_MISC VRM (SVI3 TFN)</div><div class="a t" style="right:1236px;top:921px;height:25px;line-height:25px;text-align:right;padding-top:2px;">50.0 °C</div><div class="a t" style="right:1116px;top:921px;height:25px;line-height:25px;text-align:right;padding-top:2px;">38.0 °C</div><div class="a t" style="right:996px;top:921px;height:25px;line-height:25px;text-align:right;padding-top:2px;">50.0 °C</div><div class="a t" style="right:876px;top:921px;height:25px;line-height:25px;text-align:right;padding-top:2px;">44.6 °C</div><div class="a" style="left:951px;top:947px;width:23px;height:25px;background:#fdfdfd;border-bottom:1px solid #ececec;box-sizing:border-box"></div><div class="a" style="left:974px;top:947px;width:749px;height:25px;background:#f0f0f0"></div><div class="a" style="left:1244px;top:947px;width:119px;height:24px;background:#cfe4f9"></div><svg style="position:absolute;left:956px;top:947px" width="14" height="24" viewBox="0 0 14 24" ><path d="M6.7 0.2 L12.8 0.2 L8.1 8.3 L13.2 8.5 L0.2 23.7 L4.7 12.4 L0.2 12.4 Z" fill="#ebb513"/></svg><div class="a t" style="left:976px;top:946px;height:25px;line-height:25px;padding-top:2px;letter-spacing:-0.219px;width:266px;overflow:hidden;">ЦП VDDCR_VDD Напряжение (SV...</div><div class="a t" style="right:1236px;top:946px;height:25px;line-height:25px;text-align:right;padding-top:2px;">1.170 В</div><div class="a t" style="right:1116px;top:946px;height:25px;line-height:25px;text-align:right;padding-top:2px;">0.805 В</div><div class="a t" style="right:996px;top:946px;height:25px;line-height:25px;text-align:right;padding-top:2px;">1.364 В</div><div class="a t" style="right:876px;top:946px;height:25px;line-height:25px;text-align:right;padding-top:2px;">1.242 В</div><div class="a" style="left:951px;top:972px;width:23px;height:25px;background:#fdfdfd;border-bottom:1px solid #ececec;box-sizing:border-box"></div><svg style="position:absolute;left:956px;top:972px" width="14" height="24" viewBox="0 0 14 24" ><path d="M6.7 0.2 L12.8 0.2 L8.1 8.3 L13.2 8.5 L0.2 23.7 L4.7 12.4 L0.2 12.4 Z" fill="#ebb513"/></svg><div class="a t" style="left:976px;top:971px;height:25px;line-height:25px;padding-top:2px;letter-spacing:-0.282px;width:266px;overflow:hidden;">ЦП VDDCR_SOC Напряжение (SV...</div><div class="a t" style="right:1236px;top:971px;height:25px;line-height:25px;text-align:right;padding-top:2px;">0.910 В</div><div class="a t" style="right:1116px;top:971px;height:25px;line-height:25px;text-align:right;padding-top:2px;">0.910 В</div><div class="a t" style="right:996px;top:971px;height:25px;line-height:25px;text-align:right;padding-top:2px;">0.945 В</div><div class="a t" style="right:876px;top:971px;height:25px;line-height:25px;text-align:right;padding-top:2px;">0.927 В</div><div class="a" style="left:951px;top:997px;width:23px;height:25px;background:#fdfdfd;border-bottom:1px solid #ececec;box-sizing:border-box"></div><div class="a" style="left:974px;top:997px;width:749px;height:25px;background:#f0f0f0"></div><svg style="position:absolute;left:956px;top:997px" width="14" height="24" viewBox="0 0 14 24" ><path d="M6.7 0.2 L12.8 0.2 L8.1 8.3 L13.2 8.5 L0.2 23.7 L4.7 12.4 L0.2 12.4 Z" fill="#ebb513"/></svg><div class="a t" style="left:976px;top:996px;height:25px;line-height:25px;padding-top:2px;letter-spacing:-0.145px;width:266px;overflow:hidden;">ЦП VDD_MISC Напряжение (SVI3...</div><div class="a t" style="right:1236px;top:996px;height:25px;line-height:25px;text-align:right;padding-top:2px;">1.100 В</div><div class="a t" style="right:1116px;top:996px;height:25px;line-height:25px;text-align:right;padding-top:2px;">1.100 В</div><div class="a t" style="right:996px;top:996px;height:25px;line-height:25px;text-align:right;padding-top:2px;">1.100 В</div><div class="a t" style="right:876px;top:996px;height:25px;line-height:25px;text-align:right;padding-top:2px;">1.100 В</div><div class="a" style="left:951px;top:1022px;width:23px;height:25px;background:#fdfdfd;border-bottom:1px solid #ececec;box-sizing:border-box"></div><div class="a" style="left:1244px;top:1022px;width:119px;height:24px;background:#cfe4f9"></div><svg style="position:absolute;left:956px;top:1022px" width="14" height="24" viewBox="0 0 14 24" ><path d="M6.7 0.2 L12.8 0.2 L8.1 8.3 L13.2 8.5 L0.2 23.7 L4.7 12.4 L0.2 12.4 Z" fill="#ebb513"/></svg><div class="a t" style="left:976px;top:1021px;height:25px;line-height:25px;padding-top:2px;letter-spacing:0.000px;width:266px;overflow:hidden;">Ток ядра ЦП (SVI3 TFN)</div><div class="a t" style="right:1236px;top:1021px;height:25px;line-height:25px;text-align:right;padding-top:2px;">134.700 A</div><div class="a t" style="right:1116px;top:1021px;height:25px;line-height:25px;text-align:right;padding-top:2px;">1.191 A</div><div class="a t" style="right:996px;top:1021px;height:25px;line-height:25px;text-align:right;padding-top:2px;">152.502 A</div><div class="a t" style="right:876px;top:1021px;height:25px;line-height:25px;text-align:right;padding-top:2px;">74.841 A</div><div class="a" style="left:951px;top:1047px;width:23px;height:25px;background:#fdfdfd;border-bottom:1px solid #ececec;box-sizing:border-box"></div><div class="a" style="left:974px;top:1047px;width:749px;height:25px;background:#f0f0f0"></div><div class="a" style="left:1244px;top:1047px;width:119px;height:24px;background:#cfe4f9"></div><svg style="position:absolute;left:956px;top:1047px" width="14" height="24" viewBox="0 0 14 24" ><path d="M6.7 0.2 L12.8 0.2 L8.1 8.3 L13.2 8.5 L0.2 23.7 L4.7 12.4 L0.2 12.4 Z" fill="#ebb513"/></svg><div class="a t" style="left:976px;top:1046px;height:25px;line-height:25px;padding-top:2px;letter-spacing:0.000px;width:266px;overflow:hidden;">Ток SoC (SVI3 TFN)</div><div class="a t" style="right:1236px;top:1046px;height:25px;line-height:25px;text-align:right;padding-top:2px;">8.729 A</div><div class="a t" style="right:1116px;top:1046px;height:25px;line-height:25px;text-align:right;padding-top:2px;">6.326 A</div><div class="a t" style="right:996px;top:1046px;height:25px;line-height:25px;text-align:right;padding-top:2px;">8.822 A</div><div class="a t" style="right:876px;top:1046px;height:25px;line-height:25px;text-align:right;padding-top:2px;">8.350 A</div><div class="a" style="left:951px;top:1072px;width:23px;height:25px;background:#fdfdfd;border-bottom:1px solid #ececec;box-sizing:border-box"></div><div class="a" style="left:1244px;top:1072px;width:119px;height:24px;background:#cfe4f9"></div><svg style="position:absolute;left:956px;top:1072px" width="14" height="24" viewBox="0 0 14 24" ><path d="M6.7 0.2 L12.8 0.2 L8.1 8.3 L13.2 8.5 L0.2 23.7 L4.7 12.4 L0.2 12.4 Z" fill="#ebb513"/></svg><div class="a t" style="left:976px;top:1071px;height:25px;line-height:25px;padding-top:2px;letter-spacing:0.000px;width:266px;overflow:hidden;">ЦП TDC</div><div class="a t" style="right:1236px;top:1071px;height:25px;line-height:25px;text-align:right;padding-top:2px;">134.884 A</div><div class="a t" style="right:1116px;top:1071px;height:25px;line-height:25px;text-align:right;padding-top:2px;">1.163 A</div><div class="a t" style="right:996px;top:1071px;height:25px;line-height:25px;text-align:right;padding-top:2px;">152.718 A</div><div class="a t" style="right:876px;top:1071px;height:25px;line-height:25px;text-align:right;padding-top:2px;">74.850 A</div><div class="a" style="left:951px;top:1097px;width:23px;height:25px;background:#fdfdfd;border-bottom:1px solid #ececec;box-sizing:border-box"></div><div class="a" style="left:974px;top:1097px;width:749px;height:25px;background:#f0f0f0"></div><div class="a" style="left:1244px;top:1097px;width:119px;height:24px;background:#cfe4f9"></div><svg style="position:absolute;left:956px;top:1097px" width="14" height="24" viewBox="0 0 14 24" ><path d="M6.7 0.2 L12.8 0.2 L8.1 8.3 L13.2 8.5 L0.2 23.7 L4.7 12.4 L0.2 12.4 Z" fill="#ebb513"/></svg><div class="a t" style="left:976px;top:1096px;height:25px;line-height:25px;padding-top:2px;letter-spacing:0.000px;width:266px;overflow:hidden;">ЦП EDC</div><div class="a t" style="right:1236px;top:1096px;height:25px;line-height:25px;text-align:right;padding-top:2px;">173.500 A</div><div class="a t" style="right:1116px;top:1096px;height:25px;line-height:25px;text-align:right;padding-top:2px;">11.000 A</div><div class="a t" style="right:996px;top:1096px;height:25px;line-height:25px;text-align:right;padding-top:2px;">190.000 A</div><div class="a t" style="right:876px;top:1096px;height:25px;line-height:25px;text-align:right;padding-top:2px;">108.852 A</div><div class="a" style="left:951px;top:1122px;width:23px;height:25px;background:#fdfdfd;border-bottom:1px solid #ececec;box-sizing:border-box"></div><div class="a" style="left:1244px;top:1122px;width:119px;height:24px;background:#cfe4f9"></div><svg style="position:absolute;left:956px;top:1122px" width="14" height="24" viewBox="0 0 14 24" ><path d="M6.7 0.2 L12.8 0.2 L8.1 8.3 L13.2 8.5 L0.2 23.7 L4.7 12.4 L0.2 12.4 Z" fill="#ebb513"/></svg><div class="a t" style="left:976px;top:1121px;height:25px;line-height:25px;padding-top:2px;letter-spacing:0.000px;width:266px;overflow:hidden;">Ток MISC (SVI3 TFN)</div><div class="a t" style="right:1236px;top:1121px;height:25px;line-height:25px;text-align:right;padding-top:2px;">9.086 A</div><div class="a t" style="right:1116px;top:1121px;height:25px;line-height:25px;text-align:right;padding-top:2px;">6.541 A</div><div class="a t" style="right:996px;top:1121px;height:25px;line-height:25px;text-align:right;padding-top:2px;">9.127 A</div><div class="a t" style="right:876px;top:1121px;height:25px;line-height:25px;text-align:right;padding-top:2px;">8.818 A</div><div class="a" style="left:951px;top:1147px;width:23px;height:25px;background:#fdfdfd;border-bottom:1px solid #ececec;box-sizing:border-box"></div><div class="a" style="left:974px;top:1147px;width:749px;height:25px;background:#f0f0f0"></div><div class="a" style="left:1244px;top:1147px;width:119px;height:24px;background:#cfe4f9"></div><svg style="position:absolute;left:956px;top:1147px" width="14" height="24" viewBox="0 0 14 24" ><path d="M6.7 0.2 L12.8 0.2 L8.1 8.3 L13.2 8.5 L0.2 23.7 L4.7 12.4 L0.2 12.4 Z" fill="#ebb513"/></svg><div class="a t" style="left:976px;top:1146px;height:25px;line-height:25px;padding-top:2px;letter-spacing:-0.093px;width:266px;overflow:hidden;">Полная потребляемая мощность ...</div><div class="a t" style="right:1236px;top:1146px;height:25px;line-height:25px;text-align:right;padding-top:2px;">175.628 W</div><div class="a t" style="right:1116px;top:1146px;height:25px;line-height:25px;text-align:right;padding-top:2px;">20.013 W</div><div class="a t" style="right:996px;top:1146px;height:25px;line-height:25px;text-align:right;padding-top:2px;">190.377 W</div><div class="a t" style="right:876px;top:1146px;height:25px;line-height:25px;text-align:right;padding-top:2px;">113.086 W</div><div class="a" style="left:975px;top:1172px;width:22.5px;height:25px;background:#fdfdfd;border-bottom:1px solid #ececec;box-sizing:border-box"></div><div class="a" style="left:1244px;top:1172px;width:119px;height:24px;background:#cfe4f9"></div><svg style="position:absolute;left:955px;top:1175px" width="10" height="18" viewBox="0 0 10 18" ><path d="M0.9 0.7 L9.1 8.9 L0.9 17.1" stroke="#3a3a3a" stroke-width="1.5" fill="none"/></svg><svg style="position:absolute;left:980px;top:1172px" width="14" height="24" viewBox="0 0 14 24" ><path d="M6.7 0.2 L12.8 0.2 L8.1 8.3 L13.2 8.5 L0.2 23.7 L4.7 12.4 L0.2 12.4 Z" fill="#ebb513"/></svg><div class="a t" style="left:999.5px;top:1171px;height:25px;line-height:25px;padding-top:2px;letter-spacing:0.000px;width:242.5px;overflow:hidden;">Потребляемая мощность ядер</div><div class="a t" style="right:1236px;top:1171px;height:25px;line-height:25px;text-align:right;padding-top:2px;">9.130 W</div><div class="a t" style="right:1116px;top:1171px;height:25px;line-height:25px;text-align:right;padding-top:2px;">0.011 W</div><div class="a t" style="right:996px;top:1171px;height:25px;line-height:25px;text-align:right;padding-top:2px;">11.617 W</div><div class="a t" style="right:876px;top:1171px;height:25px;line-height:25px;text-align:right;padding-top:2px;">5.381 W</div><div class="a" style="left:951px;top:1197px;width:23px;height:25px;background:#fdfdfd;border-bottom:1px solid #ececec;box-sizing:border-box"></div><div class="a" style="left:974px;top:1197px;width:749px;height:25px;background:#f0f0f0"></div><div class="a" style="left:1244px;top:1197px;width:119px;height:24px;background:#cfe4f9"></div><svg style="position:absolute;left:956px;top:1197px" width="14" height="24" viewBox="0 0 14 24" ><path d="M6.7 0.2 L12.8 0.2 L8.1 8.3 L13.2 8.5 L0.2 23.7 L4.7 12.4 L0.2 12.4 Z" fill="#ebb513"/></svg><div class="a t" style="left:976px;top:1196px;height:25px;line-height:25px;padding-top:2px;letter-spacing:-0.162px;width:266px;overflow:hidden;">ЦП Потребляемая мощность ядра...</div><div class="a t" style="right:1236px;top:1196px;height:25px;line-height:25px;text-align:right;padding-top:2px;">157.370 W</div><div class="a t" style="right:1116px;top:1196px;height:25px;line-height:25px;text-align:right;padding-top:2px;">1.241 W</div><div class="a t" style="right:996px;top:1196px;height:25px;line-height:25px;text-align:right;padding-top:2px;">176.872 W</div><div class="a t" style="right:876px;top:1196px;height:25px;line-height:25px;text-align:right;padding-top:2px;">90.858 W</div><div class="a" style="left:951px;top:1222px;width:23px;height:25px;background:#fdfdfd;border-bottom:1px solid #ececec;box-sizing:border-box"></div><div class="a" style="left:1244px;top:1222px;width:119px;height:24px;background:#cfe4f9"></div><svg style="position:absolute;left:956px;top:1222px" width="14" height="24" viewBox="0 0 14 24" ><path d="M6.7 0.2 L12.8 0.2 L8.1 8.3 L13.2 8.5 L0.2 23.7 L4.7 12.4 L0.2 12.4 Z" fill="#ebb513"/></svg><div class="a t" style="left:976px;top:1221px;height:25px;line-height:25px;padding-top:2px;letter-spacing:-0.080px;width:266px;overflow:hidden;">Потребляемая мощность ЦП на к...</div><div class="a t" style="right:1236px;top:1221px;height:25px;line-height:25px;text-align:right;padding-top:2px;">7.942 W</div><div class="a t" style="right:1116px;top:1221px;height:25px;line-height:25px;text-align:right;padding-top:2px;">5.773 W</div><div class="a t" style="right:996px;top:1221px;height:25px;line-height:25px;text-align:right;padding-top:2px;">8.220 W</div><div class="a t" style="right:876px;top:1221px;height:25px;line-height:25px;text-align:right;padding-top:2px;">7.742 W</div><div class="a" style="left:951px;top:1247px;width:23px;height:25px;background:#fdfdfd;border-bottom:1px solid #ececec;box-sizing:border-box"></div><div class="a" style="left:974px;top:1247px;width:749px;height:25px;background:#f0f0f0"></div><div class="a" style="left:1244px;top:1247px;width:119px;height:24px;background:#cfe4f9"></div><svg style="position:absolute;left:956px;top:1247px" width="14" height="24" viewBox="0 0 14 24" ><path d="M6.7 0.2 L12.8 0.2 L8.1 8.3 L13.2 8.5 L0.2 23.7 L4.7 12.4 L0.2 12.4 Z" fill="#ebb513"/></svg><div class="a t" style="left:976px;top:1246px;height:25px;line-height:25px;padding-top:2px;letter-spacing:-0.149px;width:266px;overflow:hidden;">Core+SoC+MISC Потребляемая м...</div><div class="a t" style="right:1236px;top:1246px;height:25px;line-height:25px;text-align:right;padding-top:2px;">175.306 W</div><div class="a t" style="right:1116px;top:1246px;height:25px;line-height:25px;text-align:right;padding-top:2px;">14.209 W</div><div class="a t" style="right:996px;top:1246px;height:25px;line-height:25px;text-align:right;padding-top:2px;">194.560 W</div><div class="a t" style="right:876px;top:1246px;height:25px;line-height:25px;text-align:right;padding-top:2px;">108.299 W</div><div class="a t" style="left:1763.5px;top:46px;height:25px;line-height:25px;padding-top:2px;">Датчик</div><div class="a" style="left:2080px;top:47px;width:1px;height:24px;background:#e5e5e5"></div><div class="a" style="left:2200px;top:47px;width:1px;height:24px;background:#e5e5e5"></div><div class="a" style="left:2320px;top:47px;width:1px;height:24px;background:#e5e5e5"></div><div class="a" style="left:2440px;top:47px;width:1px;height:24px;background:#e5e5e5"></div><div class="a" style="left:2560px;top:47px;width:1px;height:24px;background:#e5e5e5"></div><div class="a t" style="right:399px;top:46px;height:25px;line-height:25px;text-align:right;padding-top:2px;letter-spacing:-0.5px;">Текущее</div><div class="a t" style="right:279px;top:46px;height:25px;line-height:25px;text-align:right;padding-top:2px;letter-spacing:-0.5px;">Минимум</div><div class="a t" style="right:159px;top:46px;height:25px;line-height:25px;text-align:right;padding-top:2px;letter-spacing:-0.5px;">Максимум</div><div class="a t" style="right:39px;top:46px;height:25px;line-height:25px;text-align:right;padding-top:2px;letter-spacing:-0.5px;">Среднее</div><div class="a" style="left:1788px;top:71px;width:23px;height:25px;background:#fdfdfd;border-bottom:1px solid #ececec;box-sizing:border-box"></div><div class="a" style="left:2081px;top:71px;width:119px;height:24px;background:#cfe4f9"></div><svg style="position:absolute;left:1793px;top:71px" width="14" height="24" viewBox="0 0 14 24" ><path d="M6.7 0.2 L12.8 0.2 L8.1 8.3 L13.2 8.5 L0.2 23.7 L4.7 12.4 L0.2 12.4 Z" fill="#ebb513"/></svg><div class="a t" style="left:1813px;top:70px;height:25px;line-height:25px;padding-top:2px;letter-spacing:0.000px;width:266px;overflow:hidden;">ЦП PPT</div><div class="a t" style="right:399px;top:70px;height:25px;line-height:25px;text-align:right;padding-top:2px;">181.172 W</div><div class="a t" style="right:279px;top:70px;height:25px;line-height:25px;text-align:right;padding-top:2px;">18.510 W</div><div class="a t" style="right:159px;top:70px;height:25px;line-height:25px;text-align:right;padding-top:2px;">200.126 W</div><div class="a t" style="right:39px;top:70px;height:25px;line-height:25px;text-align:right;padding-top:2px;">113.303 W</div><div class="a" style="left:1788px;top:96px;width:23px;height:25px;background:#fdfdfd;border-bottom:1px solid #ececec;box-sizing:border-box"></div><div class="a" style="left:1811px;top:96px;width:749px;height:25px;background:#f0f0f0"></div><svg style="position:absolute;left:1791px;top:99px" width="18" height="18" viewBox="0 0 18 18" ><path d="M15.4 12.6 A7.6 7.6 0 1 1 14.4 3.6" stroke="#2c3b48" stroke-width="1.6" fill="none" stroke-linecap="round"/><path d="M16.5 1.5 L16.6 6.5 L11.8 5.8 Z" fill="#2c3b48"/><path d="M8.7 4.2 L8.7 9.2 L11.2 12" stroke="#2c3b48" stroke-width="1.4" fill="none"/></svg><div class="a t" style="left:1813px;top:95px;height:25px;line-height:25px;padding-top:2px;letter-spacing:0.000px;width:266px;overflow:hidden;">Infinity Fabric Частота (FCLK)</div><div class="a t" style="right:399px;top:95px;height:25px;line-height:25px;text-align:right;padding-top:2px;">1,800.0 МГц</div><div class="a t" style="right:279px;top:95px;height:25px;line-height:25px;text-align:right;padding-top:2px;">1,800.0 МГц</div><div class="a t" style="right:159px;top:95px;height:25px;line-height:25px;text-align:right;padding-top:2px;">1,800.0 МГц</div><div class="a t" style="right:39px;top:95px;height:25px;line-height:25px;text-align:right;padding-top:2px;">1,800.0 МГц</div><div class="a" style="left:1788px;top:121px;width:23px;height:25px;background:#fdfdfd;border-bottom:1px solid #ececec;box-sizing:border-box"></div><svg style="position:absolute;left:1791px;top:124px" width="18" height="18" viewBox="0 0 18 18" ><path d="M15.4 12.6 A7.6 7.6 0 1 1 14.4 3.6" stroke="#2c3b48" stroke-width="1.6" fill="none" stroke-linecap="round"/><path d="M16.5 1.5 L16.6 6.5 L11.8 5.8 Z" fill="#2c3b48"/><path d="M8.7 4.2 L8.7 9.2 L11.2 12" stroke="#2c3b48" stroke-width="1.4" fill="none"/></svg><div class="a t" style="left:1813px;top:120px;height:25px;line-height:25px;padding-top:2px;letter-spacing:-0.045px;width:266px;overflow:hidden;">Частота контроллера памяти (UC...</div><div class="a t" style="right:399px;top:120px;height:25px;line-height:25px;text-align:right;padding-top:2px;">1,800.0 МГц</div><div class="a t" style="right:279px;top:120px;height:25px;line-height:25px;text-align:right;padding-top:2px;">1,800.0 МГц</div><div class="a t" style="right:159px;top:120px;height:25px;line-height:25px;text-align:right;padding-top:2px;">1,800.0 МГц</div><div class="a t" style="right:39px;top:120px;height:25px;line-height:25px;text-align:right;padding-top:2px;">1,800.0 МГц</div><div class="a" style="left:1812px;top:146px;width:22.5px;height:25px;background:#fdfdfd;border-bottom:1px solid #ececec;box-sizing:border-box"></div><div class="a" style="left:1834.5px;top:146px;width:725.5px;height:25px;background:#f0f0f0"></div><div class="a" style="left:2081px;top:146px;width:119px;height:24px;background:#cfe4f9"></div><svg style="position:absolute;left:1792px;top:149px" width="10" height="18" viewBox="0 0 10 18" ><path d="M0.9 0.7 L9.1 8.9 L0.9 17.1" stroke="#3a3a3a" stroke-width="1.5" fill="none"/></svg><svg style="position:absolute;left:1815px;top:149px" width="18" height="18" viewBox="0 0 18 18" ><path d="M15.4 12.6 A7.6 7.6 0 1 1 14.4 3.6" stroke="#2c3b48" stroke-width="1.6" fill="none" stroke-linecap="round"/><path d="M16.5 1.5 L16.6 6.5 L11.8 5.8 Z" fill="#2c3b48"/><path d="M8.7 4.2 L8.7 9.2 L11.2 12" stroke="#2c3b48" stroke-width="1.4" fill="none"/></svg><div class="a t" style="left:1836.5px;top:145px;height:25px;line-height:25px;padding-top:2px;letter-spacing:0.000px;width:242.5px;overflow:hidden;">L3 Частота</div><div class="a t" style="right:399px;top:145px;height:25px;line-height:25px;text-align:right;padding-top:2px;">5,146.0 МГц</div><div class="a t" style="right:279px;top:145px;height:25px;line-height:25px;text-align:right;padding-top:2px;">2,210.4 МГц</div><div class="a t" style="right:159px;top:145px;height:25px;line-height:25px;text-align:right;padding-top:2px;">5,731.8 МГц</div><div class="a t" style="right:39px;top:145px;height:25px;line-height:25px;text-align:right;padding-top:2px;">5,016.8 МГц</div><div class="a" style="left:1788px;top:171px;width:23px;height:25px;background:#fdfdfd;border-bottom:1px solid #ececec;box-sizing:border-box"></div><div class="a" style="left:2081px;top:171px;width:119px;height:24px;background:#cfe4f9"></div><svg style="position:absolute;left:1791px;top:174px" width="18" height="18" viewBox="0 0 18 18" ><path d="M15.4 12.6 A7.6 7.6 0 1 1 14.4 3.6" stroke="#2c3b48" stroke-width="1.6" fill="none" stroke-linecap="round"/><path d="M16.5 1.5 L16.6 6.5 L11.8 5.8 Z" fill="#2c3b48"/><path d="M8.7 4.2 L8.7 9.2 L11.2 12" stroke="#2c3b48" stroke-width="1.4" fill="none"/></svg><div class="a t" style="left:1813px;top:170px;height:25px;line-height:25px;padding-top:2px;letter-spacing:0.000px;width:266px;overflow:hidden;">Ограничение частоты - глобально</div><div class="a t" style="right:399px;top:170px;height:25px;line-height:25px;text-align:right;padding-top:2px;">5,161.1 МГц</div><div class="a t" style="right:279px;top:170px;height:25px;line-height:25px;text-align:right;padding-top:2px;">5,070.6 МГц</div><div class="a t" style="right:159px;top:170px;height:25px;line-height:25px;text-align:right;padding-top:2px;">5,749.8 МГц</div><div class="a t" style="right:39px;top:170px;height:25px;line-height:25px;text-align:right;padding-top:2px;">5,353.1 МГц</div><div class="a" style="left:1788px;top:196px;width:23px;height:25px;background:#fdfdfd;border-bottom:1px solid #ececec;box-sizing:border-box"></div><div class="a" style="left:1811px;top:196px;width:749px;height:25px;background:#f0f0f0"></div><div class="a" style="left:2081px;top:196px;width:119px;height:24px;background:#cfe4f9"></div><svg style="position:absolute;left:1791px;top:199px" width="18" height="18" viewBox="0 0 18 18" ><path d="M15.4 12.6 A7.6 7.6 0 1 1 14.4 3.6" stroke="#2c3b48" stroke-width="1.6" fill="none" stroke-linecap="round"/><path d="M16.5 1.5 L16.6 6.5 L11.8 5.8 Z" fill="#2c3b48"/><path d="M8.7 4.2 L8.7 9.2 L11.2 12" stroke="#2c3b48" stroke-width="1.4" fill="none"/></svg><div class="a t" style="left:1813px;top:195px;height:25px;line-height:25px;padding-top:2px;letter-spacing:0.000px;width:266px;overflow:hidden;">ЦП PPT Limit</div><div class="a t" style="right:399px;top:195px;height:25px;line-height:25px;text-align:right;padding-top:2px;">90.6 %</div><div class="a t" style="right:279px;top:195px;height:25px;line-height:25px;text-align:right;padding-top:2px;">9.3 %</div><div class="a t" style="right:159px;top:195px;height:25px;line-height:25px;text-align:right;padding-top:2px;">100.1 %</div><div class="a t" style="right:39px;top:195px;height:25px;line-height:25px;text-align:right;padding-top:2px;">56.7 %</div><div class="a" style="left:1788px;top:221px;width:23px;height:25px;background:#fdfdfd;border-bottom:1px solid #ececec;box-sizing:border-box"></div><div class="a" style="left:2081px;top:221px;width:119px;height:24px;background:#cfe4f9"></div><svg style="position:absolute;left:1791px;top:224px" width="18" height="18" viewBox="0 0 18 18" ><path d="M15.4 12.6 A7.6 7.6 0 1 1 14.4 3.6" stroke="#2c3b48" stroke-width="1.6" fill="none" stroke-linecap="round"/><path d="M16.5 1.5 L16.6 6.5 L11.8 5.8 Z" fill="#2c3b48"/><path d="M8.7 4.2 L8.7 9.2 L11.2 12" stroke="#2c3b48" stroke-width="1.4" fill="none"/></svg><div class="a t" style="left:1813px;top:220px;height:25px;line-height:25px;padding-top:2px;letter-spacing:0.000px;width:266px;overflow:hidden;">Предел TDC ЦП</div><div class="a t" style="right:399px;top:220px;height:25px;line-height:25px;text-align:right;padding-top:2px;">84.3 %</div><div class="a t" style="right:279px;top:220px;height:25px;line-height:25px;text-align:right;padding-top:2px;">0.7 %</div><div class="a t" style="right:159px;top:220px;height:25px;line-height:25px;text-align:right;padding-top:2px;">95.4 %</div><div class="a t" style="right:39px;top:220px;height:25px;line-height:25px;text-align:right;padding-top:2px;">46.8 %</div><div class="a" style="left:1788px;top:246px;width:23px;height:25px;background:#fdfdfd;border-bottom:1px solid #ececec;box-sizing:border-box"></div><div class="a" style="left:1811px;top:246px;width:749px;height:25px;background:#f0f0f0"></div><div class="a" style="left:2081px;top:246px;width:119px;height:24px;background:#cfe4f9"></div><svg style="position:absolute;left:1791px;top:249px" width="18" height="18" viewBox="0 0 18 18" ><path d="M15.4 12.6 A7.6 7.6 0 1 1 14.4 3.6" stroke="#2c3b48" stroke-width="1.6" fill="none" stroke-linecap="round"/><path d="M16.5 1.5 L16.6 6.5 L11.8 5.8 Z" fill="#2c3b48"/><path d="M8.7 4.2 L8.7 9.2 L11.2 12" stroke="#2c3b48" stroke-width="1.4" fill="none"/></svg><div class="a t" style="left:1813px;top:245px;height:25px;line-height:25px;padding-top:2px;letter-spacing:0.000px;width:266px;overflow:hidden;">Предел EDC ЦП</div><div class="a t" style="right:399px;top:245px;height:25px;line-height:25px;text-align:right;padding-top:2px;">77.1 %</div><div class="a t" style="right:279px;top:245px;height:25px;line-height:25px;text-align:right;padding-top:2px;">4.9 %</div><div class="a t" style="right:159px;top:245px;height:25px;line-height:25px;text-align:right;padding-top:2px;">84.4 %</div><div class="a t" style="right:39px;top:245px;height:25px;line-height:25px;text-align:right;padding-top:2px;">48.4 %</div><div class="a" style="left:1788px;top:271px;width:23px;height:25px;background:#fdfdfd;border-bottom:1px solid #ececec;box-sizing:border-box"></div><div class="a" style="left:2081px;top:271px;width:119px;height:24px;background:#cfe4f9"></div><svg style="position:absolute;left:1791px;top:274px" width="18" height="18" viewBox="0 0 18 18" ><path d="M15.4 12.6 A7.6 7.6 0 1 1 14.4 3.6" stroke="#2c3b48" stroke-width="1.6" fill="none" stroke-linecap="round"/><path d="M16.5 1.5 L16.6 6.5 L11.8 5.8 Z" fill="#2c3b48"/><path d="M8.7 4.2 L8.7 9.2 L11.2 12" stroke="#2c3b48" stroke-width="1.4" fill="none"/></svg><div class="a t" style="left:1813px;top:270px;height:25px;line-height:25px;padding-top:2px;letter-spacing:0.000px;width:266px;overflow:hidden;">ЦП PPT FAST Limit</div><div class="a t" style="right:399px;top:270px;height:25px;line-height:25px;text-align:right;padding-top:2px;">90.6 %</div><div class="a t" style="right:279px;top:270px;height:25px;line-height:25px;text-align:right;padding-top:2px;">9.3 %</div><div class="a t" style="right:159px;top:270px;height:25px;line-height:25px;text-align:right;padding-top:2px;">100.1 %</div><div class="a t" style="right:39px;top:270px;height:25px;line-height:25px;text-align:right;padding-top:2px;">56.7 %</div><div class="a" style="left:1788px;top:296px;width:23px;height:25px;background:#fdfdfd;border-bottom:1px solid #ececec;box-sizing:border-box"></div><div class="a" style="left:1811px;top:296px;width:749px;height:25px;background:#f0f0f0"></div><div class="a" style="left:2081px;top:296px;width:119px;height:24px;background:#cfe4f9"></div><svg style="position:absolute;left:1791px;top:299px" width="18" height="18" viewBox="0 0 18 18" ><path d="M15.4 12.6 A7.6 7.6 0 1 1 14.4 3.6" stroke="#2c3b48" stroke-width="1.6" fill="none" stroke-linecap="round"/><path d="M16.5 1.5 L16.6 6.5 L11.8 5.8 Z" fill="#2c3b48"/><path d="M8.7 4.2 L8.7 9.2 L11.2 12" stroke="#2c3b48" stroke-width="1.4" fill="none"/></svg><div class="a t" style="left:1813px;top:295px;height:25px;line-height:25px;padding-top:2px;letter-spacing:0.000px;width:266px;overflow:hidden;">Thermal Limit</div><div class="a t" style="right:399px;top:295px;height:25px;line-height:25px;text-align:right;padding-top:2px;">81.6 %</div><div class="a t" style="right:279px;top:295px;height:25px;line-height:25px;text-align:right;padding-top:2px;">43.3 %</div><div class="a t" style="right:159px;top:295px;height:25px;line-height:25px;text-align:right;padding-top:2px;">83.8 %</div><div class="a t" style="right:39px;top:295px;height:25px;line-height:25px;text-align:right;padding-top:2px;">68.3 %</div><div class="a" style="left:1788px;top:321px;width:23px;height:25px;background:#fdfdfd;border-bottom:1px solid #ececec;box-sizing:border-box"></div><svg style="position:absolute;left:1791px;top:324px" width="18" height="18" viewBox="0 0 18 18" ><path d="M15.4 12.6 A7.6 7.6 0 1 1 14.4 3.6" stroke="#2c3b48" stroke-width="1.6" fill="none" stroke-linecap="round"/><path d="M16.5 1.5 L16.6 6.5 L11.8 5.8 Z" fill="#2c3b48"/><path d="M8.7 4.2 L8.7 9.2 L11.2 12" stroke="#2c3b48" stroke-width="1.4" fill="none"/></svg><div class="a t" style="left:1813px;top:320px;height:25px;line-height:25px;padding-top:2px;letter-spacing:0.000px;width:266px;overflow:hidden;">Тепловой троттлинг (HTC)</div><div class="a t" style="right:399px;top:320px;height:25px;line-height:25px;text-align:right;padding-top:2px;">Нет</div><div class="a t" style="right:279px;top:320px;height:25px;line-height:25px;text-align:right;padding-top:2px;">Нет</div><div class="a t" style="right:159px;top:320px;height:25px;line-height:25px;text-align:right;padding-top:2px;">Нет</div><div class="a t" style="right:39px;top:320px;height:25px;line-height:25px;text-align:right;padding-top:2px;">0 %</div><div class="a" style="left:1788px;top:346px;width:23px;height:25px;background:#fdfdfd;border-bottom:1px solid #ececec;box-sizing:border-box"></div><div class="a" style="left:1811px;top:346px;width:749px;height:25px;background:#f0f0f0"></div><svg style="position:absolute;left:1791px;top:349px" width="18" height="18" viewBox="0 0 18 18" ><path d="M15.4 12.6 A7.6 7.6 0 1 1 14.4 3.6" stroke="#2c3b48" stroke-width="1.6" fill="none" stroke-linecap="round"/><path d="M16.5 1.5 L16.6 6.5 L11.8 5.8 Z" fill="#2c3b48"/><path d="M8.7 4.2 L8.7 9.2 L11.2 12" stroke="#2c3b48" stroke-width="1.4" fill="none"/></svg><div class="a t" style="left:1813px;top:345px;height:25px;line-height:25px;padding-top:2px;letter-spacing:0.073px;width:266px;overflow:hidden;">Тепловой троттлинг (PROCHOT ...</div><div class="a t" style="right:399px;top:345px;height:25px;line-height:25px;text-align:right;padding-top:2px;">Нет</div><div class="a t" style="right:279px;top:345px;height:25px;line-height:25px;text-align:right;padding-top:2px;">Нет</div><div class="a t" style="right:159px;top:345px;height:25px;line-height:25px;text-align:right;padding-top:2px;">Нет</div><div class="a t" style="right:39px;top:345px;height:25px;line-height:25px;text-align:right;padding-top:2px;">0 %</div><div class="a" style="left:1788px;top:371px;width:23px;height:25px;background:#fdfdfd;border-bottom:1px solid #ececec;box-sizing:border-box"></div><svg style="position:absolute;left:1791px;top:374px" width="18" height="18" viewBox="0 0 18 18" ><path d="M15.4 12.6 A7.6 7.6 0 1 1 14.4 3.6" stroke="#2c3b48" stroke-width="1.6" fill="none" stroke-linecap="round"/><path d="M16.5 1.5 L16.6 6.5 L11.8 5.8 Z" fill="#2c3b48"/><path d="M8.7 4.2 L8.7 9.2 L11.2 12" stroke="#2c3b48" stroke-width="1.4" fill="none"/></svg><div class="a t" style="left:1813px;top:370px;height:25px;line-height:25px;padding-top:2px;letter-spacing:0.073px;width:266px;overflow:hidden;">Тепловой троттлинг (PROCHOT ...</div><div class="a t" style="right:399px;top:370px;height:25px;line-height:25px;text-align:right;padding-top:2px;">Нет</div><div class="a t" style="right:279px;top:370px;height:25px;line-height:25px;text-align:right;padding-top:2px;">Нет</div><div class="a t" style="right:159px;top:370px;height:25px;line-height:25px;text-align:right;padding-top:2px;">Нет</div><div class="a t" style="right:39px;top:370px;height:25px;line-height:25px;text-align:right;padding-top:2px;">0 %</div><div class="a" style="left:1788px;top:396px;width:23px;height:25px;background:#fdfdfd;border-bottom:1px solid #ececec;box-sizing:border-box"></div><div class="a" style="left:1811px;top:396px;width:749px;height:25px;background:#f0f0f0"></div><div class="a" style="left:2081px;top:396px;width:119px;height:24px;background:#cfe4f9"></div><svg style="position:absolute;left:1791px;top:399px" width="18" height="18" viewBox="0 0 18 18" ><path d="M15.4 12.6 A7.6 7.6 0 1 1 14.4 3.6" stroke="#2c3b48" stroke-width="1.6" fill="none" stroke-linecap="round"/><path d="M16.5 1.5 L16.6 6.5 L11.8 5.8 Z" fill="#2c3b48"/><path d="M8.7 4.2 L8.7 9.2 L11.2 12" stroke="#2c3b48" stroke-width="1.4" fill="none"/></svg><div class="a t" style="left:1813px;top:395px;height:25px;line-height:25px;padding-top:2px;letter-spacing:0.004px;width:266px;overflow:hidden;">Пропускная способность чтения ...</div><div class="a t" style="right:399px;top:395px;height:25px;line-height:25px;text-align:right;padding-top:2px;">20.334 GB/s</div><div class="a t" style="right:279px;top:395px;height:25px;line-height:25px;text-align:right;padding-top:2px;">0.199 GB/s</div><div class="a t" style="right:159px;top:395px;height:25px;line-height:25px;text-align:right;padding-top:2px;">23.665 GB/s</div><div class="a t" style="right:39px;top:395px;height:25px;line-height:25px;text-align:right;padding-top:2px;">11.057 GB/s</div><div class="a" style="left:1788px;top:421px;width:23px;height:25px;background:#fdfdfd;border-bottom:1px solid #ececec;box-sizing:border-box"></div><div class="a" style="left:2081px;top:421px;width:119px;height:24px;background:#cfe4f9"></div><svg style="position:absolute;left:1791px;top:424px" width="18" height="18" viewBox="0 0 18 18" ><path d="M15.4 12.6 A7.6 7.6 0 1 1 14.4 3.6" stroke="#2c3b48" stroke-width="1.6" fill="none" stroke-linecap="round"/><path d="M16.5 1.5 L16.6 6.5 L11.8 5.8 Z" fill="#2c3b48"/><path d="M8.7 4.2 L8.7 9.2 L11.2 12" stroke="#2c3b48" stroke-width="1.4" fill="none"/></svg><div class="a t" style="left:1813px;top:420px;height:25px;line-height:25px;padding-top:2px;letter-spacing:-0.055px;width:266px;overflow:hidden;">Пропускная способность записи ...</div><div class="a t" style="right:399px;top:420px;height:25px;line-height:25px;text-align:right;padding-top:2px;">7.043 GB/s</div><div class="a t" style="right:279px;top:420px;height:25px;line-height:25px;text-align:right;padding-top:2px;">0.036 GB/s</div><div class="a t" style="right:159px;top:420px;height:25px;line-height:25px;text-align:right;padding-top:2px;">15.987 GB/s</div><div class="a t" style="right:39px;top:420px;height:25px;line-height:25px;text-align:right;padding-top:2px;">4.509 GB/s</div><div class="a" style="left:1788px;top:446px;width:23px;height:25px;background:#fdfdfd;border-bottom:1px solid #ececec;box-sizing:border-box"></div><div class="a" style="left:1811px;top:446px;width:749px;height:25px;background:#f0f0f0"></div><svg style="position:absolute;left:1791px;top:449px" width="18" height="18" viewBox="0 0 18 18" ><path d="M15.4 12.6 A7.6 7.6 0 1 1 14.4 3.6" stroke="#2c3b48" stroke-width="1.6" fill="none" stroke-linecap="round"/><path d="M16.5 1.5 L16.6 6.5 L11.8 5.8 Z" fill="#2c3b48"/><path d="M8.7 4.2 L8.7 9.2 L11.2 12" stroke="#2c3b48" stroke-width="1.4" fill="none"/></svg><div class="a t" style="left:1813px;top:445px;height:25px;line-height:25px;padding-top:2px;letter-spacing:-0.128px;width:266px;overflow:hidden;">Среднее количество активных ядер</div><div class="a t" style="right:399px;top:445px;height:25px;line-height:25px;text-align:right;padding-top:2px;">16.0 </div><div class="a t" style="right:279px;top:445px;height:25px;line-height:25px;text-align:right;padding-top:2px;">0.4 </div><div class="a t" style="right:159px;top:445px;height:25px;line-height:25px;text-align:right;padding-top:2px;">16.0 </div><div class="a t" style="right:39px;top:445px;height:25px;line-height:25px;text-align:right;padding-top:2px;">8.6 </div><div class="a" style="left:1788px;top:496px;width:24px;height:25px;background:#fdfdfd;border-bottom:1px solid #ececec;box-sizing:border-box"></div><div class="a" style="left:1812px;top:496px;width:748px;height:24px;background:#d9d9d9"></div><svg style="position:absolute;left:1764px;top:503px" width="18" height="10" viewBox="0 0 18 10" ><path d="M0.7 0.9 L9 9.2 L17.3 0.9" stroke="#3a3a3a" stroke-width="1.5" fill="none"/></svg><svg style="position:absolute;left:1791.5px;top:498px" width="17" height="21" viewBox="0 0 17 21" ><defs><linearGradient id="chg" x1="0" y1="0" x2="0" y2="1"><stop offset="0" stop-color="#727477"/><stop offset="1" stop-color="#3c3c3c"/></linearGradient></defs><ellipse cx="1.3" cy="4.1000000000000005" rx="0.9" ry="1.0" fill="#9a9a9a"/><ellipse cx="15.7" cy="4.1000000000000005" rx="0.9" ry="1.0" fill="#9a9a9a"/><ellipse cx="1.3" cy="8.7" rx="0.9" ry="1.0" fill="#9a9a9a"/><ellipse cx="15.7" cy="8.7" rx="0.9" ry="1.0" fill="#9a9a9a"/><ellipse cx="1.3" cy="13.200000000000001" rx="0.9" ry="1.0" fill="#9a9a9a"/><ellipse cx="15.7" cy="13.200000000000001" rx="0.9" ry="1.0" fill="#9a9a9a"/><ellipse cx="1.3" cy="17.7" rx="0.9" ry="1.0" fill="#9a9a9a"/><ellipse cx="15.7" cy="17.7" rx="0.9" ry="1.0" fill="#9a9a9a"/><rect x="2.5" y="0" width="11.8" height="20.5" rx="1" fill="url(#chg)"/><path d="M6 0 L8.4 2.2 L10.8 0" fill="none" stroke="#9a9c9f" stroke-width="0.9"/></svg><div class="a t" style="left:1814px;top:495px;height:25px;line-height:25px;font-weight:bold;font-size:17px;padding-top:2px;letter-spacing:0.2px;-webkit-text-stroke:0;">MSI MAG B850 TOMAHAWK MAX WIFI (MS-7E62) (Nuvoton NCT6687D)</div><div class="a" style="left:1788px;top:521px;width:23px;height:25px;background:#fdfdfd;border-bottom:1px solid #ececec;box-sizing:border-box"></div><div class="a" style="left:2081px;top:521px;width:119px;height:24px;background:#cfe4f9"></div><svg style="position:absolute;left:1796px;top:523px" width="8" height="21" viewBox="0 0 8 21" ><rect x="2.2" y="0.5" width="3.4" height="17" rx="1.7" fill="#e0e0e0"/><rect x="2.4" y="6.5" width="3" height="11" fill="#d42222"/><circle cx="3.9" cy="17.3" r="3.0" fill="#dd1f1f"/></svg><div class="a t" style="left:1813px;top:520px;height:25px;line-height:25px;padding-top:2px;letter-spacing:0.000px;width:266px;overflow:hidden;">ЦП</div><div class="a t" style="right:399px;top:520px;height:25px;line-height:25px;text-align:right;padding-top:2px;">78.0 °C</div><div class="a t" style="right:279px;top:520px;height:25px;line-height:25px;text-align:right;padding-top:2px;">41.0 °C</div><div class="a t" style="right:159px;top:520px;height:25px;line-height:25px;text-align:right;padding-top:2px;">80.0 °C</div><div class="a t" style="right:39px;top:520px;height:25px;line-height:25px;text-align:right;padding-top:2px;">66.7 °C</div><div class="a" style="left:1788px;top:546px;width:23px;height:25px;background:#fdfdfd;border-bottom:1px solid #ececec;box-sizing:border-box"></div><div class="a" style="left:1811px;top:546px;width:749px;height:25px;background:#f0f0f0"></div><div class="a" style="left:2081px;top:546px;width:119px;height:24px;background:#cfe4f9"></div><svg style="position:absolute;left:1796px;top:548px" width="8" height="21" viewBox="0 0 8 21" ><rect x="2.2" y="0.5" width="3.4" height="17" rx="1.7" fill="#e0e0e0"/><rect x="2.4" y="6.5" width="3" height="11" fill="#d42222"/><circle cx="3.9" cy="17.3" r="3.0" fill="#dd1f1f"/></svg><div class="a t" style="left:1813px;top:545px;height:25px;line-height:25px;padding-top:2px;letter-spacing:0.000px;width:266px;overflow:hidden;">Система</div><div class="a t" style="right:399px;top:545px;height:25px;line-height:25px;text-align:right;padding-top:2px;">45.5 °C</div><div class="a t" style="right:279px;top:545px;height:25px;line-height:25px;text-align:right;padding-top:2px;">41.0 °C</div><div class="a t" style="right:159px;top:545px;height:25px;line-height:25px;text-align:right;padding-top:2px;">46.0 °C</div><div class="a t" style="right:39px;top:545px;height:25px;line-height:25px;text-align:right;padding-top:2px;">43.0 °C</div><div class="a" style="left:1788px;top:571px;width:23px;height:25px;background:#fdfdfd;border-bottom:1px solid #ececec;box-sizing:border-box"></div><svg style="position:absolute;left:1796px;top:573px" width="8" height="21" viewBox="0 0 8 21" ><rect x="2.2" y="0.5" width="3.4" height="17" rx="1.7" fill="#e0e0e0"/><rect x="2.4" y="6.5" width="3" height="11" fill="#d42222"/><circle cx="3.9" cy="17.3" r="3.0" fill="#dd1f1f"/></svg><div class="a t" style="left:1813px;top:570px;height:25px;line-height:25px;padding-top:2px;letter-spacing:0.000px;width:266px;overflow:hidden;">MOS</div><div class="a t" style="right:399px;top:570px;height:25px;line-height:25px;text-align:right;padding-top:2px;">51.5 °C</div><div class="a t" style="right:279px;top:570px;height:25px;line-height:25px;text-align:right;padding-top:2px;">36.0 °C</div><div class="a t" style="right:159px;top:570px;height:25px;line-height:25px;text-align:right;padding-top:2px;">51.5 °C</div><div class="a t" style="right:39px;top:570px;height:25px;line-height:25px;text-align:right;padding-top:2px;">44.1 °C</div><div class="a" style="left:1788px;top:596px;width:23px;height:25px;background:#fdfdfd;border-bottom:1px solid #ececec;box-sizing:border-box"></div><div class="a" style="left:1811px;top:596px;width:749px;height:25px;background:#f0f0f0"></div><svg style="position:absolute;left:1796px;top:598px" width="8" height="21" viewBox="0 0 8 21" ><rect x="2.2" y="0.5" width="3.4" height="17" rx="1.7" fill="#e0e0e0"/><rect x="2.4" y="6.5" width="3" height="11" fill="#d42222"/><circle cx="3.9" cy="17.3" r="3.0" fill="#dd1f1f"/></svg><div class="a t" style="left:1813px;top:595px;height:25px;line-height:25px;padding-top:2px;letter-spacing:0.000px;width:266px;overflow:hidden;">Чипсет A</div><div class="a t" style="right:399px;top:595px;height:25px;line-height:25px;text-align:right;padding-top:2px;">45.0 °C</div><div class="a t" style="right:279px;top:595px;height:25px;line-height:25px;text-align:right;padding-top:2px;">40.0 °C</div><div class="a t" style="right:159px;top:595px;height:25px;line-height:25px;text-align:right;padding-top:2px;">45.0 °C</div><div class="a t" style="right:39px;top:595px;height:25px;line-height:25px;text-align:right;padding-top:2px;">41.6 °C</div><div class="a" style="left:1788px;top:621px;width:23px;height:25px;background:#fdfdfd;border-bottom:1px solid #ececec;box-sizing:border-box"></div><svg style="position:absolute;left:1796px;top:623px" width="8" height="21" viewBox="0 0 8 21" ><rect x="2.2" y="0.5" width="3.4" height="17" rx="1.7" fill="#e0e0e0"/><rect x="2.4" y="6.5" width="3" height="11" fill="#d42222"/><circle cx="3.9" cy="17.3" r="3.0" fill="#dd1f1f"/></svg><div class="a t" style="left:1813px;top:620px;height:25px;line-height:25px;padding-top:2px;letter-spacing:0.000px;width:266px;overflow:hidden;">T15</div><div class="a t" style="right:399px;top:620px;height:25px;line-height:25px;text-align:right;padding-top:2px;">51.5 °C</div><div class="a t" style="right:279px;top:620px;height:25px;line-height:25px;text-align:right;padding-top:2px;">36.5 °C</div><div class="a t" style="right:159px;top:620px;height:25px;line-height:25px;text-align:right;padding-top:2px;">51.5 °C</div><div class="a t" style="right:39px;top:620px;height:25px;line-height:25px;text-align:right;padding-top:2px;">44.1 °C</div><div class="a" style="left:1788px;top:646px;width:23px;height:25px;background:#fdfdfd;border-bottom:1px solid #ececec;box-sizing:border-box"></div><div class="a" style="left:1811px;top:646px;width:749px;height:25px;background:#f0f0f0"></div><div class="a" style="left:2081px;top:646px;width:119px;height:24px;background:#cfe4f9"></div><svg style="position:absolute;left:1793px;top:646px" width="14" height="24" viewBox="0 0 14 24" ><path d="M6.7 0.2 L12.8 0.2 L8.1 8.3 L13.2 8.5 L0.2 23.7 L4.7 12.4 L0.2 12.4 Z" fill="#ebb513"/></svg><div class="a t" style="left:1813px;top:645px;height:25px;line-height:25px;padding-top:2px;letter-spacing:0.000px;width:266px;overflow:hidden;">+12В</div><div class="a t" style="right:399px;top:645px;height:25px;line-height:25px;text-align:right;padding-top:2px;">12.000 В</div><div class="a t" style="right:279px;top:645px;height:25px;line-height:25px;text-align:right;padding-top:2px;">12.000 В</div><div class="a t" style="right:159px;top:645px;height:25px;line-height:25px;text-align:right;padding-top:2px;">12.048 В</div><div class="a t" style="right:39px;top:645px;height:25px;line-height:25px;text-align:right;padding-top:2px;">12.013 В</div><div class="a" style="left:1788px;top:671px;width:23px;height:25px;background:#fdfdfd;border-bottom:1px solid #ececec;box-sizing:border-box"></div><svg style="position:absolute;left:1793px;top:671px" width="14" height="24" viewBox="0 0 14 24" ><path d="M6.7 0.2 L12.8 0.2 L8.1 8.3 L13.2 8.5 L0.2 23.7 L4.7 12.4 L0.2 12.4 Z" fill="#ebb513"/></svg><div class="a t" style="left:1813px;top:670px;height:25px;line-height:25px;padding-top:2px;letter-spacing:0.000px;width:266px;overflow:hidden;">+5В</div><div class="a t" style="right:399px;top:670px;height:25px;line-height:25px;text-align:right;padding-top:2px;">5.040 В</div><div class="a t" style="right:279px;top:670px;height:25px;line-height:25px;text-align:right;padding-top:2px;">5.030 В</div><div class="a t" style="right:159px;top:670px;height:25px;line-height:25px;text-align:right;padding-top:2px;">5.050 В</div><div class="a t" style="right:39px;top:670px;height:25px;line-height:25px;text-align:right;padding-top:2px;">5.044 В</div><div class="a" style="left:1788px;top:696px;width:23px;height:25px;background:#fdfdfd;border-bottom:1px solid #ececec;box-sizing:border-box"></div><div class="a" style="left:1811px;top:696px;width:749px;height:25px;background:#f0f0f0"></div><div class="a" style="left:2081px;top:696px;width:119px;height:24px;background:#cfe4f9"></div><svg style="position:absolute;left:1793px;top:696px" width="14" height="24" viewBox="0 0 14 24" ><path d="M6.7 0.2 L12.8 0.2 L8.1 8.3 L13.2 8.5 L0.2 23.7 L4.7 12.4 L0.2 12.4 Z" fill="#ebb513"/></svg><div class="a t" style="left:1813px;top:695px;height:25px;line-height:25px;padding-top:2px;letter-spacing:0.000px;width:266px;overflow:hidden;">ЦП NB/SoC</div><div class="a t" style="right:399px;top:695px;height:25px;line-height:25px;text-align:right;padding-top:2px;">0.926 В</div><div class="a t" style="right:279px;top:695px;height:25px;line-height:25px;text-align:right;padding-top:2px;">0.918 В</div><div class="a t" style="right:159px;top:695px;height:25px;line-height:25px;text-align:right;padding-top:2px;">0.962 В</div><div class="a t" style="right:39px;top:695px;height:25px;line-height:25px;text-align:right;padding-top:2px;">0.943 В</div><div class="a" style="left:1788px;top:721px;width:23px;height:25px;background:#fdfdfd;border-bottom:1px solid #ececec;box-sizing:border-box"></div><svg style="position:absolute;left:1793px;top:721px" width="14" height="24" viewBox="0 0 14 24" ><path d="M6.7 0.2 L12.8 0.2 L8.1 8.3 L13.2 8.5 L0.2 23.7 L4.7 12.4 L0.2 12.4 Z" fill="#ebb513"/></svg><div class="a t" style="left:1813px;top:720px;height:25px;line-height:25px;padding-top:2px;letter-spacing:0.000px;width:266px;overflow:hidden;">ЦП VDDIO</div><div class="a t" style="right:399px;top:720px;height:25px;line-height:25px;text-align:right;padding-top:2px;">1.120 В</div><div class="a t" style="right:279px;top:720px;height:25px;line-height:25px;text-align:right;padding-top:2px;">1.120 В</div><div class="a t" style="right:159px;top:720px;height:25px;line-height:25px;text-align:right;padding-top:2px;">1.124 В</div><div class="a t" style="right:39px;top:720px;height:25px;line-height:25px;text-align:right;padding-top:2px;">1.121 В</div><div class="a" style="left:1788px;top:746px;width:23px;height:25px;background:#fdfdfd;border-bottom:1px solid #ececec;box-sizing:border-box"></div><div class="a" style="left:1811px;top:746px;width:749px;height:25px;background:#f0f0f0"></div><svg style="position:absolute;left:1793px;top:746px" width="14" height="24" viewBox="0 0 14 24" ><path d="M6.7 0.2 L12.8 0.2 L8.1 8.3 L13.2 8.5 L0.2 23.7 L4.7 12.4 L0.2 12.4 Z" fill="#ebb513"/></svg><div class="a t" style="left:1813px;top:745px;height:25px;line-height:25px;padding-top:2px;letter-spacing:0.000px;width:266px;overflow:hidden;">Vcore</div><div class="a t" style="right:399px;top:745px;height:25px;line-height:25px;text-align:right;padding-top:2px;">1.190 В</div><div class="a t" style="right:279px;top:745px;height:25px;line-height:25px;text-align:right;padding-top:2px;">0.818 В</div><div class="a t" style="right:159px;top:745px;height:25px;line-height:25px;text-align:right;padding-top:2px;">1.376 В</div><div class="a t" style="right:39px;top:745px;height:25px;line-height:25px;text-align:right;padding-top:2px;">1.258 В</div><div class="a" style="left:1788px;top:771px;width:23px;height:25px;background:#fdfdfd;border-bottom:1px solid #ececec;box-sizing:border-box"></div><svg style="position:absolute;left:1793px;top:771px" width="14" height="24" viewBox="0 0 14 24" ><path d="M6.7 0.2 L12.8 0.2 L8.1 8.3 L13.2 8.5 L0.2 23.7 L4.7 12.4 L0.2 12.4 Z" fill="#ebb513"/></svg><div class="a t" style="left:1813px;top:770px;height:25px;line-height:25px;padding-top:2px;letter-spacing:0.000px;width:266px;overflow:hidden;">+3.3В</div><div class="a t" style="right:399px;top:770px;height:25px;line-height:25px;text-align:right;padding-top:2px;">3.316 В</div><div class="a t" style="right:279px;top:770px;height:25px;line-height:25px;text-align:right;padding-top:2px;">3.308 В</div><div class="a t" style="right:159px;top:770px;height:25px;line-height:25px;text-align:right;padding-top:2px;">3.320 В</div><div class="a t" style="right:39px;top:770px;height:25px;line-height:25px;text-align:right;padding-top:2px;">3.316 В</div><div class="a" style="left:1788px;top:796px;width:23px;height:25px;background:#fdfdfd;border-bottom:1px solid #ececec;box-sizing:border-box"></div><div class="a" style="left:1811px;top:796px;width:749px;height:25px;background:#f0f0f0"></div><svg style="position:absolute;left:1793px;top:796px" width="14" height="24" viewBox="0 0 14 24" ><path d="M6.7 0.2 L12.8 0.2 L8.1 8.3 L13.2 8.5 L0.2 23.7 L4.7 12.4 L0.2 12.4 Z" fill="#ebb513"/></svg><div class="a t" style="left:1813px;top:795px;height:25px;line-height:25px;padding-top:2px;letter-spacing:0.000px;width:266px;overflow:hidden;">3VSB</div><div class="a t" style="right:399px;top:795px;height:25px;line-height:25px;text-align:right;padding-top:2px;">3.376 В</div><div class="a t" style="right:279px;top:795px;height:25px;line-height:25px;text-align:right;padding-top:2px;">3.372 В</div><div class="a t" style="right:159px;top:795px;height:25px;line-height:25px;text-align:right;padding-top:2px;">3.380 В</div><div class="a t" style="right:39px;top:795px;height:25px;line-height:25px;text-align:right;padding-top:2px;">3.377 В</div><div class="a" style="left:1788px;top:821px;width:23px;height:25px;background:#fdfdfd;border-bottom:1px solid #ececec;box-sizing:border-box"></div><svg style="position:absolute;left:1793px;top:821px" width="14" height="24" viewBox="0 0 14 24" ><path d="M6.7 0.2 L12.8 0.2 L8.1 8.3 L13.2 8.5 L0.2 23.7 L4.7 12.4 L0.2 12.4 Z" fill="#ebb513"/></svg><div class="a t" style="left:1813px;top:820px;height:25px;line-height:25px;padding-top:2px;letter-spacing:0.000px;width:266px;overflow:hidden;">AVSB</div><div class="a t" style="right:399px;top:820px;height:25px;line-height:25px;text-align:right;padding-top:2px;">3.376 В</div><div class="a t" style="right:279px;top:820px;height:25px;line-height:25px;text-align:right;padding-top:2px;">3.372 В</div><div class="a t" style="right:159px;top:820px;height:25px;line-height:25px;text-align:right;padding-top:2px;">3.380 В</div><div class="a t" style="right:39px;top:820px;height:25px;line-height:25px;text-align:right;padding-top:2px;">3.376 В</div><div class="a" style="left:1788px;top:846px;width:23px;height:25px;background:#fdfdfd;border-bottom:1px solid #ececec;box-sizing:border-box"></div><div class="a" style="left:1811px;top:846px;width:749px;height:25px;background:#f0f0f0"></div><svg style="position:absolute;left:1793px;top:846px" width="14" height="24" viewBox="0 0 14 24" ><path d="M6.7 0.2 L12.8 0.2 L8.1 8.3 L13.2 8.5 L0.2 23.7 L4.7 12.4 L0.2 12.4 Z" fill="#ebb513"/></svg><div class="a t" style="left:1813px;top:845px;height:25px;line-height:25px;padding-top:2px;letter-spacing:0.000px;width:266px;overflow:hidden;">VTT</div><div class="a t" style="right:399px;top:845px;height:25px;line-height:25px;text-align:right;padding-top:2px;">2.044 В</div><div class="a t" style="right:279px;top:845px;height:25px;line-height:25px;text-align:right;padding-top:2px;">2.044 В</div><div class="a t" style="right:159px;top:845px;height:25px;line-height:25px;text-align:right;padding-top:2px;">2.044 В</div><div class="a t" style="right:39px;top:845px;height:25px;line-height:25px;text-align:right;padding-top:2px;">2.044 В</div><div class="a" style="left:1788px;top:871px;width:23px;height:25px;background:#fdfdfd;border-bottom:1px solid #ececec;box-sizing:border-box"></div><div class="a" style="left:2081px;top:871px;width:119px;height:24px;background:#cfe4f9"></div><svg style="position:absolute;left:1793px;top:871px" width="14" height="24" viewBox="0 0 14 24" ><path d="M6.7 0.2 L12.8 0.2 L8.1 8.3 L13.2 8.5 L0.2 23.7 L4.7 12.4 L0.2 12.4 Z" fill="#ebb513"/></svg><div class="a t" style="left:1813px;top:870px;height:25px;line-height:25px;padding-top:2px;letter-spacing:0.000px;width:266px;overflow:hidden;">VBAT</div><div class="a t" style="right:399px;top:870px;height:25px;line-height:25px;text-align:right;padding-top:2px;">3.200 В</div><div class="a t" style="right:279px;top:870px;height:25px;line-height:25px;text-align:right;padding-top:2px;">3.196 В</div><div class="a t" style="right:159px;top:870px;height:25px;line-height:25px;text-align:right;padding-top:2px;">3.200 В</div><div class="a t" style="right:39px;top:870px;height:25px;line-height:25px;text-align:right;padding-top:2px;">3.198 В</div><div class="a" style="left:1788px;top:896px;width:23px;height:25px;background:#fdfdfd;border-bottom:1px solid #ececec;box-sizing:border-box"></div><div class="a" style="left:1811px;top:896px;width:749px;height:25px;background:#f0f0f0"></div><div class="a" style="left:2081px;top:896px;width:119px;height:24px;background:#cfe4f9"></div><svg style="position:absolute;left:1793px;top:896px" width="14" height="24" viewBox="0 0 14 24" ><path d="M6.7 0.2 L12.8 0.2 L8.1 8.3 L13.2 8.5 L0.2 23.7 L4.7 12.4 L0.2 12.4 Z" fill="#ebb513"/></svg><div class="a t" style="left:1813px;top:895px;height:25px;line-height:25px;padding-top:2px;letter-spacing:0.000px;width:266px;overflow:hidden;">VREF</div><div class="a t" style="right:399px;top:895px;height:25px;line-height:25px;text-align:right;padding-top:2px;">1.832 В</div><div class="a t" style="right:279px;top:895px;height:25px;line-height:25px;text-align:right;padding-top:2px;">1.828 В</div><div class="a t" style="right:159px;top:895px;height:25px;line-height:25px;text-align:right;padding-top:2px;">1.832 В</div><div class="a t" style="right:39px;top:895px;height:25px;line-height:25px;text-align:right;padding-top:2px;">1.832 В</div><div class="a" style="left:1788px;top:921px;width:23px;height:25px;background:#fdfdfd;border-bottom:1px solid #ececec;box-sizing:border-box"></div><svg style="position:absolute;left:1789px;top:922px" width="20" height="20" viewBox="0 0 20 20" ><g fill="#1e1e1e"><ellipse cx="10" cy="3.6" rx="4" ry="3.2"/><ellipse cx="10" cy="16.4" rx="4" ry="3.2"/><ellipse cx="3.6" cy="10" rx="3.2" ry="4"/><ellipse cx="16.4" cy="10" rx="3.2" ry="4"/><circle cx="10" cy="10" r="2.6"/></g></svg><div class="a t" style="left:1813px;top:920px;height:25px;line-height:25px;padding-top:2px;letter-spacing:0.000px;width:266px;overflow:hidden;">PUMP SYS1</div><div class="a t" style="right:399px;top:920px;height:25px;line-height:25px;text-align:right;padding-top:2px;">2,771 RPM</div><div class="a t" style="right:279px;top:920px;height:25px;line-height:25px;text-align:right;padding-top:2px;">2,434 RPM</div><div class="a t" style="right:159px;top:920px;height:25px;line-height:25px;text-align:right;padding-top:2px;">2,784 RPM</div><div class="a t" style="right:39px;top:920px;height:25px;line-height:25px;text-align:right;padding-top:2px;">2,668 RPM</div><div class="a" style="left:1788px;top:946px;width:23px;height:25px;background:#fdfdfd;border-bottom:1px solid #ececec;box-sizing:border-box"></div><div class="a" style="left:1811px;top:946px;width:749px;height:25px;background:#f0f0f0"></div><div class="a" style="left:2081px;top:946px;width:119px;height:24px;background:#cfe4f9"></div><svg style="position:absolute;left:1789px;top:947px" width="20" height="20" viewBox="0 0 20 20" ><g fill="#1e1e1e"><ellipse cx="10" cy="3.6" rx="4" ry="3.2"/><ellipse cx="10" cy="16.4" rx="4" ry="3.2"/><ellipse cx="3.6" cy="10" rx="3.2" ry="4"/><ellipse cx="16.4" cy="10" rx="3.2" ry="4"/><circle cx="10" cy="10" r="2.6"/></g></svg><div class="a t" style="left:1813px;top:945px;height:25px;line-height:25px;padding-top:2px;letter-spacing:0.000px;width:266px;overflow:hidden;">Система 2</div><div class="a t" style="right:399px;top:945px;height:25px;line-height:25px;text-align:right;padding-top:2px;">1,973 RPM</div><div class="a t" style="right:279px;top:945px;height:25px;line-height:25px;text-align:right;padding-top:2px;">1,666 RPM</div><div class="a t" style="right:159px;top:945px;height:25px;line-height:25px;text-align:right;padding-top:2px;">2,029 RPM</div><div class="a t" style="right:39px;top:945px;height:25px;line-height:25px;text-align:right;padding-top:2px;">1,939 RPM</div><div class="a" style="left:1788px;top:996px;width:24px;height:25px;background:#fdfdfd;border-bottom:1px solid #ececec;box-sizing:border-box"></div><div class="a" style="left:1812px;top:996px;width:748px;height:24px;background:#d9d9d9"></div><svg style="position:absolute;left:1768px;top:999px" width="10" height="18" viewBox="0 0 10 18" ><path d="M0.9 0.7 L9.1 8.9 L0.9 17.1" stroke="#3a3a3a" stroke-width="1.5" fill="none"/></svg><svg style="position:absolute;left:1791.5px;top:998px" width="17" height="21" viewBox="0 0 17 21" ><defs><linearGradient id="chg" x1="0" y1="0" x2="0" y2="1"><stop offset="0" stop-color="#727477"/><stop offset="1" stop-color="#3c3c3c"/></linearGradient></defs><ellipse cx="1.3" cy="4.1000000000000005" rx="0.9" ry="1.0" fill="#9a9a9a"/><ellipse cx="15.7" cy="4.1000000000000005" rx="0.9" ry="1.0" fill="#9a9a9a"/><ellipse cx="1.3" cy="8.7" rx="0.9" ry="1.0" fill="#9a9a9a"/><ellipse cx="15.7" cy="8.7" rx="0.9" ry="1.0" fill="#9a9a9a"/><ellipse cx="1.3" cy="13.200000000000001" rx="0.9" ry="1.0" fill="#9a9a9a"/><ellipse cx="15.7" cy="13.200000000000001" rx="0.9" ry="1.0" fill="#9a9a9a"/><ellipse cx="1.3" cy="17.7" rx="0.9" ry="1.0" fill="#9a9a9a"/><ellipse cx="15.7" cy="17.7" rx="0.9" ry="1.0" fill="#9a9a9a"/><rect x="2.5" y="0" width="11.8" height="20.5" rx="1" fill="url(#chg)"/><path d="M6 0 L8.4 2.2 L10.8 0" fill="none" stroke="#9a9c9f" stroke-width="0.9"/></svg><div class="a t" style="left:1814px;top:995px;height:25px;line-height:25px;font-weight:bold;font-size:17px;padding-top:2px;letter-spacing:0.2px;-webkit-text-stroke:0;">MSI MAG B850 TOMAHAWK MAX WIFI (MS-7E62) (AMD Чипсет)</div><div class="a" style="left:1812px;top:1021px;width:748px;height:25px;background:#f0f0f0"></div><div class="a" style="left:1788px;top:1046px;width:24px;height:25px;background:#fdfdfd;border-bottom:1px solid #ececec;box-sizing:border-box"></div><div class="a" style="left:1812px;top:1046px;width:748px;height:24px;background:#d9d9d9"></div><svg style="position:absolute;left:1768px;top:1049px" width="10" height="18" viewBox="0 0 10 18" ><path d="M0.9 0.7 L9.1 8.9 L0.9 17.1" stroke="#3a3a3a" stroke-width="1.5" fill="none"/></svg><svg style="position:absolute;left:1791.5px;top:1048px" width="17" height="21" viewBox="0 0 17 21" ><defs><linearGradient id="chg" x1="0" y1="0" x2="0" y2="1"><stop offset="0" stop-color="#727477"/><stop offset="1" stop-color="#3c3c3c"/></linearGradient></defs><ellipse cx="1.3" cy="4.1000000000000005" rx="0.9" ry="1.0" fill="#9a9a9a"/><ellipse cx="15.7" cy="4.1000000000000005" rx="0.9" ry="1.0" fill="#9a9a9a"/><ellipse cx="1.3" cy="8.7" rx="0.9" ry="1.0" fill="#9a9a9a"/><ellipse cx="15.7" cy="8.7" rx="0.9" ry="1.0" fill="#9a9a9a"/><ellipse cx="1.3" cy="13.200000000000001" rx="0.9" ry="1.0" fill="#9a9a9a"/><ellipse cx="15.7" cy="13.200000000000001" rx="0.9" ry="1.0" fill="#9a9a9a"/><ellipse cx="1.3" cy="17.7" rx="0.9" ry="1.0" fill="#9a9a9a"/><ellipse cx="15.7" cy="17.7" rx="0.9" ry="1.0" fill="#9a9a9a"/><rect x="2.5" y="0" width="11.8" height="20.5" rx="1" fill="url(#chg)"/><path d="M6 0 L8.4 2.2 L10.8 0" fill="none" stroke="#9a9c9f" stroke-width="0.9"/></svg><div class="a t" style="left:1814px;top:1045px;height:25px;line-height:25px;font-weight:bold;font-size:17px;padding-top:2px;letter-spacing:0.2px;-webkit-text-stroke:0;">NUC126</div><div class="a" style="left:1812px;top:1071px;width:748px;height:25px;background:#f0f0f0"></div><div class="a" style="left:1788px;top:1096px;width:24px;height:25px;background:#fdfdfd;border-bottom:1px solid #ececec;box-sizing:border-box"></div><div class="a" style="left:1812px;top:1096px;width:748px;height:24px;background:#d9d9d9"></div><svg style="position:absolute;left:1764px;top:1103px" width="18" height="10" viewBox="0 0 18 10" ><path d="M0.7 0.9 L9 9.2 L17.3 0.9" stroke="#3a3a3a" stroke-width="1.5" fill="none"/></svg><svg style="position:absolute;left:1791.5px;top:1098px" width="17" height="21" viewBox="0 0 17 21" ><defs><linearGradient id="chg" x1="0" y1="0" x2="0" y2="1"><stop offset="0" stop-color="#727477"/><stop offset="1" stop-color="#3c3c3c"/></linearGradient></defs><ellipse cx="1.3" cy="4.1000000000000005" rx="0.9" ry="1.0" fill="#9a9a9a"/><ellipse cx="15.7" cy="4.1000000000000005" rx="0.9" ry="1.0" fill="#9a9a9a"/><ellipse cx="1.3" cy="8.7" rx="0.9" ry="1.0" fill="#9a9a9a"/><ellipse cx="15.7" cy="8.7" rx="0.9" ry="1.0" fill="#9a9a9a"/><ellipse cx="1.3" cy="13.200000000000001" rx="0.9" ry="1.0" fill="#9a9a9a"/><ellipse cx="15.7" cy="13.200000000000001" rx="0.9" ry="1.0" fill="#9a9a9a"/><ellipse cx="1.3" cy="17.7" rx="0.9" ry="1.0" fill="#9a9a9a"/><ellipse cx="15.7" cy="17.7" rx="0.9" ry="1.0" fill="#9a9a9a"/><rect x="2.5" y="0" width="11.8" height="20.5" rx="1" fill="url(#chg)"/><path d="M6 0 L8.4 2.2 L10.8 0" fill="none" stroke="#9a9c9f" stroke-width="0.9"/></svg><div class="a t" style="left:1814px;top:1095px;height:25px;line-height:25px;font-weight:bold;font-size:17px;padding-top:2px;letter-spacing:0.2px;-webkit-text-stroke:0;">DDR5 DIMM [#0]: A-DATA Technology AX5U6000C4816G-BLABRWH (P0 CHANNEL A/DI...</div><div class="a" style="left:1788px;top:1121px;width:23px;height:25px;background:#fdfdfd;border-bottom:1px solid #ececec;box-sizing:border-box"></div><div class="a" style="left:1811px;top:1121px;width:749px;height:25px;background:#f0f0f0"></div><svg style="position:absolute;left:1796px;top:1123px" width="8" height="21" viewBox="0 0 8 21" ><rect x="2.2" y="0.5" width="3.4" height="17" rx="1.7" fill="#e0e0e0"/><rect x="2.4" y="6.5" width="3" height="11" fill="#d42222"/><circle cx="3.9" cy="17.3" r="3.0" fill="#dd1f1f"/></svg><div class="a t" style="left:1813px;top:1120px;height:25px;line-height:25px;padding-top:2px;letter-spacing:0.000px;width:266px;overflow:hidden;">SPD Hub Температура</div><div class="a t" style="right:399px;top:1120px;height:25px;line-height:25px;text-align:right;padding-top:2px;">47.8 °C</div><div class="a t" style="right:279px;top:1120px;height:25px;line-height:25px;text-align:right;padding-top:2px;">38.0 °C</div><div class="a t" style="right:159px;top:1120px;height:25px;line-height:25px;text-align:right;padding-top:2px;">47.8 °C</div><div class="a t" style="right:39px;top:1120px;height:25px;line-height:25px;text-align:right;padding-top:2px;">41.4 °C</div><div class="a" style="left:1788px;top:1146px;width:23px;height:25px;background:#fdfdfd;border-bottom:1px solid #ececec;box-sizing:border-box"></div><svg style="position:absolute;left:1793px;top:1146px" width="14" height="24" viewBox="0 0 14 24" ><path d="M6.7 0.2 L12.8 0.2 L8.1 8.3 L13.2 8.5 L0.2 23.7 L4.7 12.4 L0.2 12.4 Z" fill="#ebb513"/></svg><div class="a t" style="left:1813px;top:1145px;height:25px;line-height:25px;padding-top:2px;letter-spacing:0.000px;width:266px;overflow:hidden;">VDD (SWA) Напряжение</div><div class="a t" style="right:399px;top:1145px;height:25px;line-height:25px;text-align:right;padding-top:2px;">1.110 В</div><div class="a t" style="right:279px;top:1145px;height:25px;line-height:25px;text-align:right;padding-top:2px;">1.095 В</div><div class="a t" style="right:159px;top:1145px;height:25px;line-height:25px;text-align:right;padding-top:2px;">1.110 В</div><div class="a t" style="right:39px;top:1145px;height:25px;line-height:25px;text-align:right;padding-top:2px;">1.110 В</div><div class="a" style="left:1788px;top:1171px;width:23px;height:25px;background:#fdfdfd;border-bottom:1px solid #ececec;box-sizing:border-box"></div><div class="a" style="left:1811px;top:1171px;width:749px;height:25px;background:#f0f0f0"></div><svg style="position:absolute;left:1793px;top:1171px" width="14" height="24" viewBox="0 0 14 24" ><path d="M6.7 0.2 L12.8 0.2 L8.1 8.3 L13.2 8.5 L0.2 23.7 L4.7 12.4 L0.2 12.4 Z" fill="#ebb513"/></svg><div class="a t" style="left:1813px;top:1170px;height:25px;line-height:25px;padding-top:2px;letter-spacing:0.000px;width:266px;overflow:hidden;">VDDQ (SWB) Напряжение</div><div class="a t" style="right:399px;top:1170px;height:25px;line-height:25px;text-align:right;padding-top:2px;">1.110 В</div><div class="a t" style="right:279px;top:1170px;height:25px;line-height:25px;text-align:right;padding-top:2px;">1.095 В</div><div class="a t" style="right:159px;top:1170px;height:25px;line-height:25px;text-align:right;padding-top:2px;">1.125 В</div><div class="a t" style="right:39px;top:1170px;height:25px;line-height:25px;text-align:right;padding-top:2px;">1.110 В</div><div class="a" style="left:1788px;top:1196px;width:23px;height:25px;background:#fdfdfd;border-bottom:1px solid #ececec;box-sizing:border-box"></div><svg style="position:absolute;left:1793px;top:1196px" width="14" height="24" viewBox="0 0 14 24" ><path d="M6.7 0.2 L12.8 0.2 L8.1 8.3 L13.2 8.5 L0.2 23.7 L4.7 12.4 L0.2 12.4 Z" fill="#ebb513"/></svg><div class="a t" style="left:1813px;top:1195px;height:25px;line-height:25px;padding-top:2px;letter-spacing:0.000px;width:266px;overflow:hidden;">VPP (SWC) Напряжение</div><div class="a t" style="right:399px;top:1195px;height:25px;line-height:25px;text-align:right;padding-top:2px;">1.815 В</div><div class="a t" style="right:279px;top:1195px;height:25px;line-height:25px;text-align:right;padding-top:2px;">1.800 В</div><div class="a t" style="right:159px;top:1195px;height:25px;line-height:25px;text-align:right;padding-top:2px;">1.815 В</div><div class="a t" style="right:39px;top:1195px;height:25px;line-height:25px;text-align:right;padding-top:2px;">1.815 В</div><div class="a" style="left:1788px;top:1221px;width:23px;height:25px;background:#fdfdfd;border-bottom:1px solid #ececec;box-sizing:border-box"></div><div class="a" style="left:1811px;top:1221px;width:749px;height:25px;background:#f0f0f0"></div><svg style="position:absolute;left:1793px;top:1221px" width="14" height="24" viewBox="0 0 14 24" ><path d="M6.7 0.2 L12.8 0.2 L8.1 8.3 L13.2 8.5 L0.2 23.7 L4.7 12.4 L0.2 12.4 Z" fill="#ebb513"/></svg><div class="a t" style="left:1813px;top:1220px;height:25px;line-height:25px;padding-top:2px;letter-spacing:0.000px;width:266px;overflow:hidden;">1.8В VOUT Напряжение</div><div class="a t" style="right:399px;top:1220px;height:25px;line-height:25px;text-align:right;padding-top:2px;">1.800 В</div><div class="a t" style="right:279px;top:1220px;height:25px;line-height:25px;text-align:right;padding-top:2px;">1.800 В</div><div class="a t" style="right:159px;top:1220px;height:25px;line-height:25px;text-align:right;padding-top:2px;">1.815 В</div><div class="a t" style="right:39px;top:1220px;height:25px;line-height:25px;text-align:right;padding-top:2px;">1.812 В</div><div class="a" style="left:1788px;top:1246px;width:23px;height:25px;background:#fdfdfd;border-bottom:1px solid #ececec;box-sizing:border-box"></div><svg style="position:absolute;left:1793px;top:1246px" width="14" height="24" viewBox="0 0 14 24" ><path d="M6.7 0.2 L12.8 0.2 L8.1 8.3 L13.2 8.5 L0.2 23.7 L4.7 12.4 L0.2 12.4 Z" fill="#ebb513"/></svg><div class="a t" style="left:1813px;top:1245px;height:25px;line-height:25px;padding-top:2px;letter-spacing:0.000px;width:266px;overflow:hidden;">1.0В VOUT Напряжение</div><div class="a t" style="right:399px;top:1245px;height:25px;line-height:25px;text-align:right;padding-top:2px;">1.005 В</div><div class="a t" style="right:279px;top:1245px;height:25px;line-height:25px;text-align:right;padding-top:2px;">0.990 В</div><div class="a t" style="right:159px;top:1245px;height:25px;line-height:25px;text-align:right;padding-top:2px;">1.005 В</div><div class="a t" style="right:39px;top:1245px;height:25px;line-height:25px;text-align:right;padding-top:2px;">1.002 В</div><div class="a" style="left:1788px;top:1271px;width:23px;height:25px;background:#fdfdfd;border-bottom:1px solid #ececec;box-sizing:border-box"></div><div class="a" style="left:1811px;top:1271px;width:749px;height:25px;background:#f0f0f0"></div><svg style="position:absolute;left:1793px;top:1271px" width="14" height="24" viewBox="0 0 14 24" ><path d="M6.7 0.2 L12.8 0.2 L8.1 8.3 L13.2 8.5 L0.2 23.7 L4.7 12.4 L0.2 12.4 Z" fill="#ebb513"/></svg><div class="a t" style="left:1813px;top:1270px;height:25px;line-height:25px;padding-top:2px;letter-spacing:0.000px;width:266px;overflow:hidden;">VIN Напряжение</div><div class="a t" style="right:399px;top:1270px;height:25px;line-height:25px;text-align:right;padding-top:2px;">4.970 В</div><div class="a t" style="right:279px;top:1270px;height:25px;line-height:25px;text-align:right;padding-top:2px;">4.970 В</div><div class="a t" style="right:159px;top:1270px;height:25px;line-height:25px;text-align:right;padding-top:2px;">5.040 В</div><div class="a t" style="right:39px;top:1270px;height:25px;line-height:25px;text-align:right;padding-top:2px;">5.010 В</div><div class="a" style="left:918px;top:1286px;width:1676px;height:80px;background:#f0f0f0"></div><div class="a" style="left:918px;top:1287px;width:50px;height:79px;background:linear-gradient(90deg,#dedede,#ececec 50%,#f0f0f0)"></div><div class="a" style="left:918px;top:1286px;width:1676px;height:1px;background:#606060"></div><div class="a" style="left:2584px;top:1356px;width:10px;height:10px;background:radial-gradient(circle at 0 0, transparent 8.5px, #1c2228 9.5px)"></div><div class="a" style="left:920px;top:1298px;width:59px;height:51px;background:linear-gradient(180deg,#fefefe,#fafafa);border:1px solid #cdcdcd;border-bottom-color:#b8b8b8;border-radius:6px"></div><div class="a" style="left:984px;top:1298px;width:60px;height:51px;background:linear-gradient(180deg,#fefefe,#fafafa);border:1px solid #cdcdcd;border-bottom-color:#b8b8b8;border-radius:6px"></div><svg style="position:absolute;left:926px;top:1316px" width="48" height="22" viewBox="0 0 48 22" ><defs><linearGradient id="arg" x1="0" y1="0" x2="0" y2="1"><stop offset="0" stop-color="#4aa0e8"/><stop offset="1" stop-color="#2f86d6"/></linearGradient></defs><path d="M0.5 10.5 L11.5 0 L11.5 5.3 L21 5.3 L21 15.7 L11.5 15.7 L11.5 21 Z" fill="url(#arg)" stroke="#d8d8d8" stroke-width="0.7"/><path d="M47.5 10.5 L36.5 0 L36.5 5.3 L27 5.3 L27 15.7 L36.5 15.7 L36.5 21 Z" fill="url(#arg)" stroke="#d8d8d8" stroke-width="0.7"/></svg><svg style="position:absolute;left:991px;top:1316px" width="48" height="22" viewBox="0 0 48 22" ><defs><linearGradient id="arg2" x1="0" y1="0" x2="0" y2="1"><stop offset="0" stop-color="#4aa0e8"/><stop offset="1" stop-color="#2f86d6"/></linearGradient></defs><path d="M23.5 10.5 L12.5 0 L12.5 5.3 L1 5.3 L1 15.7 L12.5 15.7 L12.5 21 Z" fill="url(#arg2)" stroke="#d8d8d8" stroke-width="0.7"/><path d="M23.5 10.5 L34.5 0 L34.5 5.3 L46 5.3 L46 15.7 L34.5 15.7 L34.5 21 Z" fill="url(#arg2)" stroke="#d8d8d8" stroke-width="0.7"/></svg><div class="a" style="left:2069px;top:1298px;width:60px;height:51px;background:linear-gradient(180deg,#fefefe,#fafafa);border:1px solid #cdcdcd;border-bottom-color:#b8b8b8;border-radius:6px"></div><div class="a" style="left:2138px;top:1298px;width:60px;height:51px;background:linear-gradient(180deg,#fefefe,#fafafa);border:1px solid #cdcdcd;border-bottom-color:#b8b8b8;border-radius:6px"></div><div class="a" style="left:2307px;top:1298px;width:60px;height:51px;background:linear-gradient(180deg,#fefefe,#fafafa);border:1px solid #cdcdcd;border-bottom-color:#b8b8b8;border-radius:6px"></div><div class="a" style="left:2375px;top:1298px;width:60px;height:51px;background:linear-gradient(180deg,#fefefe,#fafafa);border:1px solid #cdcdcd;border-bottom-color:#b8b8b8;border-radius:6px"></div><div class="a" style="left:2444px;top:1298px;width:60px;height:51px;background:linear-gradient(180deg,#fefefe,#fafafa);border:1px solid #cdcdcd;border-bottom-color:#b8b8b8;border-radius:6px"></div><div class="a" style="left:2514px;top:1298px;width:60px;height:51px;background:linear-gradient(180deg,#fefefe,#fafafa);border:1px solid #cdcdcd;border-bottom-color:#b8b8b8;border-radius:6px"></div><svg style="position:absolute;left:2075px;top:1300px" width="50" height="50" viewBox="0 0 50 50" ><defs><linearGradient id="scr" x1="0" y1="0" x2="1" y2="1"><stop offset="0" stop-color="#a8d8fa"/><stop offset="0.3" stop-color="#2a7fd8"/><stop offset="1" stop-color="#5ab8f0"/></linearGradient><linearGradient id="stand" x1="0" y1="0" x2="0" y2="1"><stop offset="0" stop-color="#d0d4d6"/><stop offset="1" stop-color="#7c8286"/></linearGradient></defs><path d="M23.5 13.1 H38.4 V22.4" stroke="#6a7078" stroke-width="1.3" fill="none"/><ellipse cx="14.5" cy="24.5" rx="7.6" ry="3.4" fill="url(#stand)"/><path d="M12.5 17.5 L16.5 18.0 L16.5 22.5 L12.5 22.5 Z" fill="#9aa0a4"/><g transform="translate(3.5,1.5) rotate(7)"><rect x="0" y="0" width="21.5" height="16.5" rx="0.8" fill="#50575c"/><rect x="1.2" y="1.2" width="19.1" height="14.1" fill="url(#scr)"/><path d="M1.5 10 Q8 2.5 20 3.5 L20 1.5 L1.5 1.5 Z" fill="#ffffff" opacity="0.4"/><rect x="18.5" y="13.5" width="1.2" height="1.2" fill="#3c3"/></g><ellipse cx="35.5" cy="44.5" rx="7.6" ry="3.4" fill="url(#stand)"/><path d="M33.5 37.5 L37.5 38.0 L37.5 42.5 L33.5 42.5 Z" fill="#9aa0a4"/><g transform="translate(24.5,21.5) rotate(7)"><rect x="0" y="0" width="21.5" height="16.5" rx="0.8" fill="#50575c"/><rect x="1.2" y="1.2" width="19.1" height="14.1" fill="url(#scr)"/><path d="M1.5 10 Q8 2.5 20 3.5 L20 1.5 L1.5 1.5 Z" fill="#ffffff" opacity="0.4"/><rect x="18.5" y="13.5" width="1.2" height="1.2" fill="#3c3"/></g></svg><svg style="position:absolute;left:2146px;top:1302px" width="46" height="46" viewBox="0 0 46 46" ><rect x="5.8" y="1.2" width="2.4" height="5.5" rx="1.2" fill="#fff" stroke="#111" stroke-width="1.1"/><rect x="5.8" y="38.3" width="2.4" height="5.5" rx="1.2" fill="#fff" stroke="#111" stroke-width="1.1"/><rect x="1.2" y="10.8" width="5.5" height="2.4" rx="1.2" fill="#fff" stroke="#111" stroke-width="1.1"/><rect x="38.3" y="10.8" width="5.5" height="2.4" rx="1.2" fill="#fff" stroke="#111" stroke-width="1.1"/><rect x="10.8" y="1.2" width="2.4" height="5.5" rx="1.2" fill="#fff" stroke="#111" stroke-width="1.1"/><rect x="10.8" y="38.3" width="2.4" height="5.5" rx="1.2" fill="#fff" stroke="#111" stroke-width="1.1"/><rect x="1.2" y="15.8" width="5.5" height="2.4" rx="1.2" fill="#fff" stroke="#111" stroke-width="1.1"/><rect x="38.3" y="15.8" width="5.5" height="2.4" rx="1.2" fill="#fff" stroke="#111" stroke-width="1.1"/><rect x="15.8" y="1.2" width="2.4" height="5.5" rx="1.2" fill="#fff" stroke="#111" stroke-width="1.1"/><rect x="15.8" y="38.3" width="2.4" height="5.5" rx="1.2" fill="#fff" stroke="#111" stroke-width="1.1"/><rect x="1.2" y="20.8" width="5.5" height="2.4" rx="1.2" fill="#fff" stroke="#111" stroke-width="1.1"/><rect x="38.3" y="20.8" width="5.5" height="2.4" rx="1.2" fill="#fff" stroke="#111" stroke-width="1.1"/><rect x="20.8" y="1.2" width="2.4" height="5.5" rx="1.2" fill="#fff" stroke="#111" stroke-width="1.1"/><rect x="20.8" y="38.3" width="2.4" height="5.5" rx="1.2" fill="#fff" stroke="#111" stroke-width="1.1"/><rect x="1.2" y="25.8" width="5.5" height="2.4" rx="1.2" fill="#fff" stroke="#111" stroke-width="1.1"/><rect x="38.3" y="25.8" width="5.5" height="2.4" rx="1.2" fill="#fff" stroke="#111" stroke-width="1.1"/><rect x="25.8" y="1.2" width="2.4" height="5.5" rx="1.2" fill="#fff" stroke="#111" stroke-width="1.1"/><rect x="25.8" y="38.3" width="2.4" height="5.5" rx="1.2" fill="#fff" stroke="#111" stroke-width="1.1"/><rect x="1.2" y="30.8" width="5.5" height="2.4" rx="1.2" fill="#fff" stroke="#111" stroke-width="1.1"/><rect x="38.3" y="30.8" width="5.5" height="2.4" rx="1.2" fill="#fff" stroke="#111" stroke-width="1.1"/><rect x="30.8" y="1.2" width="2.4" height="5.5" rx="1.2" fill="#fff" stroke="#111" stroke-width="1.1"/><rect x="30.8" y="38.3" width="2.4" height="5.5" rx="1.2" fill="#fff" stroke="#111" stroke-width="1.1"/><rect x="1.2" y="35.8" width="5.5" height="2.4" rx="1.2" fill="#fff" stroke="#111" stroke-width="1.1"/><rect x="38.3" y="35.8" width="5.5" height="2.4" rx="1.2" fill="#fff" stroke="#111" stroke-width="1.1"/><rect x="5" y="5" width="35" height="35" rx="2.5" fill="#0099ff" stroke="#111" stroke-width="1.6"/><circle cx="9.5" cy="9.5" r="1.7" fill="#fff" stroke="#111" stroke-width="1"/><path d="M22.5 9.5 C17 14 15.5 19 16.5 23 C15.5 21.5 14.8 20 15 18.5 C12.5 22 12 27 14 31 C15.5 33.5 17.5 35 19.5 35.5 C17.5 33 17.3 29 19.5 26.5 C20.5 28 21 29.2 22.5 30 C23 27.5 24.5 25.5 25.5 24.5 C26.5 27 26.5 30 26 31.5 C27 31 27.7 30 28 29 C28.5 31.5 27.5 34 25.5 35.5 C28.5 35 31 33 32 30 C33 27 32.5 23 30.5 20 C30.5 22 30 23.5 29 24.5 C28.5 19 26 14 22.5 9.5 Z" fill="#ff0a0a"/></svg><div class="a" style="left:2247px;top:1312.5px;height:25px;line-height:25px;font-family:'Liberation Serif',serif;font-size:18.6px;white-space:pre">0:22:18</div><svg style="position:absolute;left:2314px;top:1301px" width="48" height="48" viewBox="0 0 48 48" ><circle cx="24" cy="24" r="23" fill="#fff" stroke="#222" stroke-width="1.6"/><line x1="24.00" y1="7.50" x2="24.00" y2="2.70" stroke="#111" stroke-width="2.2"/><line x1="33.15" y1="8.15" x2="34.65" y2="5.55" stroke="#111" stroke-width="1.8"/><line x1="39.85" y1="14.85" x2="42.45" y2="13.35" stroke="#111" stroke-width="1.8"/><line x1="40.50" y1="24.00" x2="45.30" y2="24.00" stroke="#111" stroke-width="2.2"/><line x1="39.85" y1="33.15" x2="42.45" y2="34.65" stroke="#111" stroke-width="1.8"/><line x1="33.15" y1="39.85" x2="34.65" y2="42.45" stroke="#111" stroke-width="1.8"/><line x1="24.00" y1="40.50" x2="24.00" y2="45.30" stroke="#111" stroke-width="2.2"/><line x1="14.85" y1="39.85" x2="13.35" y2="42.45" stroke="#111" stroke-width="1.8"/><line x1="8.15" y1="33.15" x2="5.55" y2="34.65" stroke="#111" stroke-width="1.8"/><line x1="7.50" y1="24.00" x2="2.70" y2="24.00" stroke="#111" stroke-width="2.2"/><line x1="8.15" y1="14.85" x2="5.55" y2="13.35" stroke="#111" stroke-width="1.8"/><line x1="14.85" y1="8.15" x2="13.35" y2="5.55" stroke="#111" stroke-width="1.8"/><line x1="24" y1="24" x2="36" y2="24" stroke="#111" stroke-width="3" stroke-linecap="round"/><line x1="24" y1="24" x2="27" y2="4.5" stroke="#111" stroke-width="1.8"/><circle cx="24" cy="24" r="1.8" fill="#111"/></svg><svg style="position:absolute;left:2389px;top:1301px" width="42" height="47" viewBox="0 0 42 47" ><defs><linearGradient id="pg" x1="0" y1="0" x2="1" y2="1"><stop offset="0" stop-color="#f4f4f4"/><stop offset="1" stop-color="#e2e2e2"/></linearGradient></defs><ellipse cx="22" cy="43" rx="18" ry="2.5" fill="#000" opacity="0.08"/><path d="M1 1 H28 L36 9 V42 H1 Z" fill="url(#pg)" stroke="#b4b4b4" stroke-width="1.6"/><path d="M28 1 V9 H36" fill="#fafafa" stroke="#c8c8c8" stroke-width="1"/><rect x="6" y="6" width="18" height="34" fill="#ececec"/><line x1="6" y1="7.0" x2="24" y2="7.0" stroke="#d2d2d2" stroke-width="0.9"/><line x1="6" y1="9.8" x2="24" y2="9.8" stroke="#d2d2d2" stroke-width="0.9"/><line x1="6" y1="12.6" x2="24" y2="12.6" stroke="#d2d2d2" stroke-width="0.9"/><line x1="6" y1="15.4" x2="24" y2="15.4" stroke="#d2d2d2" stroke-width="0.9"/><line x1="6" y1="18.2" x2="24" y2="18.2" stroke="#d2d2d2" stroke-width="0.9"/><line x1="6" y1="21.0" x2="24" y2="21.0" stroke="#d2d2d2" stroke-width="0.9"/><line x1="6" y1="23.8" x2="24" y2="23.8" stroke="#d2d2d2" stroke-width="0.9"/><line x1="6" y1="26.6" x2="24" y2="26.6" stroke="#d2d2d2" stroke-width="0.9"/><line x1="6" y1="29.4" x2="24" y2="29.4" stroke="#d2d2d2" stroke-width="0.9"/><line x1="6" y1="32.2" x2="24" y2="32.2" stroke="#d2d2d2" stroke-width="0.9"/><line x1="6" y1="35.0" x2="24" y2="35.0" stroke="#d2d2d2" stroke-width="0.9"/><line x1="6" y1="37.8" x2="24" y2="37.8" stroke="#d2d2d2" stroke-width="0.9"/><line x1="6" y1="40.6" x2="24" y2="40.6" stroke="#d2d2d2" stroke-width="0.9"/><line x1="6" y1="43.4" x2="24" y2="43.4" stroke="#d2d2d2" stroke-width="0.9"/><line x1="12" y1="6" x2="12" y2="40" stroke="#d2d2d2" stroke-width="0.9"/><path d="M27 25 H33 V31 H39 V37 H33 V43 H27 V37 H21 V31 H27 Z" fill="#9ccd52" stroke="#8ab944" stroke-width="1"/></svg><svg style="position:absolute;left:2451px;top:1301px" width="48" height="48" viewBox="0 0 48 48" ><defs><linearGradient id="gg" x1="0" y1="0" x2="1" y2="1"><stop offset="0" stop-color="#9aa2a6"/><stop offset="0.3" stop-color="#e4e8ea"/><stop offset="0.7" stop-color="#d0d5d8"/><stop offset="1" stop-color="#7c8488"/></linearGradient><radialGradient id="gr" cx="0.5" cy="0.5" r="0.5"><stop offset="0.5" stop-color="#f0f2f3"/><stop offset="0.8" stop-color="#9aa0a4"/><stop offset="1" stop-color="#d8dcde"/></radialGradient></defs><polygon points="22.24,6.09 26.25,1.11 30.68,1.99 32.49,8.13 35.42,10.09 41.78,9.41 44.28,13.16 41.22,18.77 41.91,22.24 46.89,26.25 46.01,30.68 39.87,32.49 37.91,35.42 38.59,41.78 34.84,44.28 29.23,41.22 25.76,41.91 21.75,46.89 17.32,46.01 15.51,39.87 12.58,37.91 6.22,38.59 3.72,34.84 6.78,29.23 6.09,25.76 1.11,21.75 1.99,17.32 8.13,15.51 10.09,12.58 9.41,6.22 13.16,3.72 18.77,6.78" fill="url(#gg)" stroke="#8a9094" stroke-width="0.6"/><circle cx="24" cy="24" r="14" fill="url(#gr)" opacity="0.85"/><circle cx="24" cy="24" r="8.2" fill="#fdfdfd" stroke="#6e7478" stroke-width="1.2"/></svg><svg style="position:absolute;left:2527px;top:1307px" width="36" height="36" viewBox="0 0 36 36" ><defs><linearGradient id="xg" x1="0" y1="0" x2="1" y2="1"><stop offset="0" stop-color="#1874b4"/><stop offset="1" stop-color="#5cbcec"/></linearGradient></defs><path d="M1 8.2 L8.2 1 L18 10.8 L27.8 1 L35 8.2 L25.2 18 L35 27.8 L27.8 35 L18 25.2 L8.2 35 L1 27.8 L10.8 18 Z" fill="url(#xg)" stroke-linejoin="round"/></svg></body></html>
